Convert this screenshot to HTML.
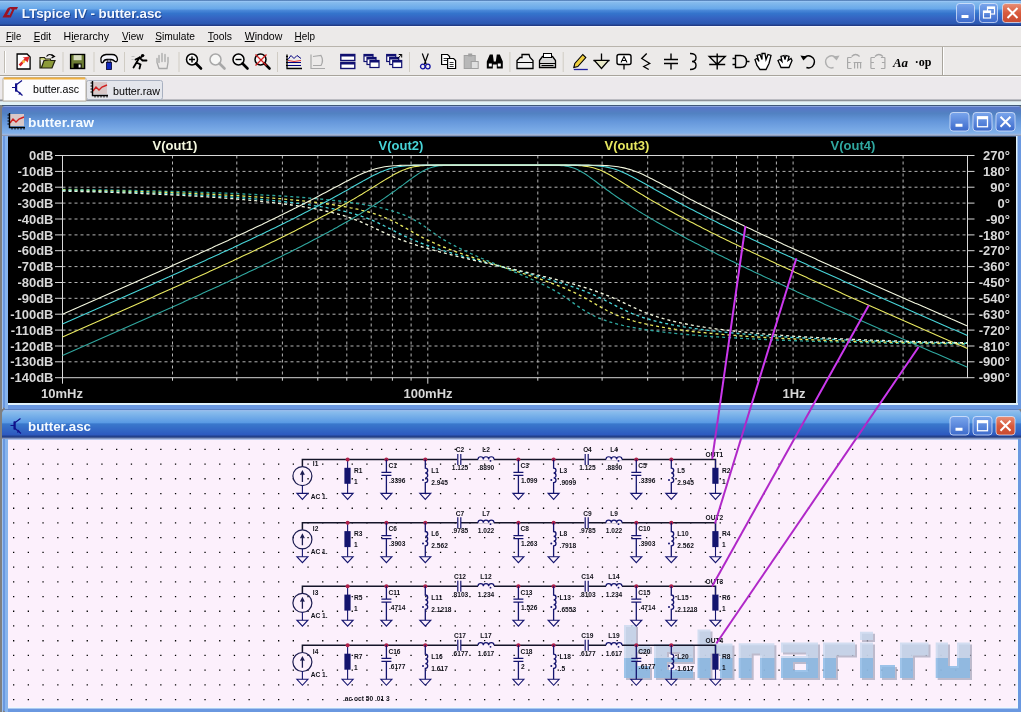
<!DOCTYPE html>
<html><head><meta charset="utf-8"><style>
html,body{margin:0;padding:0;width:1021px;height:712px;overflow:hidden;background:#808080}
svg{display:block;will-change:transform}
</style></head><body>
<svg width="1021" height="712" viewBox="0 0 1021 712">
<defs>
<linearGradient id="tbar" x1="0" y1="0" x2="0" y2="1">
<stop offset="0" stop-color="#1E4A8A"/><stop offset="0.04" stop-color="#9CC8F8"/>
<stop offset="0.10" stop-color="#84BAEC"/><stop offset="0.34" stop-color="#68A8EA"/>
<stop offset="0.40" stop-color="#4A88D8"/><stop offset="0.52" stop-color="#3474CC"/>
<stop offset="0.72" stop-color="#3562C0"/><stop offset="0.92" stop-color="#2A58B0"/>
<stop offset="0.97" stop-color="#223C88"/><stop offset="1" stop-color="#203A80"/>
</linearGradient>
<linearGradient id="wbar" x1="0" y1="0" x2="0" y2="1">
<stop offset="0" stop-color="#8AB0E8"/><stop offset="0.1" stop-color="#A8C8F4"/>
<stop offset="0.45" stop-color="#7AA8E8"/><stop offset="0.55" stop-color="#5C8ED8"/>
<stop offset="1" stop-color="#5A88D0"/>
</linearGradient>
<linearGradient id="btn" x1="0" y1="0" x2="0" y2="1">
<stop offset="0" stop-color="#7AA6EC"/><stop offset="1" stop-color="#3C6ACC"/>
</linearGradient>
<linearGradient id="btnx" x1="0" y1="0" x2="0" y2="1">
<stop offset="0" stop-color="#E89078"/><stop offset="0.5" stop-color="#D85A3C"/><stop offset="1" stop-color="#C84A30"/>
</linearGradient>
<linearGradient id="wm" x1="0" y1="0" x2="0" y2="1">
<stop offset="0" stop-color="#C8D8EC"/><stop offset="0.38" stop-color="#D4E2F2"/>
<stop offset="0.40" stop-color="#98BEE4"/><stop offset="1" stop-color="#8CB4DE"/>
</linearGradient>
<linearGradient id="wbar_in" x1="0" y1="0" x2="0" y2="1">
<stop offset="0" stop-color="#A0B8E8"/><stop offset="0.05" stop-color="#5876C6"/>
<stop offset="0.25" stop-color="#5282C2"/><stop offset="0.5" stop-color="#6496DA"/>
<stop offset="0.9" stop-color="#80B0EA"/><stop offset="1" stop-color="#A8B8D8"/>
</linearGradient>
<linearGradient id="tbar30" gradientUnits="userSpaceOnUse" x1="0" y1="0" x2="0" y2="30">
<stop offset="0" stop-color="#2A58A8"/><stop offset="0.04" stop-color="#9ABCEC"/>
<stop offset="0.10" stop-color="#88BCEC"/><stop offset="0.45" stop-color="#5A9AE4"/>
<stop offset="0.50" stop-color="#3A78CC"/><stop offset="0.85" stop-color="#2D5AC0"/>
<stop offset="0.93" stop-color="#203A80"/><stop offset="1" stop-color="#A0B0D0"/>
</linearGradient>
<linearGradient id="wbar_in40" gradientUnits="userSpaceOnUse" x1="0" y1="0" x2="0" y2="30">
<stop offset="0" stop-color="#A0B8E8"/><stop offset="0.05" stop-color="#5876C6"/>
<stop offset="0.25" stop-color="#5282C2"/><stop offset="0.5" stop-color="#6496DA"/>
<stop offset="0.9" stop-color="#80B0EA"/><stop offset="0.97" stop-color="#A8B8D8"/><stop offset="1" stop-color="#707890"/>
</linearGradient>
</defs>
<rect x="0" y="0" width="1021" height="712" fill="#808080"/>
<rect x="0" y="0" width="1021" height="26" fill="url(#tbar)"/>
<path d="M2.5,17.5 L7.5,8.5 Q8.5,7 10.5,7 L11.5,7 L7,15 L10,15 L8.8,17.5 Z" fill="#9A1424"/>
<path d="M10,7 L18,7 L16.8,9.6 L14.5,9.6 L10.8,17.5 L8.6,17.5 L12.3,9.6 L11,9.6 Z" fill="#9A1424"/>
<text x="22.8" y="19.3" font-family='"Liberation Sans", sans-serif' font-weight="bold" font-size="13" fill="#102868" fill-opacity="0.55" textLength="140" lengthAdjust="spacingAndGlyphs">LTspice IV - butter.asc</text>
<text x="21.8" y="18.3" font-family='"Liberation Sans", sans-serif' font-weight="bold" font-size="13" fill="#F4F8FF" textLength="140" lengthAdjust="spacingAndGlyphs">LTspice IV - butter.asc</text>
<rect x="956.5" y="3.5" width="18" height="19" rx="3" fill="url(#btn)" stroke="#E8F0FF" stroke-opacity="0.7"/>
<rect x="961.5" y="15.0" width="7" height="3" fill="#FFFFFF"/>
<rect x="979.5" y="3.5" width="18" height="19" rx="3" fill="url(#btn)" stroke="#E8F0FF" stroke-opacity="0.7"/>
<rect x="987.5" y="7.0" width="7" height="7" fill="none" stroke="#FFFFFF" stroke-width="1.2"/><rect x="987.5" y="7.0" width="7" height="2" fill="#FFFFFF"/>
<rect x="983.5" y="11.0" width="7" height="7" fill="url(#btn)" stroke="#FFFFFF" stroke-width="1.2"/><rect x="983.5" y="11.0" width="7" height="2" fill="#FFFFFF"/>
<rect x="1002.5" y="3.5" width="20" height="19" rx="3" fill="url(#btnx)" stroke="#E8F0FF" stroke-opacity="0.7"/>
<path d="M1007.5,8.0 L1017.5,18.0 M1017.5,8.0 L1007.5,18.0" stroke="#FFFFFF" stroke-width="2"/>
<rect x="0" y="26" width="1021" height="21" fill="#ECEAE9"/>
<rect x="0" y="26" width="1021" height="1" fill="#F4F6FC"/>
<rect x="0" y="46" width="1021" height="1" fill="#B8B4AC"/>
<text x="6" y="39.8" font-family='"Liberation Sans", sans-serif' font-size="10.8" fill="#000000" textLength="15.2" lengthAdjust="spacingAndGlyphs">File</text>
<rect x="6" y="41" width="6" height="1" fill="#000"/>
<text x="33.7" y="39.8" font-family='"Liberation Sans", sans-serif' font-size="10.8" fill="#000000" textLength="17.3" lengthAdjust="spacingAndGlyphs">Edit</text>
<rect x="33.7" y="41" width="6" height="1" fill="#000"/>
<text x="63.5" y="39.8" font-family='"Liberation Sans", sans-serif' font-size="10.8" fill="#000000" textLength="45.5" lengthAdjust="spacingAndGlyphs">Hierarchy</text>
<rect x="71.5" y="41" width="3" height="1" fill="#000"/>
<text x="122" y="39.8" font-family='"Liberation Sans", sans-serif' font-size="10.8" fill="#000000" textLength="21.4" lengthAdjust="spacingAndGlyphs">View</text>
<rect x="122" y="41" width="6" height="1" fill="#000"/>
<text x="155.3" y="39.8" font-family='"Liberation Sans", sans-serif' font-size="10.8" fill="#000000" textLength="39.7" lengthAdjust="spacingAndGlyphs">Simulate</text>
<rect x="155.3" y="41" width="6" height="1" fill="#000"/>
<text x="207.8" y="39.8" font-family='"Liberation Sans", sans-serif' font-size="10.8" fill="#000000" textLength="24.2" lengthAdjust="spacingAndGlyphs">Tools</text>
<rect x="207.8" y="41" width="6" height="1" fill="#000"/>
<text x="244.7" y="39.8" font-family='"Liberation Sans", sans-serif' font-size="10.8" fill="#000000" textLength="37.6" lengthAdjust="spacingAndGlyphs">Window</text>
<rect x="244.7" y="41" width="10" height="1" fill="#000"/>
<text x="294.6" y="39.8" font-family='"Liberation Sans", sans-serif' font-size="10.8" fill="#000000" textLength="20.4" lengthAdjust="spacingAndGlyphs">Help</text>
<rect x="294.6" y="41" width="7" height="1" fill="#000"/>
<rect x="0" y="47" width="1021" height="29" fill="#ECEAE9"/>
<rect x="0" y="75" width="1021" height="1" fill="#A8A49C"/>
<rect x="0" y="76" width="1021" height="1" fill="#F8F8F8"/>
<rect x="4" y="51" width="1" height="22" fill="#C0BCB4"/><rect x="5" y="51" width="1" height="22" fill="#FFFFFF"/>
<rect x="942" y="47" width="1" height="28" fill="#A8A49C"/><rect x="943" y="47" width="1" height="28" fill="#FFFFFF"/>
<g transform="translate(23.6,61.5)"><path d="M-6.5,-7.5 L3.5,-7.5 L6.5,-4.5 L6.5,7.5 L-6.5,7.5 Z" fill="#FFFFFF" stroke="#000" stroke-width="1.3"/><path d="M-5,3 L1,-3 L-1,-4 L6,-5 L4,1 L2,-1 L-3,5 Z" fill="#E02828"/><circle cx="0" cy="0" r="1.5" fill="#F8C040"/></g><g transform="translate(47.5,61.5)"><path d="M-7.5,-2 L-7.5,6.5 L4.5,6.5 L7.5,-1 L-3.5,-1 L-6,6" fill="#8C9A38" stroke="#202010" stroke-width="1.2"/><path d="M-7.5,-2 L-7.5,-4 L-3,-4 L-2,-2.5 L3,-2.5 L3,-1" fill="#C8D070" stroke="#202010" stroke-width="1.1"/><path d="M-1,-5 Q2,-9 6,-5" fill="none" stroke="#000" stroke-width="1.2"/><path d="M4,-7 L7,-5 L4,-3.5" fill="none" stroke="#000" stroke-width="1.1"/></g><g transform="translate(77.6,61.5)"><rect x="-7" y="-7" width="14" height="14" fill="#6C7C34" stroke="#000" stroke-width="1.4"/><rect x="-4" y="-6.3" width="8" height="5" fill="#D8DCC0"/><rect x="-4" y="2" width="8" height="5" fill="#000"/><rect x="1" y="3" width="2" height="3" fill="#FFF"/></g><g transform="translate(109.0,61.5)"><path d="M-8,-1 Q-9,-6 -3,-7 L3,-7 Q8,-7 8.5,-2 Q8,1 6,0 Q4,-2 2,-2 L-2,-2 Q-5,-2 -6,1 Q-8,2 -8,-1 Z" fill="#F4F4FA" stroke="#000" stroke-width="1.3"/><rect x="-1.8" y="-2" width="3.6" height="3" fill="#8888A8" stroke="#000" stroke-width="0.6"/><rect x="-2.5" y="1" width="5" height="7" fill="#1028C0" stroke="#000030" stroke-width="0.8"/></g><g transform="translate(139.5,61.5)"><path d="M-6,6 L-3,1 L1,3 L0,7 M-3,1 L0,-4 L3,-1 L7,-1 M0,-4 L-4,-2 M1,-4 L4,-6" fill="none" stroke="#000" stroke-width="1.8" stroke-linecap="round"/><circle cx="3" cy="-6" r="1.6" fill="#000"/><path d="M-8,-5 L-5,-5 M-8,-2 L-6,-2" stroke="#C0C0C0" stroke-width="1"/></g><g transform="translate(163.0,61.5)"><path d="M-4,7 L-6,1 L-6,-3 M-4,1 L-4,-6 M-1,0 L-1,-8 M2,0 L2,-7 M5,1 L5,-4 M5,1 L4,7 L-4,7" fill="none" stroke="#A8A8A8" stroke-width="1.3" stroke-linecap="round"/></g><g transform="translate(194.0,61.5)"><circle cx="-2" cy="-2" r="5.5" fill="#FFFFFF" fill-opacity="0.6" stroke="#000" stroke-width="1.5"/><path d="M2,2 L7,7" stroke="#000" stroke-width="2.6" stroke-linecap="round"/><path d="M-5,-2 L1,-2 M-2,-5 L-2,1" stroke="#000" stroke-width="1.4"/></g><g transform="translate(217.5,61.5)"><circle cx="-2" cy="-2" r="5.5" fill="#FFFFFF" fill-opacity="0.6" stroke="#A8A8A8" stroke-width="1.5"/><path d="M2,2 L7,7" stroke="#A8A8A8" stroke-width="2.6" stroke-linecap="round"/></g><g transform="translate(240.5,61.5)"><circle cx="-2" cy="-2" r="5.5" fill="#FFFFFF" fill-opacity="0.6" stroke="#000" stroke-width="1.5"/><path d="M2,2 L7,7" stroke="#000" stroke-width="2.6" stroke-linecap="round"/><path d="M-5,-2 L1,-2" stroke="#000" stroke-width="1.4"/></g><g transform="translate(262.5,61.5)"><circle cx="-2" cy="-2" r="5.5" fill="#FFFFFF" fill-opacity="0.6" stroke="#000" stroke-width="1.5"/><path d="M2,2 L7,7" stroke="#000" stroke-width="2.6" stroke-linecap="round"/><path d="M-7,-7 L4,4 M4,-7 L-7,4" stroke="#D02020" stroke-width="1.3"/></g><g transform="translate(294.0,61.5)"><path d="M-7,-7 L-7,7 L8,7" fill="none" stroke="#000" stroke-width="1.3"/><path d="M-6,-2 L-3,-6 L0,-3 L3,-6 L7,-3 M-6,1 L7,1 M-6,4 L7,4" fill="none" stroke="#000080" stroke-width="1"/><path d="M-6,-1 L0,-0 L7,-1" stroke="#E03030" stroke-width="1" fill="none"/><path d="M-8,-5 h2 M-8,-2 h2 M-8,1 h2 M-8,4 h2" stroke="#000" stroke-width="1"/></g><g transform="translate(317.0,61.5)"><path d="M-6,-7 L-6,7 L8,7 M-4,-5 L4,-6 Q7,-1 4,4 L-4,4" fill="none" stroke="#A8A8A8" stroke-width="1.2"/></g><g transform="translate(347.8,61.5)"><rect x="-7" y="-7" width="14" height="6" fill="#FFF" stroke="#101070" stroke-width="1.4"/><rect x="-7" y="1" width="14" height="6" fill="#FFF" stroke="#101070" stroke-width="1.4"/><rect x="-7" y="-7" width="14" height="2" fill="#101070"/><rect x="-7" y="1" width="14" height="2" fill="#101070"/></g><g transform="translate(371.0,61.5)"><rect x="-7" y="-7" width="9" height="7" fill="#FFF" stroke="#101070" stroke-width="1.2"/><rect x="-7" y="-7" width="9" height="2" fill="#101070"/><rect x="-4" y="-4" width="9" height="7" fill="#FFF" stroke="#101070" stroke-width="1.2"/><rect x="-4" y="-4" width="9" height="2" fill="#101070"/><rect x="-1" y="-1" width="9" height="7" fill="#FFF" stroke="#101070" stroke-width="1.2"/><rect x="-1" y="-1" width="9" height="2" fill="#101070"/></g><g transform="translate(393.7,61.5)"><rect x="-7" y="-7" width="9" height="7" fill="#FFF" stroke="#101070" stroke-width="1.2"/><rect x="-7" y="-7" width="9" height="2" fill="#101070"/><rect x="-4" y="-4" width="9" height="7" fill="#FFF" stroke="#101070" stroke-width="1.2"/><rect x="-4" y="-4" width="9" height="2" fill="#101070"/><rect x="-1" y="-1" width="9" height="7" fill="#FFF" stroke="#101070" stroke-width="1.2"/><rect x="-1" y="-1" width="9" height="2" fill="#101070"/><path d="M4,-3 L8,-7 M5,-7 L8,-7 L8,-4" fill="none" stroke="#000" stroke-width="1"/></g><g transform="translate(425.3,61.5)"><path d="M-3,-8 L1,3 M3,-8 L-1,3" stroke="#000" stroke-width="1.2"/><circle cx="-2.5" cy="5" r="2.3" fill="none" stroke="#1010A0" stroke-width="1.3"/><circle cx="2.5" cy="5" r="2.3" fill="none" stroke="#1010A0" stroke-width="1.3"/></g><g transform="translate(448.6,61.5)"><path d="M-7,-7 L-1,-7 L1,-5 L1,3 L-7,3 Z" fill="#FFF" stroke="#000" stroke-width="1.2"/><path d="M-1,-3 L5,-3 L7,-1 L7,7 L-1,7 Z" fill="#FFF" stroke="#000" stroke-width="1.2"/><path d="M-5,-3 h4 M-5,-1 h4 M1,1 h4 M1,3 h4 M1,5 h4" stroke="#000" stroke-width="0.8"/></g><g transform="translate(471.2,61.5)"><rect x="-7" y="-6" width="11" height="13" fill="#B8B8B8" stroke="#A0A0A0"/><rect x="-3" y="-8" width="4" height="3" fill="#A0A0A0"/><rect x="0" y="0" width="7" height="7" fill="#E0E0E0" stroke="#A0A0A0"/></g><g transform="translate(494.8,61.5)"><path d="M-8,7 L-8,0 L-5,-7 L-2,-7 L-1,0 L1,0 L2,-7 L5,-7 L8,0 L8,7 L2,7 L2,3 L-2,3 L-2,7 Z" fill="#000"/><rect x="-6" y="2" width="3" height="3" fill="#FFF"/><rect x="3" y="2" width="3" height="3" fill="#FFF"/></g><g transform="translate(525.0,61.5)"><path d="M-8,-1 L-5,-4 L-3,-4 L-3,-7 L4,-7 L5,-4 L8,-1 L8,7 L-8,7 Z" fill="#F0F0F0" stroke="#000" stroke-width="1.3"/><path d="M-8,1 L8,1" stroke="#000" stroke-width="1"/></g><g transform="translate(547.5,61.5)"><path d="M-8,-1 L-5,-5 L5,-5 L8,-1 L8,6 L-8,6 Z" fill="#D8D8D8" stroke="#000" stroke-width="1.3"/><rect x="-4" y="-8" width="8" height="4" fill="#FFF" stroke="#000"/><path d="M-8,2 L8,2 M-6,4 L6,4" stroke="#000" stroke-width="1"/></g><g transform="translate(579.8,61.5)"><path d="M-6,8 L8,8" stroke="#2020A0" stroke-width="1.3"/><path d="M-6,6 L-5,2 L3,-7 L6,-4 L-2,5 Z" fill="#F0D040" stroke="#000" stroke-width="1.1"/></g><g transform="translate(601.5,61.5)"><path d="M0,-8 L0,-1 M-8,-1 L8,-1" stroke="#000" stroke-width="1.3"/><path d="M-7,-1 L7,-1 L0,7 Z" fill="#E8E8C8" stroke="#000" stroke-width="1.2"/></g><g transform="translate(624.0,61.5)"><rect x="-7" y="-7" width="14" height="10" rx="2" fill="#FFF" stroke="#000" stroke-width="1.4"/><path d="M-3,1 L0,-5 L3,1 M-2,-1 L2,-1" fill="none" stroke="#000" stroke-width="1.1"/><path d="M0,3 L0,8" stroke="#000" stroke-width="1.3"/></g><g transform="translate(646.7,61.5)"><path d="M0,-8 L-5,-3 L3,2 L-3,5 L2,8" fill="none" stroke="#000" stroke-width="1.3"/></g><g transform="translate(671.0,61.5)"><path d="M0,-8 L0,-2 M-7,-2 L7,-2 M-7,2 L7,2 M0,2 L0,8" stroke="#000" stroke-width="1.4"/></g><g transform="translate(693.0,61.5)"><path d="M-3,-8 Q3,-8 3,-4 Q3,0 -1,0 Q3,0 3,4 Q3,8 -3,8" fill="none" stroke="#000" stroke-width="1.4"/></g><g transform="translate(717.2,61.5)"><path d="M-8,-5 L8,-5 L0,3 Z M-8,3 L8,3 M0,-8 L0,8" fill="none" stroke="#000" stroke-width="1.4"/></g><g transform="translate(740.5,61.5)"><path d="M-5,-6 L0,-6 Q6,-6 6,0 Q6,6 0,6 L-5,6 Z M-8,-3 L-5,-3 M-8,3 L-5,3 M6,0 L9,0" fill="none" stroke="#000" stroke-width="1.4"/></g><g transform="translate(763.0,61.5)"><path d="M-6,4 L-8,-2 L-6,-3 L-4,0 L-6,-6 L-3,-7 L-1,-2 L-1,-8 L2,-8 L3,-2 L5,-7 L8,-6 L6,2 L3,8 L-3,8 Z" fill="#FFF" stroke="#000" stroke-width="1.3"/></g><g transform="translate(785.0,61.5)"><path d="M-4,6 L-7,-1 L-5,-2 L-3,0 L-4,-5 L-1,-6 L0,-2 L1,-6 L4,-5 L3,-1 L6,-3 L7,-1 L4,6 Z" fill="#FFF" stroke="#000" stroke-width="1.3"/></g><g transform="translate(808.4,61.5)"><path d="M-5,-3 A6,6 0 1 1 -2,6" fill="none" stroke="#000" stroke-width="1.6"/><path d="M-8,-6 L-5,-1 L-1,-5 Z" fill="#000"/></g><g transform="translate(831.6,61.5)"><path d="M5,-3 A6,6 0 1 0 2,6" fill="none" stroke="#B0B0B0" stroke-width="1.6"/><path d="M8,-6 L5,-1 L1,-5 Z" fill="#B0B0B0"/></g><g transform="translate(854.6,61.5)"><path d="M-7,-4 L-7,7 M-7,-4 L-3,-4 M-7,1 L-4,1 M-7,7 L-3,7 M-1,1 L7,1 M0,1 L0,7 M3,1 L3,7 M6,1 L6,7 M-3,-5 Q1,-9 5,-5" fill="none" stroke="#A8A8A8" stroke-width="1.2"/></g><g transform="translate(877.9,61.5)"><path d="M-7,-4 L-7,7 M-7,-4 L-3,-4 M-7,1 L-4,1 M-7,7 L-3,7 M7,-4 L7,7 M7,-4 L3,-4 M7,1 L4,1 M7,7 L3,7 M-3,-5 Q1,-9 5,-5" fill="none" stroke="#A8A8A8" stroke-width="1.2"/></g><text x="900.5" y="66.5" text-anchor="middle" font-family='"Liberation Serif", serif' font-weight="bold" font-style="italic" font-size="13" fill="#000">Aa</text><text x="923" y="65.5" text-anchor="middle" font-family='"Liberation Serif", serif' font-weight="bold" font-size="12" fill="#000">·op</text>
<rect x="62.5" y="52" width="1" height="20" fill="#D0CCC4"/>
<rect x="93.5" y="52" width="1" height="20" fill="#D0CCC4"/>
<rect x="124" y="52" width="1" height="20" fill="#D0CCC4"/>
<rect x="178.5" y="52" width="1" height="20" fill="#D0CCC4"/>
<rect x="277" y="52" width="1" height="20" fill="#D0CCC4"/>
<rect x="409" y="52" width="1" height="20" fill="#D0CCC4"/>
<rect x="509.4" y="52" width="1" height="20" fill="#D0CCC4"/>
<rect x="562.7" y="52" width="1" height="20" fill="#D0CCC4"/>
<rect x="0" y="77" width="1021" height="28" fill="#ECE9EC"/>
<rect x="0" y="99.5" width="1021" height="2" fill="#8C9098"/>
<rect x="0" y="101.5" width="1021" height="3.5" fill="#E2F2F6"/>
<rect x="86.5" y="80.5" width="76" height="19" rx="2" fill="#E4E6EC" stroke="#A8B0C0"/>
<path d="M3,101 L3,79 Q3,77.5 5,77.5 L84,77.5 Q86,77.5 86,79 L86,101 Z" fill="#FCFCFE" stroke="#B8B0A0"/>
<rect x="4" y="77.5" width="81" height="2" fill="#F0B040"/>
<text x="33" y="93" font-family='"Liberation Sans", sans-serif' font-size="11" fill="#000000" textLength="46" lengthAdjust="spacingAndGlyphs">butter.asc</text>
<text x="113" y="95" font-family='"Liberation Sans", sans-serif' font-size="11" fill="#000000" textLength="47" lengthAdjust="spacingAndGlyphs">butter.raw</text>
<path d="M12,87.5 L16,87.5 M16,83.5 L16,91.5 M16,85.0 L22,80.5 M16,90.0 L22.5,95.5" stroke="#10108A" stroke-width="1.2" fill="none"/>
<rect x="15" y="83.5" width="2.2" height="8" fill="#10108A"/>
<path d="M18.5,95.0 L21.5,93.5 L19.5,91.5 Z" fill="#10108A"/>
<rect x="93" y="82" width="14" height="12" fill="#D8C8C8"/>
<path d="M93,91 L96,87 L99,90 L102,87 L107,85" stroke="#D02020" stroke-width="1.4" fill="none"/>
<path d="M92.5,81 L92.5,95.5 L108,95.5" stroke="#000" stroke-width="1.4" fill="none"/>
<path d="M90.5,83h2M90.5,86h2M90.5,89h2M90.5,92h2M95,97.5v-2M98,97.5v-2M101,97.5v-2M104,97.5v-2M107,97.5v-2" stroke="#000" stroke-width="1"/>
<rect x="2" y="105" width="1019" height="304" rx="5" fill="#6A98E0"/>
<rect x="2" y="117" width="1" height="292" fill="#9CC0F0"/>
<rect x="5" y="135" width="3" height="274" fill="#88B4EC"/>
<rect x="1016" y="135" width="5" height="274" fill="#6A98E0"/>
<rect x="2" y="105" width="1019" height="1" fill="#405878"/>
<svg x="2" y="106" width="1019" height="30" viewBox="0 0 1019 30" preserveAspectRatio="none"><rect x="0" y="0" width="1019" height="40" rx="4" fill="url(#wbar_in40)"/></svg>
<rect x="10" y="114" width="14" height="12" fill="#D8C8C8"/>
<path d="M10,123 L13,119 L16,122 L19,119 L24,117" stroke="#D02020" stroke-width="1.4" fill="none"/>
<path d="M9.5,113 L9.5,127.5 L25,127.5" stroke="#000" stroke-width="1.4" fill="none"/>
<path d="M7.5,115h2M7.5,118h2M7.5,121h2M7.5,124h2M12,129.5v-2M15,129.5v-2M18,129.5v-2M21,129.5v-2M24,129.5v-2" stroke="#000" stroke-width="1"/>
<text x="28" y="126.5" font-family='"Liberation Sans", sans-serif' font-weight="bold" font-size="13.5" fill="#F4FAFF" textLength="66" lengthAdjust="spacingAndGlyphs">butter.raw</text>
<rect x="950.0" y="112.5" width="19" height="18.5" rx="3" fill="url(#btn)" stroke="#E8F0FF" stroke-opacity="0.7"/>
<rect x="955.5" y="123.75" width="7" height="3" fill="#FFFFFF"/>
<rect x="973.0" y="112.5" width="19" height="18.5" rx="3" fill="url(#btn)" stroke="#E8F0FF" stroke-opacity="0.7"/>
<rect x="977.5" y="116.75" width="10" height="10" fill="none" stroke="#FFFFFF" stroke-width="1.3"/><rect x="977.5" y="116.75" width="10" height="2.5" fill="#FFFFFF"/>
<rect x="996.0" y="112.5" width="19" height="18.5" rx="3" fill="url(#btn)" stroke="#E8F0FF" stroke-opacity="0.7"/>
<path d="M1000.5,116.75 L1010.5,126.75 M1010.5,116.75 L1000.5,126.75" stroke="#FFFFFF" stroke-width="2"/>
<rect x="2" y="409" width="1019" height="303" rx="5" fill="#6A98E0"/>
<rect x="2" y="421" width="1" height="291" fill="#9CC0F0"/>
<rect x="5" y="439" width="3" height="273" fill="#88B4EC"/>
<rect x="1016" y="439" width="5" height="273" fill="#6A98E0"/>
<svg x="2" y="409" width="1019" height="30" viewBox="0 0 1019 30" preserveAspectRatio="none"><rect x="0" y="0" width="1019" height="40" rx="5" fill="url(#tbar30)"/></svg>
<path d="M10.5,425.5 L14.5,425.5 M14.5,421.5 L14.5,429.5 M14.5,423.0 L20.5,418.5 M14.5,428.0 L21.0,433.5" stroke="#10108A" stroke-width="1.2" fill="none"/>
<rect x="13.5" y="421.5" width="2.2" height="8" fill="#10108A"/>
<path d="M17.0,433.0 L20.0,431.5 L18.0,429.5 Z" fill="#10108A"/>
<text x="28" y="430.5" font-family='"Liberation Sans", sans-serif' font-weight="bold" font-size="13.5" fill="#F4FAFF" textLength="63" lengthAdjust="spacingAndGlyphs">butter.asc</text>
<rect x="950.0" y="416.5" width="19" height="18.5" rx="3" fill="url(#btn)" stroke="#E8F0FF" stroke-opacity="0.7"/>
<rect x="955.5" y="427.75" width="7" height="3" fill="#FFFFFF"/>
<rect x="973.0" y="416.5" width="19" height="18.5" rx="3" fill="url(#btn)" stroke="#E8F0FF" stroke-opacity="0.7"/>
<rect x="977.5" y="420.75" width="10" height="10" fill="none" stroke="#FFFFFF" stroke-width="1.3"/><rect x="977.5" y="420.75" width="10" height="2.5" fill="#FFFFFF"/>
<rect x="996.0" y="416.5" width="19" height="18.5" rx="3" fill="url(#btnx)" stroke="#E8F0FF" stroke-opacity="0.7"/>
<path d="M1000.5,420.75 L1010.5,430.75 M1010.5,420.75 L1000.5,430.75" stroke="#FFFFFF" stroke-width="2"/>
<rect x="8" y="136.5" width="1008" height="266.5" fill="#000000"/>
<rect x="8" y="403" width="1010" height="2" fill="#E0F2FC"/>
<rect x="1016" y="136" width="1.5" height="269" fill="#E0F2FC"/>
<line x1="172.5" y1="155.5" x2="172.5" y2="377.7" stroke="#B4B4B4" stroke-width="1" stroke-dasharray="3,3"/>
<line x1="172.5" y1="377.7" x2="172.5" y2="380.7" stroke="#D8D8D8" stroke-width="1"/>
<line x1="236.8" y1="155.5" x2="236.8" y2="377.7" stroke="#B4B4B4" stroke-width="1" stroke-dasharray="3,3"/>
<line x1="236.8" y1="377.7" x2="236.8" y2="380.7" stroke="#D8D8D8" stroke-width="1"/>
<line x1="282.4" y1="155.5" x2="282.4" y2="377.7" stroke="#B4B4B4" stroke-width="1" stroke-dasharray="3,3"/>
<line x1="282.4" y1="377.7" x2="282.4" y2="380.7" stroke="#D8D8D8" stroke-width="1"/>
<line x1="317.8" y1="155.5" x2="317.8" y2="377.7" stroke="#B4B4B4" stroke-width="1" stroke-dasharray="3,3"/>
<line x1="317.8" y1="377.7" x2="317.8" y2="380.7" stroke="#D8D8D8" stroke-width="1"/>
<line x1="346.8" y1="155.5" x2="346.8" y2="377.7" stroke="#B4B4B4" stroke-width="1" stroke-dasharray="3,3"/>
<line x1="346.8" y1="377.7" x2="346.8" y2="380.7" stroke="#D8D8D8" stroke-width="1"/>
<line x1="371.2" y1="155.5" x2="371.2" y2="377.7" stroke="#B4B4B4" stroke-width="1" stroke-dasharray="3,3"/>
<line x1="371.2" y1="377.7" x2="371.2" y2="380.7" stroke="#D8D8D8" stroke-width="1"/>
<line x1="392.4" y1="155.5" x2="392.4" y2="377.7" stroke="#B4B4B4" stroke-width="1" stroke-dasharray="3,3"/>
<line x1="392.4" y1="377.7" x2="392.4" y2="380.7" stroke="#D8D8D8" stroke-width="1"/>
<line x1="411.1" y1="155.5" x2="411.1" y2="377.7" stroke="#B4B4B4" stroke-width="1" stroke-dasharray="3,3"/>
<line x1="411.1" y1="377.7" x2="411.1" y2="380.7" stroke="#D8D8D8" stroke-width="1"/>
<line x1="427.8" y1="155.5" x2="427.8" y2="377.7" stroke="#B4B4B4" stroke-width="1" stroke-dasharray="3,3"/>
<line x1="427.8" y1="377.7" x2="427.8" y2="383.7" stroke="#D8D8D8" stroke-width="1"/>
<line x1="537.8" y1="155.5" x2="537.8" y2="377.7" stroke="#B4B4B4" stroke-width="1" stroke-dasharray="3,3"/>
<line x1="537.8" y1="377.7" x2="537.8" y2="380.7" stroke="#D8D8D8" stroke-width="1"/>
<line x1="602.1" y1="155.5" x2="602.1" y2="377.7" stroke="#B4B4B4" stroke-width="1" stroke-dasharray="3,3"/>
<line x1="602.1" y1="377.7" x2="602.1" y2="380.7" stroke="#D8D8D8" stroke-width="1"/>
<line x1="647.7" y1="155.5" x2="647.7" y2="377.7" stroke="#B4B4B4" stroke-width="1" stroke-dasharray="3,3"/>
<line x1="647.7" y1="377.7" x2="647.7" y2="380.7" stroke="#D8D8D8" stroke-width="1"/>
<line x1="683.1" y1="155.5" x2="683.1" y2="377.7" stroke="#B4B4B4" stroke-width="1" stroke-dasharray="3,3"/>
<line x1="683.1" y1="377.7" x2="683.1" y2="380.7" stroke="#D8D8D8" stroke-width="1"/>
<line x1="712.1" y1="155.5" x2="712.1" y2="377.7" stroke="#B4B4B4" stroke-width="1" stroke-dasharray="3,3"/>
<line x1="712.1" y1="377.7" x2="712.1" y2="380.7" stroke="#D8D8D8" stroke-width="1"/>
<line x1="736.5" y1="155.5" x2="736.5" y2="377.7" stroke="#B4B4B4" stroke-width="1" stroke-dasharray="3,3"/>
<line x1="736.5" y1="377.7" x2="736.5" y2="380.7" stroke="#D8D8D8" stroke-width="1"/>
<line x1="757.7" y1="155.5" x2="757.7" y2="377.7" stroke="#B4B4B4" stroke-width="1" stroke-dasharray="3,3"/>
<line x1="757.7" y1="377.7" x2="757.7" y2="380.7" stroke="#D8D8D8" stroke-width="1"/>
<line x1="776.4" y1="155.5" x2="776.4" y2="377.7" stroke="#B4B4B4" stroke-width="1" stroke-dasharray="3,3"/>
<line x1="776.4" y1="377.7" x2="776.4" y2="380.7" stroke="#D8D8D8" stroke-width="1"/>
<line x1="793.1" y1="155.5" x2="793.1" y2="377.7" stroke="#B4B4B4" stroke-width="1" stroke-dasharray="3,3"/>
<line x1="793.1" y1="377.7" x2="793.1" y2="383.7" stroke="#D8D8D8" stroke-width="1"/>
<line x1="903.1" y1="155.5" x2="903.1" y2="377.7" stroke="#B4B4B4" stroke-width="1" stroke-dasharray="3,3"/>
<line x1="903.1" y1="377.7" x2="903.1" y2="380.7" stroke="#D8D8D8" stroke-width="1"/>
<line x1="62.5" y1="171.4" x2="967.5" y2="171.4" stroke="#B4B4B4" stroke-width="1" stroke-dasharray="3,3"/>
<line x1="62.5" y1="187.2" x2="967.5" y2="187.2" stroke="#B4B4B4" stroke-width="1" stroke-dasharray="3,3"/>
<line x1="62.5" y1="203.1" x2="967.5" y2="203.1" stroke="#B4B4B4" stroke-width="1" stroke-dasharray="3,3"/>
<line x1="62.5" y1="219.0" x2="967.5" y2="219.0" stroke="#B4B4B4" stroke-width="1" stroke-dasharray="3,3"/>
<line x1="62.5" y1="234.9" x2="967.5" y2="234.9" stroke="#B4B4B4" stroke-width="1" stroke-dasharray="3,3"/>
<line x1="62.5" y1="250.7" x2="967.5" y2="250.7" stroke="#B4B4B4" stroke-width="1" stroke-dasharray="3,3"/>
<line x1="62.5" y1="266.6" x2="967.5" y2="266.6" stroke="#B4B4B4" stroke-width="1" stroke-dasharray="3,3"/>
<line x1="62.5" y1="282.5" x2="967.5" y2="282.5" stroke="#B4B4B4" stroke-width="1" stroke-dasharray="3,3"/>
<line x1="62.5" y1="298.3" x2="967.5" y2="298.3" stroke="#B4B4B4" stroke-width="1" stroke-dasharray="3,3"/>
<line x1="62.5" y1="314.2" x2="967.5" y2="314.2" stroke="#B4B4B4" stroke-width="1" stroke-dasharray="3,3"/>
<line x1="62.5" y1="330.1" x2="967.5" y2="330.1" stroke="#B4B4B4" stroke-width="1" stroke-dasharray="3,3"/>
<line x1="62.5" y1="346.0" x2="967.5" y2="346.0" stroke="#B4B4B4" stroke-width="1" stroke-dasharray="3,3"/>
<line x1="62.5" y1="361.8" x2="967.5" y2="361.8" stroke="#B4B4B4" stroke-width="1" stroke-dasharray="3,3"/>
<line x1="55" y1="155.5" x2="62.5" y2="155.5" stroke="#D8D8D8" stroke-width="1"/>
<line x1="967.5" y1="155.5" x2="974.5" y2="155.5" stroke="#D8D8D8" stroke-width="1"/>
<text x="53.5" y="160.1" text-anchor="end" font-family='"Liberation Sans", sans-serif' font-weight="bold" font-size="13" fill="#D8D8D8">0dB</text>
<text x="1010" y="160.1" text-anchor="end" font-family='"Liberation Sans", sans-serif' font-weight="bold" font-size="13" fill="#D8D8D8">270°</text>
<line x1="55" y1="171.4" x2="62.5" y2="171.4" stroke="#D8D8D8" stroke-width="1"/>
<line x1="967.5" y1="171.4" x2="974.5" y2="171.4" stroke="#D8D8D8" stroke-width="1"/>
<text x="53.5" y="176.0" text-anchor="end" font-family='"Liberation Sans", sans-serif' font-weight="bold" font-size="13" fill="#D8D8D8">-10dB</text>
<text x="1010" y="176.0" text-anchor="end" font-family='"Liberation Sans", sans-serif' font-weight="bold" font-size="13" fill="#D8D8D8">180°</text>
<line x1="55" y1="187.2" x2="62.5" y2="187.2" stroke="#D8D8D8" stroke-width="1"/>
<line x1="967.5" y1="187.2" x2="974.5" y2="187.2" stroke="#D8D8D8" stroke-width="1"/>
<text x="53.5" y="191.8" text-anchor="end" font-family='"Liberation Sans", sans-serif' font-weight="bold" font-size="13" fill="#D8D8D8">-20dB</text>
<text x="1010" y="191.8" text-anchor="end" font-family='"Liberation Sans", sans-serif' font-weight="bold" font-size="13" fill="#D8D8D8">90°</text>
<line x1="55" y1="203.1" x2="62.5" y2="203.1" stroke="#D8D8D8" stroke-width="1"/>
<line x1="967.5" y1="203.1" x2="974.5" y2="203.1" stroke="#D8D8D8" stroke-width="1"/>
<text x="53.5" y="207.7" text-anchor="end" font-family='"Liberation Sans", sans-serif' font-weight="bold" font-size="13" fill="#D8D8D8">-30dB</text>
<text x="1010" y="207.7" text-anchor="end" font-family='"Liberation Sans", sans-serif' font-weight="bold" font-size="13" fill="#D8D8D8">0°</text>
<line x1="55" y1="219.0" x2="62.5" y2="219.0" stroke="#D8D8D8" stroke-width="1"/>
<line x1="967.5" y1="219.0" x2="974.5" y2="219.0" stroke="#D8D8D8" stroke-width="1"/>
<text x="53.5" y="223.6" text-anchor="end" font-family='"Liberation Sans", sans-serif' font-weight="bold" font-size="13" fill="#D8D8D8">-40dB</text>
<text x="1010" y="223.6" text-anchor="end" font-family='"Liberation Sans", sans-serif' font-weight="bold" font-size="13" fill="#D8D8D8">-90°</text>
<line x1="55" y1="234.9" x2="62.5" y2="234.9" stroke="#D8D8D8" stroke-width="1"/>
<line x1="967.5" y1="234.9" x2="974.5" y2="234.9" stroke="#D8D8D8" stroke-width="1"/>
<text x="53.5" y="239.5" text-anchor="end" font-family='"Liberation Sans", sans-serif' font-weight="bold" font-size="13" fill="#D8D8D8">-50dB</text>
<text x="1010" y="239.5" text-anchor="end" font-family='"Liberation Sans", sans-serif' font-weight="bold" font-size="13" fill="#D8D8D8">-180°</text>
<line x1="55" y1="250.7" x2="62.5" y2="250.7" stroke="#D8D8D8" stroke-width="1"/>
<line x1="967.5" y1="250.7" x2="974.5" y2="250.7" stroke="#D8D8D8" stroke-width="1"/>
<text x="53.5" y="255.3" text-anchor="end" font-family='"Liberation Sans", sans-serif' font-weight="bold" font-size="13" fill="#D8D8D8">-60dB</text>
<text x="1010" y="255.3" text-anchor="end" font-family='"Liberation Sans", sans-serif' font-weight="bold" font-size="13" fill="#D8D8D8">-270°</text>
<line x1="55" y1="266.6" x2="62.5" y2="266.6" stroke="#D8D8D8" stroke-width="1"/>
<line x1="967.5" y1="266.6" x2="974.5" y2="266.6" stroke="#D8D8D8" stroke-width="1"/>
<text x="53.5" y="271.2" text-anchor="end" font-family='"Liberation Sans", sans-serif' font-weight="bold" font-size="13" fill="#D8D8D8">-70dB</text>
<text x="1010" y="271.2" text-anchor="end" font-family='"Liberation Sans", sans-serif' font-weight="bold" font-size="13" fill="#D8D8D8">-360°</text>
<line x1="55" y1="282.5" x2="62.5" y2="282.5" stroke="#D8D8D8" stroke-width="1"/>
<line x1="967.5" y1="282.5" x2="974.5" y2="282.5" stroke="#D8D8D8" stroke-width="1"/>
<text x="53.5" y="287.1" text-anchor="end" font-family='"Liberation Sans", sans-serif' font-weight="bold" font-size="13" fill="#D8D8D8">-80dB</text>
<text x="1010" y="287.1" text-anchor="end" font-family='"Liberation Sans", sans-serif' font-weight="bold" font-size="13" fill="#D8D8D8">-450°</text>
<line x1="55" y1="298.3" x2="62.5" y2="298.3" stroke="#D8D8D8" stroke-width="1"/>
<line x1="967.5" y1="298.3" x2="974.5" y2="298.3" stroke="#D8D8D8" stroke-width="1"/>
<text x="53.5" y="302.9" text-anchor="end" font-family='"Liberation Sans", sans-serif' font-weight="bold" font-size="13" fill="#D8D8D8">-90dB</text>
<text x="1010" y="302.9" text-anchor="end" font-family='"Liberation Sans", sans-serif' font-weight="bold" font-size="13" fill="#D8D8D8">-540°</text>
<line x1="55" y1="314.2" x2="62.5" y2="314.2" stroke="#D8D8D8" stroke-width="1"/>
<line x1="967.5" y1="314.2" x2="974.5" y2="314.2" stroke="#D8D8D8" stroke-width="1"/>
<text x="53.5" y="318.8" text-anchor="end" font-family='"Liberation Sans", sans-serif' font-weight="bold" font-size="13" fill="#D8D8D8">-100dB</text>
<text x="1010" y="318.8" text-anchor="end" font-family='"Liberation Sans", sans-serif' font-weight="bold" font-size="13" fill="#D8D8D8">-630°</text>
<line x1="55" y1="330.1" x2="62.5" y2="330.1" stroke="#D8D8D8" stroke-width="1"/>
<line x1="967.5" y1="330.1" x2="974.5" y2="330.1" stroke="#D8D8D8" stroke-width="1"/>
<text x="53.5" y="334.7" text-anchor="end" font-family='"Liberation Sans", sans-serif' font-weight="bold" font-size="13" fill="#D8D8D8">-110dB</text>
<text x="1010" y="334.7" text-anchor="end" font-family='"Liberation Sans", sans-serif' font-weight="bold" font-size="13" fill="#D8D8D8">-720°</text>
<line x1="55" y1="346.0" x2="62.5" y2="346.0" stroke="#D8D8D8" stroke-width="1"/>
<line x1="967.5" y1="346.0" x2="974.5" y2="346.0" stroke="#D8D8D8" stroke-width="1"/>
<text x="53.5" y="350.6" text-anchor="end" font-family='"Liberation Sans", sans-serif' font-weight="bold" font-size="13" fill="#D8D8D8">-120dB</text>
<text x="1010" y="350.6" text-anchor="end" font-family='"Liberation Sans", sans-serif' font-weight="bold" font-size="13" fill="#D8D8D8">-810°</text>
<line x1="55" y1="361.8" x2="62.5" y2="361.8" stroke="#D8D8D8" stroke-width="1"/>
<line x1="967.5" y1="361.8" x2="974.5" y2="361.8" stroke="#D8D8D8" stroke-width="1"/>
<text x="53.5" y="366.4" text-anchor="end" font-family='"Liberation Sans", sans-serif' font-weight="bold" font-size="13" fill="#D8D8D8">-130dB</text>
<text x="1010" y="366.4" text-anchor="end" font-family='"Liberation Sans", sans-serif' font-weight="bold" font-size="13" fill="#D8D8D8">-900°</text>
<line x1="55" y1="377.7" x2="62.5" y2="377.7" stroke="#D8D8D8" stroke-width="1"/>
<line x1="967.5" y1="377.7" x2="974.5" y2="377.7" stroke="#D8D8D8" stroke-width="1"/>
<text x="53.5" y="382.3" text-anchor="end" font-family='"Liberation Sans", sans-serif' font-weight="bold" font-size="13" fill="#D8D8D8">-140dB</text>
<text x="1010" y="382.3" text-anchor="end" font-family='"Liberation Sans", sans-serif' font-weight="bold" font-size="13" fill="#D8D8D8">-990°</text>
<rect x="62.5" y="155.5" width="905.0" height="222.2" fill="none" stroke="#D8D8D8" stroke-width="1"/>
<line x1="62.5" y1="377.7" x2="62.5" y2="383.7" stroke="#D8D8D8" stroke-width="1"/>
<text x="62" y="398" text-anchor="middle" font-family='"Liberation Sans", sans-serif' font-weight="bold" font-size="13" fill="#D8D8D8">10mHz</text>
<text x="428" y="398" text-anchor="middle" font-family='"Liberation Sans", sans-serif' font-weight="bold" font-size="13" fill="#D8D8D8">100mHz</text>
<text x="794" y="398" text-anchor="middle" font-family='"Liberation Sans", sans-serif' font-weight="bold" font-size="13" fill="#D8D8D8">1Hz</text>
<text x="175" y="150.3" text-anchor="middle" font-family='"Liberation Sans", sans-serif' font-weight="bold" font-size="13" fill="#F4F8E0">V(out1)</text>
<text x="401" y="150.3" text-anchor="middle" font-family='"Liberation Sans", sans-serif' font-weight="bold" font-size="13" fill="#48D4D8">V(out2)</text>
<text x="627" y="150.3" text-anchor="middle" font-family='"Liberation Sans", sans-serif' font-weight="bold" font-size="13" fill="#E8E860">V(out3)</text>
<text x="853" y="150.3" text-anchor="middle" font-family='"Liberation Sans", sans-serif' font-weight="bold" font-size="13" fill="#30A8A0">V(out4)</text>
<svg x="62.5" y="154.5" width="906.0" height="224.2" viewBox="62.5 154.5 906.0 224.2" overflow="hidden">
<polyline points="62.5,355.6 64.8,354.6 67.0,353.6 69.3,352.6 71.6,351.6 73.8,350.6 76.1,349.6 78.4,348.6 80.6,347.6 82.9,346.6 85.2,345.6 87.4,344.6 89.7,343.6 92.0,342.6 94.3,341.6 96.5,340.6 98.8,339.6 101.1,338.6 103.3,337.6 105.6,336.6 107.9,335.6 110.1,334.6 112.4,333.6 114.7,332.6 116.9,331.6 119.2,330.6 121.5,329.6 123.7,328.6 126.0,327.6 128.3,326.6 130.5,325.6 132.8,324.6 135.1,323.6 137.3,322.6 139.6,321.6 141.9,320.6 144.1,319.6 146.4,318.6 148.7,317.6 150.9,316.6 153.2,315.6 155.5,314.6 157.8,313.5 160.0,312.5 162.3,311.5 164.6,310.5 166.8,309.5 169.1,308.5 171.4,307.5 173.6,306.4 175.9,305.4 178.2,304.4 180.4,303.4 182.7,302.4 185.0,301.3 187.2,300.3 189.5,299.3 191.8,298.3 194.0,297.2 196.3,296.2 198.6,295.2 200.8,294.2 203.1,293.1 205.4,292.1 207.6,291.1 209.9,290.0 212.2,289.0 214.4,287.9 216.7,286.9 219.0,285.9 221.3,284.8 223.5,283.8 225.8,282.7 228.1,281.7 230.3,280.6 232.6,279.6 234.9,278.5 237.1,277.5 239.4,276.4 241.7,275.3 243.9,274.3 246.2,273.2 248.5,272.1 250.7,271.1 253.0,270.0 255.3,268.9 257.5,267.8 259.8,266.8 262.1,265.7 264.3,264.6 266.6,263.5 268.9,262.4 271.1,261.3 273.4,260.2 275.7,259.1 278.0,258.0 280.2,256.9 282.5,255.8 284.8,254.6 287.0,253.5 289.3,252.4 291.6,251.3 293.8,250.1 296.1,249.0 298.4,247.8 300.6,246.7 302.9,245.5 305.2,244.3 307.4,243.2 309.7,242.0 312.0,240.8 314.2,239.6 316.5,238.4 318.8,237.2 321.0,236.0 323.3,234.8 325.6,233.6 327.8,232.4 330.1,231.1 332.4,229.9 334.6,228.6 336.9,227.4 339.2,226.1 341.5,224.8 343.7,223.5 346.0,222.2 348.3,220.9 350.5,219.6 352.8,218.2 355.1,216.9 357.3,215.5 359.6,214.2 361.9,212.8 364.1,211.4 366.4,210.0 368.7,208.5 370.9,207.1 373.2,205.6 375.5,204.2 377.7,202.7 380.0,201.2 382.3,199.6 384.5,198.1 386.8,196.5 389.1,194.9 391.3,193.3 393.6,191.7 395.9,190.1 398.1,188.4 400.4,186.7 402.7,185.1 405.0,183.4 407.2,181.7 409.5,180.0 411.8,178.4 414.0,176.7 416.3,175.2 418.6,173.6 420.8,172.2 423.1,170.9 425.4,169.8 427.6,168.7 429.9,167.9 432.2,167.2 434.4,166.6 436.7,166.2 439.0,165.8 441.2,165.6 443.5,165.4 445.8,165.3 448.0,165.2 450.3,165.2 452.6,165.1 454.8,165.1 457.1,165.1 459.4,165.1 461.7,165.1 463.9,165.1 466.2,165.1 468.5,165.1 470.7,165.1 473.0,165.1 475.3,165.1 477.5,165.1 479.8,165.1 482.1,165.1 484.3,165.1 486.6,165.1 488.9,165.1 491.1,165.1 493.4,165.1 495.7,165.1 497.9,165.1 500.2,165.1 502.5,165.1 504.7,165.1 507.0,165.1 509.3,165.1 511.5,165.1 513.8,165.1 516.1,165.1 518.3,165.1 520.6,165.1 522.9,165.1 525.2,165.1 527.4,165.1 529.7,165.1 532.0,165.1 534.2,165.1 536.5,165.1 538.8,165.1 541.0,165.1 543.3,165.1 545.6,165.1 547.8,165.1 550.1,165.1 552.4,165.2 554.6,165.2 556.9,165.3 559.2,165.4 561.4,165.6 563.7,165.8 566.0,166.1 568.2,166.5 570.5,167.1 572.8,167.7 575.0,168.6 577.3,169.5 579.6,170.7 581.8,172.0 584.1,173.3 586.4,174.8 588.7,176.4 590.9,178.0 593.2,179.6 595.5,181.3 597.7,183.0 600.0,184.7 602.3,186.4 604.5,188.0 606.8,189.7 609.1,191.3 611.3,193.0 613.6,194.6 615.9,196.2 618.1,197.7 620.4,199.3 622.7,200.8 624.9,202.3 627.2,203.8 629.5,205.3 631.7,206.8 634.0,208.2 636.3,209.6 638.5,211.1 640.8,212.5 643.1,213.9 645.4,215.2 647.6,216.6 649.9,217.9 652.2,219.3 654.4,220.6 656.7,221.9 659.0,223.2 661.2,224.5 663.5,225.8 665.8,227.1 668.0,228.3 670.3,229.6 672.6,230.8 674.8,232.1 677.1,233.3 679.4,234.5 681.6,235.8 683.9,237.0 686.2,238.2 688.4,239.4 690.7,240.6 693.0,241.7 695.2,242.9 697.5,244.1 699.8,245.2 702.0,246.4 704.3,247.6 706.6,248.7 708.9,249.9 711.1,251.0 713.4,252.1 715.7,253.3 717.9,254.4 720.2,255.5 722.5,256.6 724.7,257.7 727.0,258.8 729.3,259.9 731.5,261.0 733.8,262.1 736.1,263.2 738.3,264.3 740.6,265.4 742.9,266.5 745.1,267.6 747.4,268.7 749.7,269.7 751.9,270.8 754.2,271.9 756.5,273.0 758.7,274.0 761.0,275.1 763.3,276.2 765.5,277.2 767.8,278.3 770.1,279.3 772.4,280.4 774.6,281.4 776.9,282.5 779.2,283.5 781.4,284.6 783.7,285.6 786.0,286.7 788.2,287.7 790.5,288.7 792.8,289.8 795.0,290.8 797.3,291.9 799.6,292.9 801.8,293.9 804.1,294.9 806.4,296.0 808.6,297.0 810.9,298.0 813.2,299.1 815.4,300.1 817.7,301.1 820.0,302.1 822.2,303.1 824.5,304.2 826.8,305.2 829.1,306.2 831.3,307.2 833.6,308.2 835.9,309.3 838.1,310.3 840.4,311.3 842.7,312.3 844.9,313.3 847.2,314.3 849.5,315.3 851.7,316.3 854.0,317.3 856.3,318.4 858.5,319.4 860.8,320.4 863.1,321.4 865.3,322.4 867.6,323.4 869.9,324.4 872.1,325.4 874.4,326.4 876.7,327.4 878.9,328.4 881.2,329.4 883.5,330.4 885.7,331.4 888.0,332.4 890.3,333.4 892.6,334.4 894.8,335.4 897.1,336.4 899.4,337.4 901.6,338.4 903.9,339.4 906.2,340.4 908.4,341.4 910.7,342.4 913.0,343.4 915.2,344.4 917.5,345.4 919.8,346.4 922.0,347.4 924.3,348.4 926.6,349.4 928.8,350.4 931.1,351.4 933.4,352.4 935.6,353.3 937.9,354.3 940.2,355.3 942.4,356.3 944.7,357.3 947.0,358.3 949.2,359.3 951.5,360.3 953.8,361.3 956.1,362.3 958.3,363.3 960.6,364.3 962.9,365.3 965.1,366.2 967.4,367.2" fill="none" stroke="#30A8A0" stroke-width="1.1"/>
<polyline points="62.5,189.3 64.8,189.3 67.0,189.4 69.3,189.4 71.6,189.4 73.8,189.5 76.1,189.5 78.4,189.5 80.6,189.6 82.9,189.6 85.2,189.6 87.4,189.7 89.7,189.7 92.0,189.7 94.3,189.8 96.5,189.8 98.8,189.8 101.1,189.9 103.3,189.9 105.6,190.0 107.9,190.0 110.1,190.0 112.4,190.1 114.7,190.1 116.9,190.2 119.2,190.2 121.5,190.2 123.7,190.3 126.0,190.3 128.3,190.4 130.5,190.4 132.8,190.5 135.1,190.5 137.3,190.6 139.6,190.6 141.9,190.7 144.1,190.7 146.4,190.8 148.7,190.8 150.9,190.9 153.2,190.9 155.5,191.0 157.8,191.0 160.0,191.1 162.3,191.2 164.6,191.2 166.8,191.3 169.1,191.3 171.4,191.4 173.6,191.5 175.9,191.5 178.2,191.6 180.4,191.6 182.7,191.7 185.0,191.8 187.2,191.8 189.5,191.9 191.8,192.0 194.0,192.1 196.3,192.1 198.6,192.2 200.8,192.3 203.1,192.4 205.4,192.4 207.6,192.5 209.9,192.6 212.2,192.7 214.4,192.8 216.7,192.8 219.0,192.9 221.3,193.0 223.5,193.1 225.8,193.2 228.1,193.3 230.3,193.4 232.6,193.5 234.9,193.6 237.1,193.7 239.4,193.8 241.7,193.9 243.9,194.0 246.2,194.1 248.5,194.2 250.7,194.3 253.0,194.4 255.3,194.5 257.5,194.7 259.8,194.8 262.1,194.9 264.3,195.0 266.6,195.1 268.9,195.3 271.1,195.4 273.4,195.5 275.7,195.7 278.0,195.8 280.2,196.0 282.5,196.1 284.8,196.2 287.0,196.4 289.3,196.5 291.6,196.7 293.8,196.9 296.1,197.0 298.4,197.2 300.6,197.4 302.9,197.5 305.2,197.7 307.4,197.9 309.7,198.1 312.0,198.3 314.2,198.5 316.5,198.7 318.8,198.9 321.0,199.1 323.3,199.3 325.6,199.6 327.8,199.8 330.1,200.0 332.4,200.3 334.6,200.5 336.9,200.8 339.2,201.0 341.5,201.3 343.7,201.6 346.0,201.9 348.3,202.2 350.5,202.5 352.8,202.8 355.1,203.1 357.3,203.5 359.6,203.8 361.9,204.2 364.1,204.6 366.4,205.0 368.7,205.4 370.9,205.8 373.2,206.3 375.5,206.7 377.7,207.2 380.0,207.7 382.3,208.2 384.5,208.8 386.8,209.4 389.1,210.0 391.3,210.6 393.6,211.3 395.9,212.0 398.1,212.8 400.4,213.6 402.7,214.4 405.0,215.4 407.2,216.4 409.5,217.4 411.8,218.5 414.0,219.8 416.3,221.1 418.6,222.4 420.8,223.9 423.1,225.4 425.4,227.0 427.6,228.6 429.9,230.3 432.2,231.9 434.4,233.5 436.7,235.1 439.0,236.7 441.2,238.1 443.5,239.6 445.8,240.9 448.0,242.2 450.3,243.5 452.6,244.7 454.8,245.9 457.1,247.1 459.4,248.2 461.7,249.3 463.9,250.4 466.2,251.5 468.5,252.5 470.7,253.5 473.0,254.5 475.3,255.5 477.5,256.5 479.8,257.5 482.1,258.5 484.3,259.4 486.6,260.4 488.9,261.3 491.1,262.3 493.4,263.2 495.7,264.2 497.9,265.1 500.2,266.0 502.5,267.0 504.7,267.9 507.0,268.8 509.3,269.8 511.5,270.7 513.8,271.7 516.1,272.6 518.3,273.6 520.6,274.5 522.9,275.5 525.2,276.5 527.4,277.4 529.7,278.4 532.0,279.5 534.2,280.5 536.5,281.5 538.8,282.6 541.0,283.6 543.3,284.7 545.6,285.9 547.8,287.0 550.1,288.2 552.4,289.4 554.6,290.7 556.9,292.0 559.2,293.3 561.4,294.8 563.7,296.2 566.0,297.7 568.2,299.3 570.5,300.9 572.8,302.6 575.0,304.2 577.3,305.8 579.6,307.4 581.8,309.0 584.1,310.4 586.4,311.8 588.7,313.1 590.9,314.4 593.2,315.5 595.5,316.6 597.7,317.6 600.0,318.5 602.3,319.4 604.5,320.2 606.8,321.0 609.1,321.7 611.3,322.4 613.6,323.1 615.9,323.7 618.1,324.3 620.4,324.8 622.7,325.4 624.9,325.9 627.2,326.4 629.5,326.8 631.7,327.3 634.0,327.7 636.3,328.1 638.5,328.5 640.8,328.9 643.1,329.3 645.4,329.6 647.6,330.0 649.9,330.3 652.2,330.6 654.4,330.9 656.7,331.2 659.0,331.5 661.2,331.8 663.5,332.1 665.8,332.4 668.0,332.6 670.3,332.9 672.6,333.1 674.8,333.3 677.1,333.6 679.4,333.8 681.6,334.0 683.9,334.2 686.2,334.5 688.4,334.7 690.7,334.9 693.0,335.1 695.2,335.2 697.5,335.4 699.8,335.6 702.0,335.8 704.3,336.0 706.6,336.1 708.9,336.3 711.1,336.5 713.4,336.6 715.7,336.8 717.9,336.9 720.2,337.1 722.5,337.2 724.7,337.4 727.0,337.5 729.3,337.6 731.5,337.8 733.8,337.9 736.1,338.0 738.3,338.2 740.6,338.3 742.9,338.4 745.1,338.5 747.4,338.6 749.7,338.8 751.9,338.9 754.2,339.0 756.5,339.1 758.7,339.2 761.0,339.3 763.3,339.4 765.5,339.5 767.8,339.6 770.1,339.7 772.4,339.8 774.6,339.9 776.9,340.0 779.2,340.1 781.4,340.2 783.7,340.2 786.0,340.3 788.2,340.4 790.5,340.5 792.8,340.6 795.0,340.7 797.3,340.7 799.6,340.8 801.8,340.9 804.1,341.0 806.4,341.0 808.6,341.1 810.9,341.2 813.2,341.3 815.4,341.3 817.7,341.4 820.0,341.5 822.2,341.5 824.5,341.6 826.8,341.7 829.1,341.7 831.3,341.8 833.6,341.9 835.9,341.9 838.1,342.0 840.4,342.0 842.7,342.1 844.9,342.1 847.2,342.2 849.5,342.3 851.7,342.3 854.0,342.4 856.3,342.4 858.5,342.5 860.8,342.5 863.1,342.6 865.3,342.6 867.6,342.7 869.9,342.7 872.1,342.8 874.4,342.8 876.7,342.9 878.9,342.9 881.2,342.9 883.5,343.0 885.7,343.0 888.0,343.1 890.3,343.1 892.6,343.2 894.8,343.2 897.1,343.2 899.4,343.3 901.6,343.3 903.9,343.3 906.2,343.4 908.4,343.4 910.7,343.5 913.0,343.5 915.2,343.5 917.5,343.6 919.8,343.6 922.0,343.6 924.3,343.7 926.6,343.7 928.8,343.7 931.1,343.8 933.4,343.8 935.6,343.8 937.9,343.9 940.2,343.9 942.4,343.9 944.7,343.9 947.0,344.0 949.2,344.0 951.5,344.0 953.8,344.1 956.1,344.1 958.3,344.1 960.6,344.1 962.9,344.2 965.1,344.2 967.4,344.2" fill="none" stroke="#30A8A0" stroke-width="1.35" stroke-dasharray="3,3"/>
<polyline points="62.5,336.9 64.8,335.9 67.0,334.9 69.3,333.9 71.6,332.9 73.8,331.9 76.1,330.9 78.4,329.9 80.6,328.9 82.9,327.9 85.2,326.9 87.4,325.9 89.7,324.9 92.0,323.9 94.3,322.9 96.5,321.9 98.8,320.9 101.1,319.9 103.3,318.9 105.6,317.9 107.9,316.9 110.1,315.9 112.4,314.9 114.7,313.9 116.9,312.9 119.2,311.9 121.5,310.9 123.7,309.9 126.0,308.9 128.3,307.9 130.5,306.9 132.8,305.9 135.1,304.9 137.3,303.9 139.6,302.9 141.9,301.9 144.1,300.9 146.4,299.9 148.7,298.9 150.9,297.9 153.2,296.9 155.5,295.8 157.8,294.8 160.0,293.8 162.3,292.8 164.6,291.8 166.8,290.8 169.1,289.8 171.4,288.8 173.6,287.7 175.9,286.7 178.2,285.7 180.4,284.7 182.7,283.7 185.0,282.6 187.2,281.6 189.5,280.6 191.8,279.6 194.0,278.5 196.3,277.5 198.6,276.5 200.8,275.5 203.1,274.4 205.4,273.4 207.6,272.4 209.9,271.3 212.2,270.3 214.4,269.2 216.7,268.2 219.0,267.2 221.3,266.1 223.5,265.1 225.8,264.0 228.1,263.0 230.3,261.9 232.6,260.9 234.9,259.8 237.1,258.8 239.4,257.7 241.7,256.6 243.9,255.6 246.2,254.5 248.5,253.4 250.7,252.4 253.0,251.3 255.3,250.2 257.5,249.1 259.8,248.1 262.1,247.0 264.3,245.9 266.6,244.8 268.9,243.7 271.1,242.6 273.4,241.5 275.7,240.4 278.0,239.3 280.2,238.2 282.5,237.1 284.8,235.9 287.0,234.8 289.3,233.7 291.6,232.5 293.8,231.4 296.1,230.3 298.4,229.1 300.6,228.0 302.9,226.8 305.2,225.6 307.4,224.5 309.7,223.3 312.0,222.1 314.2,220.9 316.5,219.7 318.8,218.5 321.0,217.3 323.3,216.1 325.6,214.9 327.8,213.7 330.1,212.4 332.4,211.2 334.6,209.9 336.9,208.7 339.2,207.4 341.5,206.1 343.7,204.8 346.0,203.5 348.3,202.2 350.5,200.9 352.8,199.6 355.1,198.2 357.3,196.9 359.6,195.5 361.9,194.2 364.1,192.8 366.4,191.4 368.7,190.0 370.9,188.6 373.2,187.2 375.5,185.8 377.7,184.4 380.0,182.9 382.3,181.5 384.5,180.1 386.8,178.7 389.1,177.4 391.3,176.1 393.6,174.8 395.9,173.5 398.1,172.4 400.4,171.3 402.7,170.3 405.0,169.4 407.2,168.6 409.5,167.9 411.8,167.3 414.0,166.8 416.3,166.4 418.6,166.1 420.8,165.8 423.1,165.6 425.4,165.5 427.6,165.4 429.9,165.3 432.2,165.2 434.4,165.2 436.7,165.1 439.0,165.1 441.2,165.1 443.5,165.1 445.8,165.1 448.0,165.1 450.3,165.1 452.6,165.1 454.8,165.1 457.1,165.1 459.4,165.1 461.7,165.1 463.9,165.1 466.2,165.1 468.5,165.1 470.7,165.1 473.0,165.1 475.3,165.1 477.5,165.1 479.8,165.1 482.1,165.1 484.3,165.1 486.6,165.1 488.9,165.1 491.1,165.1 493.4,165.1 495.7,165.1 497.9,165.1 500.2,165.1 502.5,165.1 504.7,165.1 507.0,165.1 509.3,165.1 511.5,165.1 513.8,165.1 516.1,165.1 518.3,165.1 520.6,165.1 522.9,165.1 525.2,165.1 527.4,165.1 529.7,165.1 532.0,165.1 534.2,165.1 536.5,165.1 538.8,165.1 541.0,165.1 543.3,165.1 545.6,165.1 547.8,165.1 550.1,165.1 552.4,165.1 554.6,165.1 556.9,165.1 559.2,165.1 561.4,165.1 563.7,165.1 566.0,165.1 568.2,165.2 570.5,165.2 572.8,165.3 575.0,165.4 577.3,165.5 579.6,165.6 581.8,165.8 584.1,166.1 586.4,166.4 588.7,166.8 590.9,167.2 593.2,167.8 595.5,168.5 597.7,169.3 600.0,170.1 602.3,171.1 604.5,172.2 606.8,173.3 609.1,174.6 611.3,175.8 613.6,177.2 615.9,178.5 618.1,179.9 620.4,181.3 622.7,182.7 624.9,184.1 627.2,185.5 629.5,187.0 631.7,188.4 634.0,189.8 636.3,191.2 638.5,192.6 640.8,193.9 643.1,195.3 645.4,196.7 647.6,198.0 649.9,199.4 652.2,200.7 654.4,202.0 656.7,203.3 659.0,204.6 661.2,205.9 663.5,207.2 665.8,208.5 668.0,209.7 670.3,211.0 672.6,212.2 674.8,213.5 677.1,214.7 679.4,215.9 681.6,217.1 683.9,218.3 686.2,219.5 688.4,220.7 690.7,221.9 693.0,223.1 695.2,224.3 697.5,225.5 699.8,226.6 702.0,227.8 704.3,228.9 706.6,230.1 708.9,231.2 711.1,232.4 713.4,233.5 715.7,234.6 717.9,235.8 720.2,236.9 722.5,238.0 724.7,239.1 727.0,240.2 729.3,241.3 731.5,242.4 733.8,243.5 736.1,244.6 738.3,245.7 740.6,246.8 742.9,247.9 745.1,249.0 747.4,250.0 749.7,251.1 751.9,252.2 754.2,253.3 756.5,254.3 758.7,255.4 761.0,256.5 763.3,257.5 765.5,258.6 767.8,259.6 770.1,260.7 772.4,261.8 774.6,262.8 776.9,263.9 779.2,264.9 781.4,265.9 783.7,267.0 786.0,268.0 788.2,269.1 790.5,270.1 792.8,271.1 795.0,272.2 797.3,273.2 799.6,274.3 801.8,275.3 804.1,276.3 806.4,277.3 808.6,278.4 810.9,279.4 813.2,280.4 815.4,281.4 817.7,282.5 820.0,283.5 822.2,284.5 824.5,285.5 826.8,286.6 829.1,287.6 831.3,288.6 833.6,289.6 835.9,290.6 838.1,291.6 840.4,292.6 842.7,293.7 844.9,294.7 847.2,295.7 849.5,296.7 851.7,297.7 854.0,298.7 856.3,299.7 858.5,300.7 860.8,301.7 863.1,302.7 865.3,303.8 867.6,304.8 869.9,305.8 872.1,306.8 874.4,307.8 876.7,308.8 878.9,309.8 881.2,310.8 883.5,311.8 885.7,312.8 888.0,313.8 890.3,314.8 892.6,315.8 894.8,316.8 897.1,317.8 899.4,318.8 901.6,319.8 903.9,320.8 906.2,321.8 908.4,322.8 910.7,323.8 913.0,324.8 915.2,325.8 917.5,326.8 919.8,327.8 922.0,328.7 924.3,329.7 926.6,330.7 928.8,331.7 931.1,332.7 933.4,333.7 935.6,334.7 937.9,335.7 940.2,336.7 942.4,337.7 944.7,338.7 947.0,339.7 949.2,340.7 951.5,341.7 953.8,342.7 956.1,343.6 958.3,344.6 960.6,345.6 962.9,346.6 965.1,347.6 967.4,348.6" fill="none" stroke="#E8E860" stroke-width="1.1"/>
<polyline points="62.5,189.9 64.8,190.0 67.0,190.0 69.3,190.1 71.6,190.1 73.8,190.2 76.1,190.2 78.4,190.2 80.6,190.3 82.9,190.3 85.2,190.4 87.4,190.4 89.7,190.5 92.0,190.5 94.3,190.6 96.5,190.6 98.8,190.7 101.1,190.7 103.3,190.8 105.6,190.8 107.9,190.9 110.1,190.9 112.4,191.0 114.7,191.0 116.9,191.1 119.2,191.1 121.5,191.2 123.7,191.2 126.0,191.3 128.3,191.4 130.5,191.4 132.8,191.5 135.1,191.6 137.3,191.6 139.6,191.7 141.9,191.7 144.1,191.8 146.4,191.9 148.7,191.9 150.9,192.0 153.2,192.1 155.5,192.2 157.8,192.2 160.0,192.3 162.3,192.4 164.6,192.5 166.8,192.5 169.1,192.6 171.4,192.7 173.6,192.8 175.9,192.9 178.2,192.9 180.4,193.0 182.7,193.1 185.0,193.2 187.2,193.3 189.5,193.4 191.8,193.5 194.0,193.6 196.3,193.7 198.6,193.8 200.8,193.9 203.1,194.0 205.4,194.1 207.6,194.2 209.9,194.3 212.2,194.4 214.4,194.5 216.7,194.6 219.0,194.7 221.3,194.8 223.5,195.0 225.8,195.1 228.1,195.2 230.3,195.3 232.6,195.5 234.9,195.6 237.1,195.7 239.4,195.8 241.7,196.0 243.9,196.1 246.2,196.3 248.5,196.4 250.7,196.6 253.0,196.7 255.3,196.9 257.5,197.0 259.8,197.2 262.1,197.3 264.3,197.5 266.6,197.7 268.9,197.8 271.1,198.0 273.4,198.2 275.7,198.4 278.0,198.6 280.2,198.7 282.5,198.9 284.8,199.1 287.0,199.3 289.3,199.6 291.6,199.8 293.8,200.0 296.1,200.2 298.4,200.4 300.6,200.7 302.9,200.9 305.2,201.1 307.4,201.4 309.7,201.7 312.0,201.9 314.2,202.2 316.5,202.5 318.8,202.8 321.0,203.0 323.3,203.3 325.6,203.7 327.8,204.0 330.1,204.3 332.4,204.6 334.6,205.0 336.9,205.4 339.2,205.7 341.5,206.1 343.7,206.5 346.0,206.9 348.3,207.3 350.5,207.8 352.8,208.2 355.1,208.7 357.3,209.2 359.6,209.7 361.9,210.3 364.1,210.8 366.4,211.4 368.7,212.0 370.9,212.7 373.2,213.4 375.5,214.1 377.7,214.8 380.0,215.6 382.3,216.5 384.5,217.4 386.8,218.3 389.1,219.3 391.3,220.3 393.6,221.4 395.9,222.5 398.1,223.7 400.4,225.0 402.7,226.3 405.0,227.6 407.2,228.9 409.5,230.2 411.8,231.6 414.0,232.9 416.3,234.2 418.6,235.4 420.8,236.7 423.1,237.8 425.4,239.0 427.6,240.1 429.9,241.2 432.2,242.2 434.4,243.2 436.7,244.2 439.0,245.2 441.2,246.1 443.5,247.0 445.8,247.9 448.0,248.8 450.3,249.6 452.6,250.4 454.8,251.3 457.1,252.1 459.4,252.9 461.7,253.7 463.9,254.4 466.2,255.2 468.5,256.0 470.7,256.7 473.0,257.5 475.3,258.2 477.5,259.0 479.8,259.7 482.1,260.4 484.3,261.2 486.6,261.9 488.9,262.6 491.1,263.3 493.4,264.0 495.7,264.8 497.9,265.5 500.2,266.2 502.5,266.9 504.7,267.6 507.0,268.3 509.3,269.0 511.5,269.8 513.8,270.5 516.1,271.2 518.3,271.9 520.6,272.6 522.9,273.4 525.2,274.1 527.4,274.8 529.7,275.6 532.0,276.3 534.2,277.1 536.5,277.9 538.8,278.6 541.0,279.4 543.3,280.2 545.6,281.0 547.8,281.8 550.1,282.6 552.4,283.5 554.6,284.3 556.9,285.2 559.2,286.1 561.4,287.0 563.7,287.9 566.0,288.8 568.2,289.8 570.5,290.8 572.8,291.8 575.0,292.9 577.3,294.0 579.6,295.2 581.8,296.3 584.1,297.6 586.4,298.8 588.7,300.1 590.9,301.4 593.2,302.7 595.5,304.1 597.7,305.4 600.0,306.7 602.3,308.0 604.5,309.3 606.8,310.5 609.1,311.6 611.3,312.7 613.6,313.8 615.9,314.8 618.1,315.7 620.4,316.6 622.7,317.4 624.9,318.2 627.2,319.0 629.5,319.7 631.7,320.4 634.0,321.1 636.3,321.7 638.5,322.3 640.8,322.8 643.1,323.4 645.4,323.9 647.6,324.4 649.9,324.9 652.2,325.3 654.4,325.8 656.7,326.2 659.0,326.6 661.2,327.0 663.5,327.4 665.8,327.8 668.0,328.1 670.3,328.5 672.6,328.8 674.8,329.2 677.1,329.5 679.4,329.8 681.6,330.1 683.9,330.4 686.2,330.7 688.4,331.0 690.7,331.2 693.0,331.5 695.2,331.8 697.5,332.0 699.8,332.3 702.0,332.5 704.3,332.7 706.6,333.0 708.9,333.2 711.1,333.4 713.4,333.6 715.7,333.8 717.9,334.0 720.2,334.2 722.5,334.4 724.7,334.6 727.0,334.8 729.3,335.0 731.5,335.2 733.8,335.3 736.1,335.5 738.3,335.7 740.6,335.8 742.9,336.0 745.1,336.2 747.4,336.3 749.7,336.5 751.9,336.6 754.2,336.8 756.5,336.9 758.7,337.1 761.0,337.2 763.3,337.3 765.5,337.5 767.8,337.6 770.1,337.7 772.4,337.9 774.6,338.0 776.9,338.1 779.2,338.2 781.4,338.3 783.7,338.5 786.0,338.6 788.2,338.7 790.5,338.8 792.8,338.9 795.0,339.0 797.3,339.1 799.6,339.2 801.8,339.3 804.1,339.4 806.4,339.5 808.6,339.6 810.9,339.7 813.2,339.8 815.4,339.9 817.7,340.0 820.0,340.1 822.2,340.2 824.5,340.2 826.8,340.3 829.1,340.4 831.3,340.5 833.6,340.6 835.9,340.7 838.1,340.7 840.4,340.8 842.7,340.9 844.9,341.0 847.2,341.0 849.5,341.1 851.7,341.2 854.0,341.2 856.3,341.3 858.5,341.4 860.8,341.4 863.1,341.5 865.3,341.6 867.6,341.6 869.9,341.7 872.1,341.8 874.4,341.8 876.7,341.9 878.9,341.9 881.2,342.0 883.5,342.1 885.7,342.1 888.0,342.2 890.3,342.2 892.6,342.3 894.8,342.3 897.1,342.4 899.4,342.4 901.6,342.5 903.9,342.5 906.2,342.6 908.4,342.6 910.7,342.7 913.0,342.7 915.2,342.8 917.5,342.8 919.8,342.9 922.0,342.9 924.3,343.0 926.6,343.0 928.8,343.0 931.1,343.1 933.4,343.1 935.6,343.2 937.9,343.2 940.2,343.2 942.4,343.3 944.7,343.3 947.0,343.4 949.2,343.4 951.5,343.4 953.8,343.5 956.1,343.5 958.3,343.5 960.6,343.6 962.9,343.6 965.1,343.6 967.4,343.7" fill="none" stroke="#E8E860" stroke-width="1.35" stroke-dasharray="3,3"/>
<polyline points="62.5,323.9 64.8,322.9 67.0,321.9 69.3,320.9 71.6,319.9 73.8,318.9 76.1,317.9 78.4,316.9 80.6,315.9 82.9,314.9 85.2,313.9 87.4,312.9 89.7,311.9 92.0,310.9 94.3,309.9 96.5,308.9 98.8,307.9 101.1,306.9 103.3,305.9 105.6,304.9 107.9,303.9 110.1,302.9 112.4,301.9 114.7,300.9 116.9,299.9 119.2,298.9 121.5,297.9 123.7,296.9 126.0,295.9 128.3,294.9 130.5,293.9 132.8,292.9 135.1,291.9 137.3,290.9 139.6,289.9 141.9,288.9 144.1,287.9 146.4,286.9 148.7,285.9 150.9,284.9 153.2,283.9 155.5,282.8 157.8,281.8 160.0,280.8 162.3,279.8 164.6,278.8 166.8,277.8 169.1,276.8 171.4,275.7 173.6,274.7 175.9,273.7 178.2,272.7 180.4,271.7 182.7,270.7 185.0,269.6 187.2,268.6 189.5,267.6 191.8,266.6 194.0,265.5 196.3,264.5 198.6,263.5 200.8,262.4 203.1,261.4 205.4,260.4 207.6,259.3 209.9,258.3 212.2,257.3 214.4,256.2 216.7,255.2 219.0,254.2 221.3,253.1 223.5,252.1 225.8,251.0 228.1,250.0 230.3,248.9 232.6,247.9 234.9,246.8 237.1,245.7 239.4,244.7 241.7,243.6 243.9,242.6 246.2,241.5 248.5,240.4 250.7,239.4 253.0,238.3 255.3,237.2 257.5,236.1 259.8,235.0 262.1,234.0 264.3,232.9 266.6,231.8 268.9,230.7 271.1,229.6 273.4,228.5 275.7,227.4 278.0,226.3 280.2,225.2 282.5,224.0 284.8,222.9 287.0,221.8 289.3,220.7 291.6,219.5 293.8,218.4 296.1,217.3 298.4,216.1 300.6,215.0 302.9,213.8 305.2,212.6 307.4,211.5 309.7,210.3 312.0,209.1 314.2,207.9 316.5,206.7 318.8,205.5 321.0,204.3 323.3,203.1 325.6,201.9 327.8,200.7 330.1,199.5 332.4,198.2 334.6,197.0 336.9,195.7 339.2,194.5 341.5,193.2 343.7,191.9 346.0,190.7 348.3,189.4 350.5,188.1 352.8,186.8 355.1,185.5 357.3,184.3 359.6,183.0 361.9,181.7 364.1,180.4 366.4,179.2 368.7,178.0 370.9,176.8 373.2,175.6 375.5,174.4 377.7,173.4 380.0,172.3 382.3,171.4 384.5,170.5 386.8,169.7 389.1,168.9 391.3,168.3 393.6,167.7 395.9,167.2 398.1,166.8 400.4,166.4 402.7,166.2 405.0,165.9 407.2,165.7 409.5,165.6 411.8,165.4 414.0,165.4 416.3,165.3 418.6,165.2 420.8,165.2 423.1,165.1 425.4,165.1 427.6,165.1 429.9,165.1 432.2,165.1 434.4,165.1 436.7,165.1 439.0,165.1 441.2,165.1 443.5,165.1 445.8,165.1 448.0,165.1 450.3,165.1 452.6,165.1 454.8,165.1 457.1,165.1 459.4,165.1 461.7,165.1 463.9,165.1 466.2,165.1 468.5,165.1 470.7,165.1 473.0,165.1 475.3,165.1 477.5,165.1 479.8,165.1 482.1,165.1 484.3,165.1 486.6,165.1 488.9,165.1 491.1,165.1 493.4,165.1 495.7,165.1 497.9,165.1 500.2,165.1 502.5,165.1 504.7,165.1 507.0,165.1 509.3,165.1 511.5,165.1 513.8,165.1 516.1,165.1 518.3,165.1 520.6,165.1 522.9,165.1 525.2,165.1 527.4,165.1 529.7,165.1 532.0,165.1 534.2,165.1 536.5,165.1 538.8,165.1 541.0,165.1 543.3,165.1 545.6,165.1 547.8,165.1 550.1,165.1 552.4,165.1 554.6,165.1 556.9,165.1 559.2,165.1 561.4,165.1 563.7,165.1 566.0,165.1 568.2,165.1 570.5,165.1 572.8,165.1 575.0,165.1 577.3,165.1 579.6,165.1 581.8,165.2 584.1,165.2 586.4,165.3 588.7,165.3 590.9,165.4 593.2,165.5 595.5,165.7 597.7,165.9 600.0,166.1 602.3,166.4 604.5,166.7 606.8,167.1 609.1,167.6 611.3,168.2 613.6,168.8 615.9,169.5 618.1,170.3 620.4,171.2 622.7,172.2 624.9,173.2 627.2,174.3 629.5,175.4 631.7,176.6 634.0,177.8 636.3,179.0 638.5,180.2 640.8,181.5 643.1,182.8 645.4,184.0 647.6,185.3 649.9,186.6 652.2,187.9 654.4,189.2 656.7,190.5 659.0,191.7 661.2,193.0 663.5,194.3 665.8,195.5 668.0,196.8 670.3,198.0 672.6,199.3 674.8,200.5 677.1,201.7 679.4,202.9 681.6,204.1 683.9,205.4 686.2,206.5 688.4,207.7 690.7,208.9 693.0,210.1 695.2,211.3 697.5,212.5 699.8,213.6 702.0,214.8 704.3,215.9 706.6,217.1 708.9,218.2 711.1,219.4 713.4,220.5 715.7,221.6 717.9,222.7 720.2,223.9 722.5,225.0 724.7,226.1 727.0,227.2 729.3,228.3 731.5,229.4 733.8,230.5 736.1,231.6 738.3,232.7 740.6,233.8 742.9,234.9 745.1,236.0 747.4,237.0 749.7,238.1 751.9,239.2 754.2,240.3 756.5,241.3 758.7,242.4 761.0,243.5 763.3,244.5 765.5,245.6 767.8,246.6 770.1,247.7 772.4,248.7 774.6,249.8 776.9,250.8 779.2,251.9 781.4,252.9 783.7,254.0 786.0,255.0 788.2,256.1 790.5,257.1 792.8,258.1 795.0,259.2 797.3,260.2 799.6,261.2 801.8,262.3 804.1,263.3 806.4,264.3 808.6,265.4 810.9,266.4 813.2,267.4 815.4,268.4 817.7,269.5 820.0,270.5 822.2,271.5 824.5,272.5 826.8,273.5 829.1,274.6 831.3,275.6 833.6,276.6 835.9,277.6 838.1,278.6 840.4,279.6 842.7,280.7 844.9,281.7 847.2,282.7 849.5,283.7 851.7,284.7 854.0,285.7 856.3,286.7 858.5,287.7 860.8,288.7 863.1,289.7 865.3,290.7 867.6,291.7 869.9,292.8 872.1,293.8 874.4,294.8 876.7,295.8 878.9,296.8 881.2,297.8 883.5,298.8 885.7,299.8 888.0,300.8 890.3,301.8 892.6,302.8 894.8,303.8 897.1,304.8 899.4,305.8 901.6,306.8 903.9,307.8 906.2,308.8 908.4,309.8 910.7,310.8 913.0,311.8 915.2,312.7 917.5,313.7 919.8,314.7 922.0,315.7 924.3,316.7 926.6,317.7 928.8,318.7 931.1,319.7 933.4,320.7 935.6,321.7 937.9,322.7 940.2,323.7 942.4,324.7 944.7,325.7 947.0,326.7 949.2,327.7 951.5,328.7 953.8,329.6 956.1,330.6 958.3,331.6 960.6,332.6 962.9,333.6 965.1,334.6 967.4,335.6" fill="none" stroke="#48D4D8" stroke-width="1.1"/>
<polyline points="62.5,190.5 64.8,190.6 67.0,190.6 69.3,190.7 71.6,190.7 73.8,190.8 76.1,190.8 78.4,190.9 80.6,190.9 82.9,191.0 85.2,191.0 87.4,191.1 89.7,191.1 92.0,191.2 94.3,191.2 96.5,191.3 98.8,191.4 101.1,191.4 103.3,191.5 105.6,191.5 107.9,191.6 110.1,191.7 112.4,191.7 114.7,191.8 116.9,191.9 119.2,191.9 121.5,192.0 123.7,192.1 126.0,192.2 128.3,192.2 130.5,192.3 132.8,192.4 135.1,192.5 137.3,192.5 139.6,192.6 141.9,192.7 144.1,192.8 146.4,192.8 148.7,192.9 150.9,193.0 153.2,193.1 155.5,193.2 157.8,193.3 160.0,193.4 162.3,193.5 164.6,193.6 166.8,193.6 169.1,193.7 171.4,193.8 173.6,193.9 175.9,194.0 178.2,194.1 180.4,194.2 182.7,194.4 185.0,194.5 187.2,194.6 189.5,194.7 191.8,194.8 194.0,194.9 196.3,195.0 198.6,195.1 200.8,195.3 203.1,195.4 205.4,195.5 207.6,195.6 209.9,195.8 212.2,195.9 214.4,196.0 216.7,196.2 219.0,196.3 221.3,196.5 223.5,196.6 225.8,196.7 228.1,196.9 230.3,197.0 232.6,197.2 234.9,197.4 237.1,197.5 239.4,197.7 241.7,197.8 243.9,198.0 246.2,198.2 248.5,198.4 250.7,198.5 253.0,198.7 255.3,198.9 257.5,199.1 259.8,199.3 262.1,199.5 264.3,199.7 266.6,199.9 268.9,200.1 271.1,200.3 273.4,200.6 275.7,200.8 278.0,201.0 280.2,201.2 282.5,201.5 284.8,201.7 287.0,202.0 289.3,202.2 291.6,202.5 293.8,202.8 296.1,203.1 298.4,203.3 300.6,203.6 302.9,203.9 305.2,204.2 307.4,204.6 309.7,204.9 312.0,205.2 314.2,205.6 316.5,205.9 318.8,206.3 321.0,206.7 323.3,207.0 325.6,207.4 327.8,207.9 330.1,208.3 332.4,208.7 334.6,209.2 336.9,209.7 339.2,210.1 341.5,210.7 343.7,211.2 346.0,211.7 348.3,212.3 350.5,212.9 352.8,213.5 355.1,214.2 357.3,214.9 359.6,215.6 361.9,216.4 364.1,217.1 366.4,218.0 368.7,218.8 370.9,219.8 373.2,220.7 375.5,221.7 377.7,222.7 380.0,223.8 382.3,224.9 384.5,226.0 386.8,227.2 389.1,228.3 391.3,229.5 393.6,230.7 395.9,231.8 398.1,233.0 400.4,234.1 402.7,235.2 405.0,236.3 407.2,237.3 409.5,238.4 411.8,239.3 414.0,240.3 416.3,241.2 418.6,242.1 420.8,243.0 423.1,243.8 425.4,244.7 427.6,245.5 429.9,246.3 432.2,247.0 434.4,247.8 436.7,248.5 439.0,249.2 441.2,250.0 443.5,250.7 445.8,251.4 448.0,252.0 450.3,252.7 452.6,253.4 454.8,254.0 457.1,254.7 459.4,255.3 461.7,256.0 463.9,256.6 466.2,257.2 468.5,257.8 470.7,258.5 473.0,259.1 475.3,259.7 477.5,260.3 479.8,260.9 482.1,261.5 484.3,262.1 486.6,262.7 488.9,263.3 491.1,263.9 493.4,264.5 495.7,265.1 497.9,265.7 500.2,266.3 502.5,266.8 504.7,267.4 507.0,268.0 509.3,268.6 511.5,269.2 513.8,269.8 516.1,270.4 518.3,271.0 520.6,271.6 522.9,272.2 525.2,272.8 527.4,273.4 529.7,274.0 532.0,274.6 534.2,275.3 536.5,275.9 538.8,276.5 541.0,277.1 543.3,277.8 545.6,278.4 547.8,279.1 550.1,279.7 552.4,280.4 554.6,281.1 556.9,281.7 559.2,282.4 561.4,283.1 563.7,283.8 566.0,284.6 568.2,285.3 570.5,286.1 572.8,286.8 575.0,287.6 577.3,288.4 579.6,289.2 581.8,290.1 584.1,290.9 586.4,291.8 588.7,292.8 590.9,293.7 593.2,294.7 595.5,295.7 597.7,296.7 600.0,297.8 602.3,298.9 604.5,300.0 606.8,301.2 609.1,302.3 611.3,303.5 613.6,304.7 615.9,305.8 618.1,307.0 620.4,308.1 622.7,309.2 624.9,310.3 627.2,311.3 629.5,312.3 631.7,313.3 634.0,314.2 636.3,315.1 638.5,315.9 640.8,316.7 643.1,317.5 645.4,318.2 647.6,318.9 649.9,319.5 652.2,320.2 654.4,320.8 656.7,321.4 659.0,321.9 661.2,322.5 663.5,323.0 665.8,323.5 668.0,323.9 670.3,324.4 672.6,324.8 674.8,325.3 677.1,325.7 679.4,326.1 681.6,326.5 683.9,326.9 686.2,327.2 688.4,327.6 690.7,327.9 693.0,328.3 695.2,328.6 697.5,328.9 699.8,329.2 702.0,329.5 704.3,329.8 706.6,330.1 708.9,330.4 711.1,330.6 713.4,330.9 715.7,331.2 717.9,331.4 720.2,331.7 722.5,331.9 724.7,332.1 727.0,332.4 729.3,332.6 731.5,332.8 733.8,333.0 736.1,333.3 738.3,333.5 740.6,333.7 742.9,333.9 745.1,334.1 747.4,334.3 749.7,334.4 751.9,334.6 754.2,334.8 756.5,335.0 758.7,335.2 761.0,335.3 763.3,335.5 765.5,335.7 767.8,335.8 770.1,336.0 772.4,336.1 774.6,336.3 776.9,336.4 779.2,336.6 781.4,336.7 783.7,336.9 786.0,337.0 788.2,337.1 790.5,337.3 792.8,337.4 795.0,337.5 797.3,337.7 799.6,337.8 801.8,337.9 804.1,338.0 806.4,338.2 808.6,338.3 810.9,338.4 813.2,338.5 815.4,338.6 817.7,338.7 820.0,338.8 822.2,338.9 824.5,339.0 826.8,339.1 829.1,339.2 831.3,339.3 833.6,339.4 835.9,339.5 838.1,339.6 840.4,339.7 842.7,339.8 844.9,339.9 847.2,340.0 849.5,340.1 851.7,340.2 854.0,340.3 856.3,340.3 858.5,340.4 860.8,340.5 863.1,340.6 865.3,340.7 867.6,340.7 869.9,340.8 872.1,340.9 874.4,341.0 876.7,341.0 878.9,341.1 881.2,341.2 883.5,341.2 885.7,341.3 888.0,341.4 890.3,341.4 892.6,341.5 894.8,341.6 897.1,341.6 899.4,341.7 901.6,341.8 903.9,341.8 906.2,341.9 908.4,341.9 910.7,342.0 913.0,342.1 915.2,342.1 917.5,342.2 919.8,342.2 922.0,342.3 924.3,342.3 926.6,342.4 928.8,342.4 931.1,342.5 933.4,342.5 935.6,342.6 937.9,342.6 940.2,342.7 942.4,342.7 944.7,342.8 947.0,342.8 949.2,342.9 951.5,342.9 953.8,343.0 956.1,343.0 958.3,343.0 960.6,343.1 962.9,343.1 965.1,343.2 967.4,343.2" fill="none" stroke="#48D4D8" stroke-width="1.35" stroke-dasharray="3,3"/>
<polyline points="62.5,314.2 64.8,313.3 67.0,312.3 69.3,311.3 71.6,310.3 73.8,309.3 76.1,308.3 78.4,307.3 80.6,306.3 82.9,305.3 85.2,304.3 87.4,303.3 89.7,302.3 92.0,301.3 94.3,300.3 96.5,299.3 98.8,298.3 101.1,297.3 103.3,296.3 105.6,295.3 107.9,294.3 110.1,293.3 112.4,292.3 114.7,291.3 116.9,290.3 119.2,289.3 121.5,288.3 123.7,287.3 126.0,286.3 128.3,285.3 130.5,284.3 132.8,283.3 135.1,282.3 137.3,281.3 139.6,280.3 141.9,279.3 144.1,278.3 146.4,277.3 148.7,276.3 150.9,275.3 153.2,274.2 155.5,273.2 157.8,272.2 160.0,271.2 162.3,270.2 164.6,269.2 166.8,268.2 169.1,267.2 171.4,266.1 173.6,265.1 175.9,264.1 178.2,263.1 180.4,262.1 182.7,261.0 185.0,260.0 187.2,259.0 189.5,258.0 191.8,257.0 194.0,255.9 196.3,254.9 198.6,253.9 200.8,252.8 203.1,251.8 205.4,250.8 207.6,249.7 209.9,248.7 212.2,247.7 214.4,246.6 216.7,245.6 219.0,244.5 221.3,243.5 223.5,242.5 225.8,241.4 228.1,240.4 230.3,239.3 232.6,238.3 234.9,237.2 237.1,236.1 239.4,235.1 241.7,234.0 243.9,233.0 246.2,231.9 248.5,230.8 250.7,229.8 253.0,228.7 255.3,227.6 257.5,226.5 259.8,225.4 262.1,224.4 264.3,223.3 266.6,222.2 268.9,221.1 271.1,220.0 273.4,218.9 275.7,217.8 278.0,216.7 280.2,215.6 282.5,214.4 284.8,213.3 287.0,212.2 289.3,211.1 291.6,209.9 293.8,208.8 296.1,207.7 298.4,206.5 300.6,205.4 302.9,204.2 305.2,203.1 307.4,201.9 309.7,200.7 312.0,199.6 314.2,198.4 316.5,197.2 318.8,196.0 321.0,194.8 323.3,193.6 325.6,192.4 327.8,191.2 330.1,190.0 332.4,188.8 334.6,187.6 336.9,186.4 339.2,185.2 341.5,183.9 343.7,182.7 346.0,181.6 348.3,180.4 350.5,179.2 352.8,178.1 355.1,176.9 357.3,175.8 359.6,174.8 361.9,173.7 364.1,172.8 366.4,171.9 368.7,171.0 370.9,170.2 373.2,169.5 375.5,168.8 377.7,168.2 380.0,167.7 382.3,167.2 384.5,166.8 386.8,166.5 389.1,166.2 391.3,166.0 393.6,165.8 395.9,165.7 398.1,165.5 400.4,165.4 402.7,165.3 405.0,165.3 407.2,165.2 409.5,165.2 411.8,165.2 414.0,165.1 416.3,165.1 418.6,165.1 420.8,165.1 423.1,165.1 425.4,165.1 427.6,165.1 429.9,165.1 432.2,165.1 434.4,165.1 436.7,165.1 439.0,165.1 441.2,165.1 443.5,165.1 445.8,165.1 448.0,165.1 450.3,165.1 452.6,165.1 454.8,165.1 457.1,165.1 459.4,165.1 461.7,165.1 463.9,165.1 466.2,165.1 468.5,165.1 470.7,165.1 473.0,165.1 475.3,165.1 477.5,165.1 479.8,165.1 482.1,165.1 484.3,165.1 486.6,165.1 488.9,165.1 491.1,165.1 493.4,165.1 495.7,165.1 497.9,165.1 500.2,165.1 502.5,165.1 504.7,165.1 507.0,165.1 509.3,165.1 511.5,165.1 513.8,165.1 516.1,165.1 518.3,165.1 520.6,165.1 522.9,165.1 525.2,165.1 527.4,165.1 529.7,165.1 532.0,165.1 534.2,165.1 536.5,165.1 538.8,165.1 541.0,165.1 543.3,165.1 545.6,165.1 547.8,165.1 550.1,165.1 552.4,165.1 554.6,165.1 556.9,165.1 559.2,165.1 561.4,165.1 563.7,165.1 566.0,165.1 568.2,165.1 570.5,165.1 572.8,165.1 575.0,165.1 577.3,165.1 579.6,165.1 581.8,165.1 584.1,165.1 586.4,165.1 588.7,165.1 590.9,165.2 593.2,165.2 595.5,165.2 597.7,165.3 600.0,165.3 602.3,165.4 604.5,165.5 606.8,165.6 609.1,165.8 611.3,166.0 613.6,166.2 615.9,166.5 618.1,166.8 620.4,167.2 622.7,167.6 624.9,168.1 627.2,168.7 629.5,169.4 631.7,170.1 634.0,170.9 636.3,171.7 638.5,172.6 640.8,173.6 643.1,174.6 645.4,175.7 647.6,176.8 649.9,177.9 652.2,179.0 654.4,180.2 656.7,181.4 659.0,182.6 661.2,183.8 663.5,185.0 665.8,186.2 668.0,187.4 670.3,188.6 672.6,189.8 674.8,191.0 677.1,192.2 679.4,193.4 681.6,194.6 683.9,195.8 686.2,197.0 688.4,198.2 690.7,199.4 693.0,200.5 695.2,201.7 697.5,202.9 699.8,204.0 702.0,205.2 704.3,206.3 706.6,207.5 708.9,208.6 711.1,209.8 713.4,210.9 715.7,212.0 717.9,213.1 720.2,214.3 722.5,215.4 724.7,216.5 727.0,217.6 729.3,218.7 731.5,219.8 733.8,220.9 736.1,222.0 738.3,223.1 740.6,224.2 742.9,225.3 745.1,226.4 747.4,227.4 749.7,228.5 751.9,229.6 754.2,230.7 756.5,231.7 758.7,232.8 761.0,233.9 763.3,234.9 765.5,236.0 767.8,237.0 770.1,238.1 772.4,239.1 774.6,240.2 776.9,241.2 779.2,242.3 781.4,243.3 783.7,244.4 786.0,245.4 788.2,246.5 790.5,247.5 792.8,248.5 795.0,249.6 797.3,250.6 799.6,251.6 801.8,252.7 804.1,253.7 806.4,254.7 808.6,255.8 810.9,256.8 813.2,257.8 815.4,258.8 817.7,259.9 820.0,260.9 822.2,261.9 824.5,262.9 826.8,263.9 829.1,265.0 831.3,266.0 833.6,267.0 835.9,268.0 838.1,269.0 840.4,270.0 842.7,271.1 844.9,272.1 847.2,273.1 849.5,274.1 851.7,275.1 854.0,276.1 856.3,277.1 858.5,278.1 860.8,279.1 863.1,280.1 865.3,281.1 867.6,282.1 869.9,283.2 872.1,284.2 874.4,285.2 876.7,286.2 878.9,287.2 881.2,288.2 883.5,289.2 885.7,290.2 888.0,291.2 890.3,292.2 892.6,293.2 894.8,294.2 897.1,295.2 899.4,296.2 901.6,297.2 903.9,298.2 906.2,299.2 908.4,300.2 910.7,301.2 913.0,302.2 915.2,303.2 917.5,304.1 919.8,305.1 922.0,306.1 924.3,307.1 926.6,308.1 928.8,309.1 931.1,310.1 933.4,311.1 935.6,312.1 937.9,313.1 940.2,314.1 942.4,315.1 944.7,316.1 947.0,317.1 949.2,318.1 951.5,319.1 953.8,320.0 956.1,321.0 958.3,322.0 960.6,323.0 962.9,324.0 965.1,325.0 967.4,326.0" fill="none" stroke="#F4F8E0" stroke-width="1.1"/>
<polyline points="62.5,191.0 64.8,191.1 67.0,191.1 69.3,191.2 71.6,191.2 73.8,191.3 76.1,191.3 78.4,191.4 80.6,191.5 82.9,191.5 85.2,191.6 87.4,191.7 89.7,191.7 92.0,191.8 94.3,191.8 96.5,191.9 98.8,192.0 101.1,192.1 103.3,192.1 105.6,192.2 107.9,192.3 110.1,192.3 112.4,192.4 114.7,192.5 116.9,192.6 119.2,192.7 121.5,192.7 123.7,192.8 126.0,192.9 128.3,193.0 130.5,193.1 132.8,193.1 135.1,193.2 137.3,193.3 139.6,193.4 141.9,193.5 144.1,193.6 146.4,193.7 148.7,193.8 150.9,193.9 153.2,194.0 155.5,194.1 157.8,194.2 160.0,194.3 162.3,194.4 164.6,194.5 166.8,194.6 169.1,194.7 171.4,194.8 173.6,195.0 175.9,195.1 178.2,195.2 180.4,195.3 182.7,195.4 185.0,195.6 187.2,195.7 189.5,195.8 191.8,195.9 194.0,196.1 196.3,196.2 198.6,196.3 200.8,196.5 203.1,196.6 205.4,196.8 207.6,196.9 209.9,197.1 212.2,197.2 214.4,197.4 216.7,197.5 219.0,197.7 221.3,197.9 223.5,198.0 225.8,198.2 228.1,198.4 230.3,198.6 232.6,198.7 234.9,198.9 237.1,199.1 239.4,199.3 241.7,199.5 243.9,199.7 246.2,199.9 248.5,200.1 250.7,200.3 253.0,200.5 255.3,200.7 257.5,201.0 259.8,201.2 262.1,201.4 264.3,201.7 266.6,201.9 268.9,202.2 271.1,202.4 273.4,202.7 275.7,202.9 278.0,203.2 280.2,203.5 282.5,203.8 284.8,204.1 287.0,204.4 289.3,204.7 291.6,205.0 293.8,205.3 296.1,205.6 298.4,206.0 300.6,206.3 302.9,206.7 305.2,207.1 307.4,207.5 309.7,207.8 312.0,208.3 314.2,208.7 316.5,209.1 318.8,209.6 321.0,210.0 323.3,210.5 325.6,211.0 327.8,211.5 330.1,212.0 332.4,212.6 334.6,213.2 336.9,213.8 339.2,214.4 341.5,215.1 343.7,215.7 346.0,216.4 348.3,217.2 350.5,218.0 352.8,218.8 355.1,219.6 357.3,220.5 359.6,221.4 361.9,222.3 364.1,223.3 366.4,224.3 368.7,225.4 370.9,226.4 373.2,227.5 375.5,228.6 377.7,229.6 380.0,230.7 382.3,231.8 384.5,232.8 386.8,233.9 389.1,234.9 391.3,235.9 393.6,236.8 395.9,237.8 398.1,238.7 400.4,239.6 402.7,240.4 405.0,241.2 407.2,242.1 409.5,242.8 411.8,243.6 414.0,244.4 416.3,245.1 418.6,245.8 420.8,246.5 423.1,247.2 425.4,247.9 427.6,248.5 429.9,249.2 432.2,249.8 434.4,250.4 436.7,251.0 439.0,251.7 441.2,252.3 443.5,252.8 445.8,253.4 448.0,254.0 450.3,254.6 452.6,255.2 454.8,255.7 457.1,256.3 459.4,256.8 461.7,257.4 463.9,257.9 466.2,258.5 468.5,259.0 470.7,259.5 473.0,260.1 475.3,260.6 477.5,261.1 479.8,261.6 482.1,262.2 484.3,262.7 486.6,263.2 488.9,263.7 491.1,264.2 493.4,264.8 495.7,265.3 497.9,265.8 500.2,266.3 502.5,266.8 504.7,267.3 507.0,267.8 509.3,268.4 511.5,268.9 513.8,269.4 516.1,269.9 518.3,270.4 520.6,270.9 522.9,271.5 525.2,272.0 527.4,272.5 529.7,273.0 532.0,273.6 534.2,274.1 536.5,274.6 538.8,275.2 541.0,275.7 543.3,276.3 545.6,276.8 547.8,277.4 550.1,278.0 552.4,278.5 554.6,279.1 556.9,279.7 559.2,280.3 561.4,280.8 563.7,281.4 566.0,282.1 568.2,282.7 570.5,283.3 572.8,283.9 575.0,284.6 577.3,285.2 579.6,285.9 581.8,286.6 584.1,287.3 586.4,288.0 588.7,288.7 590.9,289.5 593.2,290.2 595.5,291.0 597.7,291.8 600.0,292.7 602.3,293.5 604.5,294.4 606.8,295.3 609.1,296.2 611.3,297.2 613.6,298.2 615.9,299.2 618.1,300.2 620.4,301.3 622.7,302.3 624.9,303.4 627.2,304.5 629.5,305.5 631.7,306.6 634.0,307.7 636.3,308.7 638.5,309.7 640.8,310.7 643.1,311.6 645.4,312.6 647.6,313.4 649.9,314.3 652.2,315.1 654.4,315.9 656.7,316.6 659.0,317.4 661.2,318.0 663.5,318.7 665.8,319.3 668.0,319.9 670.3,320.5 672.6,321.1 674.8,321.6 677.1,322.1 679.4,322.6 681.6,323.1 683.9,323.6 686.2,324.0 688.4,324.5 690.7,324.9 693.0,325.3 695.2,325.7 697.5,326.1 699.8,326.4 702.0,326.8 704.3,327.2 706.6,327.5 708.9,327.8 711.1,328.2 713.4,328.5 715.7,328.8 717.9,329.1 720.2,329.4 722.5,329.7 724.7,329.9 727.0,330.2 729.3,330.5 731.5,330.8 733.8,331.0 736.1,331.3 738.3,331.5 740.6,331.7 742.9,332.0 745.1,332.2 747.4,332.4 749.7,332.6 751.9,332.9 754.2,333.1 756.5,333.3 758.7,333.5 761.0,333.7 763.3,333.9 765.5,334.1 767.8,334.3 770.1,334.4 772.4,334.6 774.6,334.8 776.9,335.0 779.2,335.1 781.4,335.3 783.7,335.5 786.0,335.6 788.2,335.8 790.5,336.0 792.8,336.1 795.0,336.3 797.3,336.4 799.6,336.5 801.8,336.7 804.1,336.8 806.4,337.0 808.6,337.1 810.9,337.2 813.2,337.4 815.4,337.5 817.7,337.6 820.0,337.7 822.2,337.9 824.5,338.0 826.8,338.1 829.1,338.2 831.3,338.3 833.6,338.5 835.9,338.6 838.1,338.7 840.4,338.8 842.7,338.9 844.9,339.0 847.2,339.1 849.5,339.2 851.7,339.3 854.0,339.4 856.3,339.5 858.5,339.6 860.8,339.7 863.1,339.8 865.3,339.9 867.6,340.0 869.9,340.0 872.1,340.1 874.4,340.2 876.7,340.3 878.9,340.4 881.2,340.5 883.5,340.5 885.7,340.6 888.0,340.7 890.3,340.8 892.6,340.8 894.8,340.9 897.1,341.0 899.4,341.1 901.6,341.1 903.9,341.2 906.2,341.3 908.4,341.3 910.7,341.4 913.0,341.5 915.2,341.5 917.5,341.6 919.8,341.7 922.0,341.7 924.3,341.8 926.6,341.8 928.8,341.9 931.1,342.0 933.4,342.0 935.6,342.1 937.9,342.1 940.2,342.2 942.4,342.2 944.7,342.3 947.0,342.3 949.2,342.4 951.5,342.5 953.8,342.5 956.1,342.6 958.3,342.6 960.6,342.6 962.9,342.7 965.1,342.7 967.4,342.8" fill="none" stroke="#F4F8E0" stroke-width="1.35" stroke-dasharray="3,3"/>
</svg>
<rect x="8" y="439.5" width="1009" height="267.5" fill="#FCF0FC"/>
<rect x="8" y="707" width="1010" height="1.5" fill="#F0F8FF"/>
<rect x="1017" y="439.5" width="1" height="267.5" fill="#F0F8FF"/>
<path d="M13.0,448.7h1.3v1.3h-1.3zM13.0,463.4h1.3v1.3h-1.3zM13.0,478.1h1.3v1.3h-1.3zM13.0,492.9h1.3v1.3h-1.3zM13.0,507.6h1.3v1.3h-1.3zM13.0,522.3h1.3v1.3h-1.3zM13.0,537.0h1.3v1.3h-1.3zM13.0,551.7h1.3v1.3h-1.3zM13.0,566.5h1.3v1.3h-1.3zM13.0,581.2h1.3v1.3h-1.3zM13.0,595.9h1.3v1.3h-1.3zM13.0,610.6h1.3v1.3h-1.3zM13.0,625.3h1.3v1.3h-1.3zM13.0,640.1h1.3v1.3h-1.3zM13.0,654.8h1.3v1.3h-1.3zM13.0,669.5h1.3v1.3h-1.3zM13.0,684.2h1.3v1.3h-1.3zM13.0,698.9h1.3v1.3h-1.3zM27.7,448.7h1.3v1.3h-1.3zM27.7,463.4h1.3v1.3h-1.3zM27.7,478.1h1.3v1.3h-1.3zM27.7,492.9h1.3v1.3h-1.3zM27.7,507.6h1.3v1.3h-1.3zM27.7,522.3h1.3v1.3h-1.3zM27.7,537.0h1.3v1.3h-1.3zM27.7,551.7h1.3v1.3h-1.3zM27.7,566.5h1.3v1.3h-1.3zM27.7,581.2h1.3v1.3h-1.3zM27.7,595.9h1.3v1.3h-1.3zM27.7,610.6h1.3v1.3h-1.3zM27.7,625.3h1.3v1.3h-1.3zM27.7,640.1h1.3v1.3h-1.3zM27.7,654.8h1.3v1.3h-1.3zM27.7,669.5h1.3v1.3h-1.3zM27.7,684.2h1.3v1.3h-1.3zM27.7,698.9h1.3v1.3h-1.3zM42.4,448.7h1.3v1.3h-1.3zM42.4,463.4h1.3v1.3h-1.3zM42.4,478.1h1.3v1.3h-1.3zM42.4,492.9h1.3v1.3h-1.3zM42.4,507.6h1.3v1.3h-1.3zM42.4,522.3h1.3v1.3h-1.3zM42.4,537.0h1.3v1.3h-1.3zM42.4,551.7h1.3v1.3h-1.3zM42.4,566.5h1.3v1.3h-1.3zM42.4,581.2h1.3v1.3h-1.3zM42.4,595.9h1.3v1.3h-1.3zM42.4,610.6h1.3v1.3h-1.3zM42.4,625.3h1.3v1.3h-1.3zM42.4,640.1h1.3v1.3h-1.3zM42.4,654.8h1.3v1.3h-1.3zM42.4,669.5h1.3v1.3h-1.3zM42.4,684.2h1.3v1.3h-1.3zM42.4,698.9h1.3v1.3h-1.3zM57.2,448.7h1.3v1.3h-1.3zM57.2,463.4h1.3v1.3h-1.3zM57.2,478.1h1.3v1.3h-1.3zM57.2,492.9h1.3v1.3h-1.3zM57.2,507.6h1.3v1.3h-1.3zM57.2,522.3h1.3v1.3h-1.3zM57.2,537.0h1.3v1.3h-1.3zM57.2,551.7h1.3v1.3h-1.3zM57.2,566.5h1.3v1.3h-1.3zM57.2,581.2h1.3v1.3h-1.3zM57.2,595.9h1.3v1.3h-1.3zM57.2,610.6h1.3v1.3h-1.3zM57.2,625.3h1.3v1.3h-1.3zM57.2,640.1h1.3v1.3h-1.3zM57.2,654.8h1.3v1.3h-1.3zM57.2,669.5h1.3v1.3h-1.3zM57.2,684.2h1.3v1.3h-1.3zM57.2,698.9h1.3v1.3h-1.3zM71.9,448.7h1.3v1.3h-1.3zM71.9,463.4h1.3v1.3h-1.3zM71.9,478.1h1.3v1.3h-1.3zM71.9,492.9h1.3v1.3h-1.3zM71.9,507.6h1.3v1.3h-1.3zM71.9,522.3h1.3v1.3h-1.3zM71.9,537.0h1.3v1.3h-1.3zM71.9,551.7h1.3v1.3h-1.3zM71.9,566.5h1.3v1.3h-1.3zM71.9,581.2h1.3v1.3h-1.3zM71.9,595.9h1.3v1.3h-1.3zM71.9,610.6h1.3v1.3h-1.3zM71.9,625.3h1.3v1.3h-1.3zM71.9,640.1h1.3v1.3h-1.3zM71.9,654.8h1.3v1.3h-1.3zM71.9,669.5h1.3v1.3h-1.3zM71.9,684.2h1.3v1.3h-1.3zM71.9,698.9h1.3v1.3h-1.3zM86.6,448.7h1.3v1.3h-1.3zM86.6,463.4h1.3v1.3h-1.3zM86.6,478.1h1.3v1.3h-1.3zM86.6,492.9h1.3v1.3h-1.3zM86.6,507.6h1.3v1.3h-1.3zM86.6,522.3h1.3v1.3h-1.3zM86.6,537.0h1.3v1.3h-1.3zM86.6,551.7h1.3v1.3h-1.3zM86.6,566.5h1.3v1.3h-1.3zM86.6,581.2h1.3v1.3h-1.3zM86.6,595.9h1.3v1.3h-1.3zM86.6,610.6h1.3v1.3h-1.3zM86.6,625.3h1.3v1.3h-1.3zM86.6,640.1h1.3v1.3h-1.3zM86.6,654.8h1.3v1.3h-1.3zM86.6,669.5h1.3v1.3h-1.3zM86.6,684.2h1.3v1.3h-1.3zM86.6,698.9h1.3v1.3h-1.3zM101.3,448.7h1.3v1.3h-1.3zM101.3,463.4h1.3v1.3h-1.3zM101.3,478.1h1.3v1.3h-1.3zM101.3,492.9h1.3v1.3h-1.3zM101.3,507.6h1.3v1.3h-1.3zM101.3,522.3h1.3v1.3h-1.3zM101.3,537.0h1.3v1.3h-1.3zM101.3,551.7h1.3v1.3h-1.3zM101.3,566.5h1.3v1.3h-1.3zM101.3,581.2h1.3v1.3h-1.3zM101.3,595.9h1.3v1.3h-1.3zM101.3,610.6h1.3v1.3h-1.3zM101.3,625.3h1.3v1.3h-1.3zM101.3,640.1h1.3v1.3h-1.3zM101.3,654.8h1.3v1.3h-1.3zM101.3,669.5h1.3v1.3h-1.3zM101.3,684.2h1.3v1.3h-1.3zM101.3,698.9h1.3v1.3h-1.3zM116.0,448.7h1.3v1.3h-1.3zM116.0,463.4h1.3v1.3h-1.3zM116.0,478.1h1.3v1.3h-1.3zM116.0,492.9h1.3v1.3h-1.3zM116.0,507.6h1.3v1.3h-1.3zM116.0,522.3h1.3v1.3h-1.3zM116.0,537.0h1.3v1.3h-1.3zM116.0,551.7h1.3v1.3h-1.3zM116.0,566.5h1.3v1.3h-1.3zM116.0,581.2h1.3v1.3h-1.3zM116.0,595.9h1.3v1.3h-1.3zM116.0,610.6h1.3v1.3h-1.3zM116.0,625.3h1.3v1.3h-1.3zM116.0,640.1h1.3v1.3h-1.3zM116.0,654.8h1.3v1.3h-1.3zM116.0,669.5h1.3v1.3h-1.3zM116.0,684.2h1.3v1.3h-1.3zM116.0,698.9h1.3v1.3h-1.3zM130.8,448.7h1.3v1.3h-1.3zM130.8,463.4h1.3v1.3h-1.3zM130.8,478.1h1.3v1.3h-1.3zM130.8,492.9h1.3v1.3h-1.3zM130.8,507.6h1.3v1.3h-1.3zM130.8,522.3h1.3v1.3h-1.3zM130.8,537.0h1.3v1.3h-1.3zM130.8,551.7h1.3v1.3h-1.3zM130.8,566.5h1.3v1.3h-1.3zM130.8,581.2h1.3v1.3h-1.3zM130.8,595.9h1.3v1.3h-1.3zM130.8,610.6h1.3v1.3h-1.3zM130.8,625.3h1.3v1.3h-1.3zM130.8,640.1h1.3v1.3h-1.3zM130.8,654.8h1.3v1.3h-1.3zM130.8,669.5h1.3v1.3h-1.3zM130.8,684.2h1.3v1.3h-1.3zM130.8,698.9h1.3v1.3h-1.3zM145.5,448.7h1.3v1.3h-1.3zM145.5,463.4h1.3v1.3h-1.3zM145.5,478.1h1.3v1.3h-1.3zM145.5,492.9h1.3v1.3h-1.3zM145.5,507.6h1.3v1.3h-1.3zM145.5,522.3h1.3v1.3h-1.3zM145.5,537.0h1.3v1.3h-1.3zM145.5,551.7h1.3v1.3h-1.3zM145.5,566.5h1.3v1.3h-1.3zM145.5,581.2h1.3v1.3h-1.3zM145.5,595.9h1.3v1.3h-1.3zM145.5,610.6h1.3v1.3h-1.3zM145.5,625.3h1.3v1.3h-1.3zM145.5,640.1h1.3v1.3h-1.3zM145.5,654.8h1.3v1.3h-1.3zM145.5,669.5h1.3v1.3h-1.3zM145.5,684.2h1.3v1.3h-1.3zM145.5,698.9h1.3v1.3h-1.3zM160.2,448.7h1.3v1.3h-1.3zM160.2,463.4h1.3v1.3h-1.3zM160.2,478.1h1.3v1.3h-1.3zM160.2,492.9h1.3v1.3h-1.3zM160.2,507.6h1.3v1.3h-1.3zM160.2,522.3h1.3v1.3h-1.3zM160.2,537.0h1.3v1.3h-1.3zM160.2,551.7h1.3v1.3h-1.3zM160.2,566.5h1.3v1.3h-1.3zM160.2,581.2h1.3v1.3h-1.3zM160.2,595.9h1.3v1.3h-1.3zM160.2,610.6h1.3v1.3h-1.3zM160.2,625.3h1.3v1.3h-1.3zM160.2,640.1h1.3v1.3h-1.3zM160.2,654.8h1.3v1.3h-1.3zM160.2,669.5h1.3v1.3h-1.3zM160.2,684.2h1.3v1.3h-1.3zM160.2,698.9h1.3v1.3h-1.3zM174.9,448.7h1.3v1.3h-1.3zM174.9,463.4h1.3v1.3h-1.3zM174.9,478.1h1.3v1.3h-1.3zM174.9,492.9h1.3v1.3h-1.3zM174.9,507.6h1.3v1.3h-1.3zM174.9,522.3h1.3v1.3h-1.3zM174.9,537.0h1.3v1.3h-1.3zM174.9,551.7h1.3v1.3h-1.3zM174.9,566.5h1.3v1.3h-1.3zM174.9,581.2h1.3v1.3h-1.3zM174.9,595.9h1.3v1.3h-1.3zM174.9,610.6h1.3v1.3h-1.3zM174.9,625.3h1.3v1.3h-1.3zM174.9,640.1h1.3v1.3h-1.3zM174.9,654.8h1.3v1.3h-1.3zM174.9,669.5h1.3v1.3h-1.3zM174.9,684.2h1.3v1.3h-1.3zM174.9,698.9h1.3v1.3h-1.3zM189.6,448.7h1.3v1.3h-1.3zM189.6,463.4h1.3v1.3h-1.3zM189.6,478.1h1.3v1.3h-1.3zM189.6,492.9h1.3v1.3h-1.3zM189.6,507.6h1.3v1.3h-1.3zM189.6,522.3h1.3v1.3h-1.3zM189.6,537.0h1.3v1.3h-1.3zM189.6,551.7h1.3v1.3h-1.3zM189.6,566.5h1.3v1.3h-1.3zM189.6,581.2h1.3v1.3h-1.3zM189.6,595.9h1.3v1.3h-1.3zM189.6,610.6h1.3v1.3h-1.3zM189.6,625.3h1.3v1.3h-1.3zM189.6,640.1h1.3v1.3h-1.3zM189.6,654.8h1.3v1.3h-1.3zM189.6,669.5h1.3v1.3h-1.3zM189.6,684.2h1.3v1.3h-1.3zM189.6,698.9h1.3v1.3h-1.3zM204.4,448.7h1.3v1.3h-1.3zM204.4,463.4h1.3v1.3h-1.3zM204.4,478.1h1.3v1.3h-1.3zM204.4,492.9h1.3v1.3h-1.3zM204.4,507.6h1.3v1.3h-1.3zM204.4,522.3h1.3v1.3h-1.3zM204.4,537.0h1.3v1.3h-1.3zM204.4,551.7h1.3v1.3h-1.3zM204.4,566.5h1.3v1.3h-1.3zM204.4,581.2h1.3v1.3h-1.3zM204.4,595.9h1.3v1.3h-1.3zM204.4,610.6h1.3v1.3h-1.3zM204.4,625.3h1.3v1.3h-1.3zM204.4,640.1h1.3v1.3h-1.3zM204.4,654.8h1.3v1.3h-1.3zM204.4,669.5h1.3v1.3h-1.3zM204.4,684.2h1.3v1.3h-1.3zM204.4,698.9h1.3v1.3h-1.3zM219.1,448.7h1.3v1.3h-1.3zM219.1,463.4h1.3v1.3h-1.3zM219.1,478.1h1.3v1.3h-1.3zM219.1,492.9h1.3v1.3h-1.3zM219.1,507.6h1.3v1.3h-1.3zM219.1,522.3h1.3v1.3h-1.3zM219.1,537.0h1.3v1.3h-1.3zM219.1,551.7h1.3v1.3h-1.3zM219.1,566.5h1.3v1.3h-1.3zM219.1,581.2h1.3v1.3h-1.3zM219.1,595.9h1.3v1.3h-1.3zM219.1,610.6h1.3v1.3h-1.3zM219.1,625.3h1.3v1.3h-1.3zM219.1,640.1h1.3v1.3h-1.3zM219.1,654.8h1.3v1.3h-1.3zM219.1,669.5h1.3v1.3h-1.3zM219.1,684.2h1.3v1.3h-1.3zM219.1,698.9h1.3v1.3h-1.3zM233.8,448.7h1.3v1.3h-1.3zM233.8,463.4h1.3v1.3h-1.3zM233.8,478.1h1.3v1.3h-1.3zM233.8,492.9h1.3v1.3h-1.3zM233.8,507.6h1.3v1.3h-1.3zM233.8,522.3h1.3v1.3h-1.3zM233.8,537.0h1.3v1.3h-1.3zM233.8,551.7h1.3v1.3h-1.3zM233.8,566.5h1.3v1.3h-1.3zM233.8,581.2h1.3v1.3h-1.3zM233.8,595.9h1.3v1.3h-1.3zM233.8,610.6h1.3v1.3h-1.3zM233.8,625.3h1.3v1.3h-1.3zM233.8,640.1h1.3v1.3h-1.3zM233.8,654.8h1.3v1.3h-1.3zM233.8,669.5h1.3v1.3h-1.3zM233.8,684.2h1.3v1.3h-1.3zM233.8,698.9h1.3v1.3h-1.3zM248.5,448.7h1.3v1.3h-1.3zM248.5,463.4h1.3v1.3h-1.3zM248.5,478.1h1.3v1.3h-1.3zM248.5,492.9h1.3v1.3h-1.3zM248.5,507.6h1.3v1.3h-1.3zM248.5,522.3h1.3v1.3h-1.3zM248.5,537.0h1.3v1.3h-1.3zM248.5,551.7h1.3v1.3h-1.3zM248.5,566.5h1.3v1.3h-1.3zM248.5,581.2h1.3v1.3h-1.3zM248.5,595.9h1.3v1.3h-1.3zM248.5,610.6h1.3v1.3h-1.3zM248.5,625.3h1.3v1.3h-1.3zM248.5,640.1h1.3v1.3h-1.3zM248.5,654.8h1.3v1.3h-1.3zM248.5,669.5h1.3v1.3h-1.3zM248.5,684.2h1.3v1.3h-1.3zM248.5,698.9h1.3v1.3h-1.3zM263.2,448.7h1.3v1.3h-1.3zM263.2,463.4h1.3v1.3h-1.3zM263.2,478.1h1.3v1.3h-1.3zM263.2,492.9h1.3v1.3h-1.3zM263.2,507.6h1.3v1.3h-1.3zM263.2,522.3h1.3v1.3h-1.3zM263.2,537.0h1.3v1.3h-1.3zM263.2,551.7h1.3v1.3h-1.3zM263.2,566.5h1.3v1.3h-1.3zM263.2,581.2h1.3v1.3h-1.3zM263.2,595.9h1.3v1.3h-1.3zM263.2,610.6h1.3v1.3h-1.3zM263.2,625.3h1.3v1.3h-1.3zM263.2,640.1h1.3v1.3h-1.3zM263.2,654.8h1.3v1.3h-1.3zM263.2,669.5h1.3v1.3h-1.3zM263.2,684.2h1.3v1.3h-1.3zM263.2,698.9h1.3v1.3h-1.3zM278.0,448.7h1.3v1.3h-1.3zM278.0,463.4h1.3v1.3h-1.3zM278.0,478.1h1.3v1.3h-1.3zM278.0,492.9h1.3v1.3h-1.3zM278.0,507.6h1.3v1.3h-1.3zM278.0,522.3h1.3v1.3h-1.3zM278.0,537.0h1.3v1.3h-1.3zM278.0,551.7h1.3v1.3h-1.3zM278.0,566.5h1.3v1.3h-1.3zM278.0,581.2h1.3v1.3h-1.3zM278.0,595.9h1.3v1.3h-1.3zM278.0,610.6h1.3v1.3h-1.3zM278.0,625.3h1.3v1.3h-1.3zM278.0,640.1h1.3v1.3h-1.3zM278.0,654.8h1.3v1.3h-1.3zM278.0,669.5h1.3v1.3h-1.3zM278.0,684.2h1.3v1.3h-1.3zM278.0,698.9h1.3v1.3h-1.3zM292.7,448.7h1.3v1.3h-1.3zM292.7,463.4h1.3v1.3h-1.3zM292.7,478.1h1.3v1.3h-1.3zM292.7,492.9h1.3v1.3h-1.3zM292.7,507.6h1.3v1.3h-1.3zM292.7,522.3h1.3v1.3h-1.3zM292.7,537.0h1.3v1.3h-1.3zM292.7,551.7h1.3v1.3h-1.3zM292.7,566.5h1.3v1.3h-1.3zM292.7,581.2h1.3v1.3h-1.3zM292.7,595.9h1.3v1.3h-1.3zM292.7,610.6h1.3v1.3h-1.3zM292.7,625.3h1.3v1.3h-1.3zM292.7,640.1h1.3v1.3h-1.3zM292.7,654.8h1.3v1.3h-1.3zM292.7,669.5h1.3v1.3h-1.3zM292.7,684.2h1.3v1.3h-1.3zM292.7,698.9h1.3v1.3h-1.3zM307.4,448.7h1.3v1.3h-1.3zM307.4,463.4h1.3v1.3h-1.3zM307.4,478.1h1.3v1.3h-1.3zM307.4,492.9h1.3v1.3h-1.3zM307.4,507.6h1.3v1.3h-1.3zM307.4,522.3h1.3v1.3h-1.3zM307.4,537.0h1.3v1.3h-1.3zM307.4,551.7h1.3v1.3h-1.3zM307.4,566.5h1.3v1.3h-1.3zM307.4,581.2h1.3v1.3h-1.3zM307.4,595.9h1.3v1.3h-1.3zM307.4,610.6h1.3v1.3h-1.3zM307.4,625.3h1.3v1.3h-1.3zM307.4,640.1h1.3v1.3h-1.3zM307.4,654.8h1.3v1.3h-1.3zM307.4,669.5h1.3v1.3h-1.3zM307.4,684.2h1.3v1.3h-1.3zM307.4,698.9h1.3v1.3h-1.3zM322.1,448.7h1.3v1.3h-1.3zM322.1,463.4h1.3v1.3h-1.3zM322.1,478.1h1.3v1.3h-1.3zM322.1,492.9h1.3v1.3h-1.3zM322.1,507.6h1.3v1.3h-1.3zM322.1,522.3h1.3v1.3h-1.3zM322.1,537.0h1.3v1.3h-1.3zM322.1,551.7h1.3v1.3h-1.3zM322.1,566.5h1.3v1.3h-1.3zM322.1,581.2h1.3v1.3h-1.3zM322.1,595.9h1.3v1.3h-1.3zM322.1,610.6h1.3v1.3h-1.3zM322.1,625.3h1.3v1.3h-1.3zM322.1,640.1h1.3v1.3h-1.3zM322.1,654.8h1.3v1.3h-1.3zM322.1,669.5h1.3v1.3h-1.3zM322.1,684.2h1.3v1.3h-1.3zM322.1,698.9h1.3v1.3h-1.3zM336.8,448.7h1.3v1.3h-1.3zM336.8,463.4h1.3v1.3h-1.3zM336.8,478.1h1.3v1.3h-1.3zM336.8,492.9h1.3v1.3h-1.3zM336.8,507.6h1.3v1.3h-1.3zM336.8,522.3h1.3v1.3h-1.3zM336.8,537.0h1.3v1.3h-1.3zM336.8,551.7h1.3v1.3h-1.3zM336.8,566.5h1.3v1.3h-1.3zM336.8,581.2h1.3v1.3h-1.3zM336.8,595.9h1.3v1.3h-1.3zM336.8,610.6h1.3v1.3h-1.3zM336.8,625.3h1.3v1.3h-1.3zM336.8,640.1h1.3v1.3h-1.3zM336.8,654.8h1.3v1.3h-1.3zM336.8,669.5h1.3v1.3h-1.3zM336.8,684.2h1.3v1.3h-1.3zM336.8,698.9h1.3v1.3h-1.3zM351.6,448.7h1.3v1.3h-1.3zM351.6,463.4h1.3v1.3h-1.3zM351.6,478.1h1.3v1.3h-1.3zM351.6,492.9h1.3v1.3h-1.3zM351.6,507.6h1.3v1.3h-1.3zM351.6,522.3h1.3v1.3h-1.3zM351.6,537.0h1.3v1.3h-1.3zM351.6,551.7h1.3v1.3h-1.3zM351.6,566.5h1.3v1.3h-1.3zM351.6,581.2h1.3v1.3h-1.3zM351.6,595.9h1.3v1.3h-1.3zM351.6,610.6h1.3v1.3h-1.3zM351.6,625.3h1.3v1.3h-1.3zM351.6,640.1h1.3v1.3h-1.3zM351.6,654.8h1.3v1.3h-1.3zM351.6,669.5h1.3v1.3h-1.3zM351.6,684.2h1.3v1.3h-1.3zM351.6,698.9h1.3v1.3h-1.3zM366.3,448.7h1.3v1.3h-1.3zM366.3,463.4h1.3v1.3h-1.3zM366.3,478.1h1.3v1.3h-1.3zM366.3,492.9h1.3v1.3h-1.3zM366.3,507.6h1.3v1.3h-1.3zM366.3,522.3h1.3v1.3h-1.3zM366.3,537.0h1.3v1.3h-1.3zM366.3,551.7h1.3v1.3h-1.3zM366.3,566.5h1.3v1.3h-1.3zM366.3,581.2h1.3v1.3h-1.3zM366.3,595.9h1.3v1.3h-1.3zM366.3,610.6h1.3v1.3h-1.3zM366.3,625.3h1.3v1.3h-1.3zM366.3,640.1h1.3v1.3h-1.3zM366.3,654.8h1.3v1.3h-1.3zM366.3,669.5h1.3v1.3h-1.3zM366.3,684.2h1.3v1.3h-1.3zM366.3,698.9h1.3v1.3h-1.3zM381.0,448.7h1.3v1.3h-1.3zM381.0,463.4h1.3v1.3h-1.3zM381.0,478.1h1.3v1.3h-1.3zM381.0,492.9h1.3v1.3h-1.3zM381.0,507.6h1.3v1.3h-1.3zM381.0,522.3h1.3v1.3h-1.3zM381.0,537.0h1.3v1.3h-1.3zM381.0,551.7h1.3v1.3h-1.3zM381.0,566.5h1.3v1.3h-1.3zM381.0,581.2h1.3v1.3h-1.3zM381.0,595.9h1.3v1.3h-1.3zM381.0,610.6h1.3v1.3h-1.3zM381.0,625.3h1.3v1.3h-1.3zM381.0,640.1h1.3v1.3h-1.3zM381.0,654.8h1.3v1.3h-1.3zM381.0,669.5h1.3v1.3h-1.3zM381.0,684.2h1.3v1.3h-1.3zM381.0,698.9h1.3v1.3h-1.3zM395.7,448.7h1.3v1.3h-1.3zM395.7,463.4h1.3v1.3h-1.3zM395.7,478.1h1.3v1.3h-1.3zM395.7,492.9h1.3v1.3h-1.3zM395.7,507.6h1.3v1.3h-1.3zM395.7,522.3h1.3v1.3h-1.3zM395.7,537.0h1.3v1.3h-1.3zM395.7,551.7h1.3v1.3h-1.3zM395.7,566.5h1.3v1.3h-1.3zM395.7,581.2h1.3v1.3h-1.3zM395.7,595.9h1.3v1.3h-1.3zM395.7,610.6h1.3v1.3h-1.3zM395.7,625.3h1.3v1.3h-1.3zM395.7,640.1h1.3v1.3h-1.3zM395.7,654.8h1.3v1.3h-1.3zM395.7,669.5h1.3v1.3h-1.3zM395.7,684.2h1.3v1.3h-1.3zM395.7,698.9h1.3v1.3h-1.3zM410.4,448.7h1.3v1.3h-1.3zM410.4,463.4h1.3v1.3h-1.3zM410.4,478.1h1.3v1.3h-1.3zM410.4,492.9h1.3v1.3h-1.3zM410.4,507.6h1.3v1.3h-1.3zM410.4,522.3h1.3v1.3h-1.3zM410.4,537.0h1.3v1.3h-1.3zM410.4,551.7h1.3v1.3h-1.3zM410.4,566.5h1.3v1.3h-1.3zM410.4,581.2h1.3v1.3h-1.3zM410.4,595.9h1.3v1.3h-1.3zM410.4,610.6h1.3v1.3h-1.3zM410.4,625.3h1.3v1.3h-1.3zM410.4,640.1h1.3v1.3h-1.3zM410.4,654.8h1.3v1.3h-1.3zM410.4,669.5h1.3v1.3h-1.3zM410.4,684.2h1.3v1.3h-1.3zM410.4,698.9h1.3v1.3h-1.3zM425.2,448.7h1.3v1.3h-1.3zM425.2,463.4h1.3v1.3h-1.3zM425.2,478.1h1.3v1.3h-1.3zM425.2,492.9h1.3v1.3h-1.3zM425.2,507.6h1.3v1.3h-1.3zM425.2,522.3h1.3v1.3h-1.3zM425.2,537.0h1.3v1.3h-1.3zM425.2,551.7h1.3v1.3h-1.3zM425.2,566.5h1.3v1.3h-1.3zM425.2,581.2h1.3v1.3h-1.3zM425.2,595.9h1.3v1.3h-1.3zM425.2,610.6h1.3v1.3h-1.3zM425.2,625.3h1.3v1.3h-1.3zM425.2,640.1h1.3v1.3h-1.3zM425.2,654.8h1.3v1.3h-1.3zM425.2,669.5h1.3v1.3h-1.3zM425.2,684.2h1.3v1.3h-1.3zM425.2,698.9h1.3v1.3h-1.3zM439.9,448.7h1.3v1.3h-1.3zM439.9,463.4h1.3v1.3h-1.3zM439.9,478.1h1.3v1.3h-1.3zM439.9,492.9h1.3v1.3h-1.3zM439.9,507.6h1.3v1.3h-1.3zM439.9,522.3h1.3v1.3h-1.3zM439.9,537.0h1.3v1.3h-1.3zM439.9,551.7h1.3v1.3h-1.3zM439.9,566.5h1.3v1.3h-1.3zM439.9,581.2h1.3v1.3h-1.3zM439.9,595.9h1.3v1.3h-1.3zM439.9,610.6h1.3v1.3h-1.3zM439.9,625.3h1.3v1.3h-1.3zM439.9,640.1h1.3v1.3h-1.3zM439.9,654.8h1.3v1.3h-1.3zM439.9,669.5h1.3v1.3h-1.3zM439.9,684.2h1.3v1.3h-1.3zM439.9,698.9h1.3v1.3h-1.3zM454.6,448.7h1.3v1.3h-1.3zM454.6,463.4h1.3v1.3h-1.3zM454.6,478.1h1.3v1.3h-1.3zM454.6,492.9h1.3v1.3h-1.3zM454.6,507.6h1.3v1.3h-1.3zM454.6,522.3h1.3v1.3h-1.3zM454.6,537.0h1.3v1.3h-1.3zM454.6,551.7h1.3v1.3h-1.3zM454.6,566.5h1.3v1.3h-1.3zM454.6,581.2h1.3v1.3h-1.3zM454.6,595.9h1.3v1.3h-1.3zM454.6,610.6h1.3v1.3h-1.3zM454.6,625.3h1.3v1.3h-1.3zM454.6,640.1h1.3v1.3h-1.3zM454.6,654.8h1.3v1.3h-1.3zM454.6,669.5h1.3v1.3h-1.3zM454.6,684.2h1.3v1.3h-1.3zM454.6,698.9h1.3v1.3h-1.3zM469.3,448.7h1.3v1.3h-1.3zM469.3,463.4h1.3v1.3h-1.3zM469.3,478.1h1.3v1.3h-1.3zM469.3,492.9h1.3v1.3h-1.3zM469.3,507.6h1.3v1.3h-1.3zM469.3,522.3h1.3v1.3h-1.3zM469.3,537.0h1.3v1.3h-1.3zM469.3,551.7h1.3v1.3h-1.3zM469.3,566.5h1.3v1.3h-1.3zM469.3,581.2h1.3v1.3h-1.3zM469.3,595.9h1.3v1.3h-1.3zM469.3,610.6h1.3v1.3h-1.3zM469.3,625.3h1.3v1.3h-1.3zM469.3,640.1h1.3v1.3h-1.3zM469.3,654.8h1.3v1.3h-1.3zM469.3,669.5h1.3v1.3h-1.3zM469.3,684.2h1.3v1.3h-1.3zM469.3,698.9h1.3v1.3h-1.3zM484.0,448.7h1.3v1.3h-1.3zM484.0,463.4h1.3v1.3h-1.3zM484.0,478.1h1.3v1.3h-1.3zM484.0,492.9h1.3v1.3h-1.3zM484.0,507.6h1.3v1.3h-1.3zM484.0,522.3h1.3v1.3h-1.3zM484.0,537.0h1.3v1.3h-1.3zM484.0,551.7h1.3v1.3h-1.3zM484.0,566.5h1.3v1.3h-1.3zM484.0,581.2h1.3v1.3h-1.3zM484.0,595.9h1.3v1.3h-1.3zM484.0,610.6h1.3v1.3h-1.3zM484.0,625.3h1.3v1.3h-1.3zM484.0,640.1h1.3v1.3h-1.3zM484.0,654.8h1.3v1.3h-1.3zM484.0,669.5h1.3v1.3h-1.3zM484.0,684.2h1.3v1.3h-1.3zM484.0,698.9h1.3v1.3h-1.3zM498.8,448.7h1.3v1.3h-1.3zM498.8,463.4h1.3v1.3h-1.3zM498.8,478.1h1.3v1.3h-1.3zM498.8,492.9h1.3v1.3h-1.3zM498.8,507.6h1.3v1.3h-1.3zM498.8,522.3h1.3v1.3h-1.3zM498.8,537.0h1.3v1.3h-1.3zM498.8,551.7h1.3v1.3h-1.3zM498.8,566.5h1.3v1.3h-1.3zM498.8,581.2h1.3v1.3h-1.3zM498.8,595.9h1.3v1.3h-1.3zM498.8,610.6h1.3v1.3h-1.3zM498.8,625.3h1.3v1.3h-1.3zM498.8,640.1h1.3v1.3h-1.3zM498.8,654.8h1.3v1.3h-1.3zM498.8,669.5h1.3v1.3h-1.3zM498.8,684.2h1.3v1.3h-1.3zM498.8,698.9h1.3v1.3h-1.3zM513.5,448.7h1.3v1.3h-1.3zM513.5,463.4h1.3v1.3h-1.3zM513.5,478.1h1.3v1.3h-1.3zM513.5,492.9h1.3v1.3h-1.3zM513.5,507.6h1.3v1.3h-1.3zM513.5,522.3h1.3v1.3h-1.3zM513.5,537.0h1.3v1.3h-1.3zM513.5,551.7h1.3v1.3h-1.3zM513.5,566.5h1.3v1.3h-1.3zM513.5,581.2h1.3v1.3h-1.3zM513.5,595.9h1.3v1.3h-1.3zM513.5,610.6h1.3v1.3h-1.3zM513.5,625.3h1.3v1.3h-1.3zM513.5,640.1h1.3v1.3h-1.3zM513.5,654.8h1.3v1.3h-1.3zM513.5,669.5h1.3v1.3h-1.3zM513.5,684.2h1.3v1.3h-1.3zM513.5,698.9h1.3v1.3h-1.3zM528.2,448.7h1.3v1.3h-1.3zM528.2,463.4h1.3v1.3h-1.3zM528.2,478.1h1.3v1.3h-1.3zM528.2,492.9h1.3v1.3h-1.3zM528.2,507.6h1.3v1.3h-1.3zM528.2,522.3h1.3v1.3h-1.3zM528.2,537.0h1.3v1.3h-1.3zM528.2,551.7h1.3v1.3h-1.3zM528.2,566.5h1.3v1.3h-1.3zM528.2,581.2h1.3v1.3h-1.3zM528.2,595.9h1.3v1.3h-1.3zM528.2,610.6h1.3v1.3h-1.3zM528.2,625.3h1.3v1.3h-1.3zM528.2,640.1h1.3v1.3h-1.3zM528.2,654.8h1.3v1.3h-1.3zM528.2,669.5h1.3v1.3h-1.3zM528.2,684.2h1.3v1.3h-1.3zM528.2,698.9h1.3v1.3h-1.3zM542.9,448.7h1.3v1.3h-1.3zM542.9,463.4h1.3v1.3h-1.3zM542.9,478.1h1.3v1.3h-1.3zM542.9,492.9h1.3v1.3h-1.3zM542.9,507.6h1.3v1.3h-1.3zM542.9,522.3h1.3v1.3h-1.3zM542.9,537.0h1.3v1.3h-1.3zM542.9,551.7h1.3v1.3h-1.3zM542.9,566.5h1.3v1.3h-1.3zM542.9,581.2h1.3v1.3h-1.3zM542.9,595.9h1.3v1.3h-1.3zM542.9,610.6h1.3v1.3h-1.3zM542.9,625.3h1.3v1.3h-1.3zM542.9,640.1h1.3v1.3h-1.3zM542.9,654.8h1.3v1.3h-1.3zM542.9,669.5h1.3v1.3h-1.3zM542.9,684.2h1.3v1.3h-1.3zM542.9,698.9h1.3v1.3h-1.3zM557.6,448.7h1.3v1.3h-1.3zM557.6,463.4h1.3v1.3h-1.3zM557.6,478.1h1.3v1.3h-1.3zM557.6,492.9h1.3v1.3h-1.3zM557.6,507.6h1.3v1.3h-1.3zM557.6,522.3h1.3v1.3h-1.3zM557.6,537.0h1.3v1.3h-1.3zM557.6,551.7h1.3v1.3h-1.3zM557.6,566.5h1.3v1.3h-1.3zM557.6,581.2h1.3v1.3h-1.3zM557.6,595.9h1.3v1.3h-1.3zM557.6,610.6h1.3v1.3h-1.3zM557.6,625.3h1.3v1.3h-1.3zM557.6,640.1h1.3v1.3h-1.3zM557.6,654.8h1.3v1.3h-1.3zM557.6,669.5h1.3v1.3h-1.3zM557.6,684.2h1.3v1.3h-1.3zM557.6,698.9h1.3v1.3h-1.3zM572.4,448.7h1.3v1.3h-1.3zM572.4,463.4h1.3v1.3h-1.3zM572.4,478.1h1.3v1.3h-1.3zM572.4,492.9h1.3v1.3h-1.3zM572.4,507.6h1.3v1.3h-1.3zM572.4,522.3h1.3v1.3h-1.3zM572.4,537.0h1.3v1.3h-1.3zM572.4,551.7h1.3v1.3h-1.3zM572.4,566.5h1.3v1.3h-1.3zM572.4,581.2h1.3v1.3h-1.3zM572.4,595.9h1.3v1.3h-1.3zM572.4,610.6h1.3v1.3h-1.3zM572.4,625.3h1.3v1.3h-1.3zM572.4,640.1h1.3v1.3h-1.3zM572.4,654.8h1.3v1.3h-1.3zM572.4,669.5h1.3v1.3h-1.3zM572.4,684.2h1.3v1.3h-1.3zM572.4,698.9h1.3v1.3h-1.3zM587.1,448.7h1.3v1.3h-1.3zM587.1,463.4h1.3v1.3h-1.3zM587.1,478.1h1.3v1.3h-1.3zM587.1,492.9h1.3v1.3h-1.3zM587.1,507.6h1.3v1.3h-1.3zM587.1,522.3h1.3v1.3h-1.3zM587.1,537.0h1.3v1.3h-1.3zM587.1,551.7h1.3v1.3h-1.3zM587.1,566.5h1.3v1.3h-1.3zM587.1,581.2h1.3v1.3h-1.3zM587.1,595.9h1.3v1.3h-1.3zM587.1,610.6h1.3v1.3h-1.3zM587.1,625.3h1.3v1.3h-1.3zM587.1,640.1h1.3v1.3h-1.3zM587.1,654.8h1.3v1.3h-1.3zM587.1,669.5h1.3v1.3h-1.3zM587.1,684.2h1.3v1.3h-1.3zM587.1,698.9h1.3v1.3h-1.3zM601.8,448.7h1.3v1.3h-1.3zM601.8,463.4h1.3v1.3h-1.3zM601.8,478.1h1.3v1.3h-1.3zM601.8,492.9h1.3v1.3h-1.3zM601.8,507.6h1.3v1.3h-1.3zM601.8,522.3h1.3v1.3h-1.3zM601.8,537.0h1.3v1.3h-1.3zM601.8,551.7h1.3v1.3h-1.3zM601.8,566.5h1.3v1.3h-1.3zM601.8,581.2h1.3v1.3h-1.3zM601.8,595.9h1.3v1.3h-1.3zM601.8,610.6h1.3v1.3h-1.3zM601.8,625.3h1.3v1.3h-1.3zM601.8,640.1h1.3v1.3h-1.3zM601.8,654.8h1.3v1.3h-1.3zM601.8,669.5h1.3v1.3h-1.3zM601.8,684.2h1.3v1.3h-1.3zM601.8,698.9h1.3v1.3h-1.3zM616.5,448.7h1.3v1.3h-1.3zM616.5,463.4h1.3v1.3h-1.3zM616.5,478.1h1.3v1.3h-1.3zM616.5,492.9h1.3v1.3h-1.3zM616.5,507.6h1.3v1.3h-1.3zM616.5,522.3h1.3v1.3h-1.3zM616.5,537.0h1.3v1.3h-1.3zM616.5,551.7h1.3v1.3h-1.3zM616.5,566.5h1.3v1.3h-1.3zM616.5,581.2h1.3v1.3h-1.3zM616.5,595.9h1.3v1.3h-1.3zM616.5,610.6h1.3v1.3h-1.3zM616.5,625.3h1.3v1.3h-1.3zM616.5,640.1h1.3v1.3h-1.3zM616.5,654.8h1.3v1.3h-1.3zM616.5,669.5h1.3v1.3h-1.3zM616.5,684.2h1.3v1.3h-1.3zM616.5,698.9h1.3v1.3h-1.3zM631.2,448.7h1.3v1.3h-1.3zM631.2,463.4h1.3v1.3h-1.3zM631.2,478.1h1.3v1.3h-1.3zM631.2,492.9h1.3v1.3h-1.3zM631.2,507.6h1.3v1.3h-1.3zM631.2,522.3h1.3v1.3h-1.3zM631.2,537.0h1.3v1.3h-1.3zM631.2,551.7h1.3v1.3h-1.3zM631.2,566.5h1.3v1.3h-1.3zM631.2,581.2h1.3v1.3h-1.3zM631.2,595.9h1.3v1.3h-1.3zM631.2,610.6h1.3v1.3h-1.3zM631.2,625.3h1.3v1.3h-1.3zM631.2,640.1h1.3v1.3h-1.3zM631.2,654.8h1.3v1.3h-1.3zM631.2,669.5h1.3v1.3h-1.3zM631.2,684.2h1.3v1.3h-1.3zM631.2,698.9h1.3v1.3h-1.3zM646.0,448.7h1.3v1.3h-1.3zM646.0,463.4h1.3v1.3h-1.3zM646.0,478.1h1.3v1.3h-1.3zM646.0,492.9h1.3v1.3h-1.3zM646.0,507.6h1.3v1.3h-1.3zM646.0,522.3h1.3v1.3h-1.3zM646.0,537.0h1.3v1.3h-1.3zM646.0,551.7h1.3v1.3h-1.3zM646.0,566.5h1.3v1.3h-1.3zM646.0,581.2h1.3v1.3h-1.3zM646.0,595.9h1.3v1.3h-1.3zM646.0,610.6h1.3v1.3h-1.3zM646.0,625.3h1.3v1.3h-1.3zM646.0,640.1h1.3v1.3h-1.3zM646.0,654.8h1.3v1.3h-1.3zM646.0,669.5h1.3v1.3h-1.3zM646.0,684.2h1.3v1.3h-1.3zM646.0,698.9h1.3v1.3h-1.3zM660.7,448.7h1.3v1.3h-1.3zM660.7,463.4h1.3v1.3h-1.3zM660.7,478.1h1.3v1.3h-1.3zM660.7,492.9h1.3v1.3h-1.3zM660.7,507.6h1.3v1.3h-1.3zM660.7,522.3h1.3v1.3h-1.3zM660.7,537.0h1.3v1.3h-1.3zM660.7,551.7h1.3v1.3h-1.3zM660.7,566.5h1.3v1.3h-1.3zM660.7,581.2h1.3v1.3h-1.3zM660.7,595.9h1.3v1.3h-1.3zM660.7,610.6h1.3v1.3h-1.3zM660.7,625.3h1.3v1.3h-1.3zM660.7,640.1h1.3v1.3h-1.3zM660.7,654.8h1.3v1.3h-1.3zM660.7,669.5h1.3v1.3h-1.3zM660.7,684.2h1.3v1.3h-1.3zM660.7,698.9h1.3v1.3h-1.3zM675.4,448.7h1.3v1.3h-1.3zM675.4,463.4h1.3v1.3h-1.3zM675.4,478.1h1.3v1.3h-1.3zM675.4,492.9h1.3v1.3h-1.3zM675.4,507.6h1.3v1.3h-1.3zM675.4,522.3h1.3v1.3h-1.3zM675.4,537.0h1.3v1.3h-1.3zM675.4,551.7h1.3v1.3h-1.3zM675.4,566.5h1.3v1.3h-1.3zM675.4,581.2h1.3v1.3h-1.3zM675.4,595.9h1.3v1.3h-1.3zM675.4,610.6h1.3v1.3h-1.3zM675.4,625.3h1.3v1.3h-1.3zM675.4,640.1h1.3v1.3h-1.3zM675.4,654.8h1.3v1.3h-1.3zM675.4,669.5h1.3v1.3h-1.3zM675.4,684.2h1.3v1.3h-1.3zM675.4,698.9h1.3v1.3h-1.3zM690.1,448.7h1.3v1.3h-1.3zM690.1,463.4h1.3v1.3h-1.3zM690.1,478.1h1.3v1.3h-1.3zM690.1,492.9h1.3v1.3h-1.3zM690.1,507.6h1.3v1.3h-1.3zM690.1,522.3h1.3v1.3h-1.3zM690.1,537.0h1.3v1.3h-1.3zM690.1,551.7h1.3v1.3h-1.3zM690.1,566.5h1.3v1.3h-1.3zM690.1,581.2h1.3v1.3h-1.3zM690.1,595.9h1.3v1.3h-1.3zM690.1,610.6h1.3v1.3h-1.3zM690.1,625.3h1.3v1.3h-1.3zM690.1,640.1h1.3v1.3h-1.3zM690.1,654.8h1.3v1.3h-1.3zM690.1,669.5h1.3v1.3h-1.3zM690.1,684.2h1.3v1.3h-1.3zM690.1,698.9h1.3v1.3h-1.3zM704.8,448.7h1.3v1.3h-1.3zM704.8,463.4h1.3v1.3h-1.3zM704.8,478.1h1.3v1.3h-1.3zM704.8,492.9h1.3v1.3h-1.3zM704.8,507.6h1.3v1.3h-1.3zM704.8,522.3h1.3v1.3h-1.3zM704.8,537.0h1.3v1.3h-1.3zM704.8,551.7h1.3v1.3h-1.3zM704.8,566.5h1.3v1.3h-1.3zM704.8,581.2h1.3v1.3h-1.3zM704.8,595.9h1.3v1.3h-1.3zM704.8,610.6h1.3v1.3h-1.3zM704.8,625.3h1.3v1.3h-1.3zM704.8,640.1h1.3v1.3h-1.3zM704.8,654.8h1.3v1.3h-1.3zM704.8,669.5h1.3v1.3h-1.3zM704.8,684.2h1.3v1.3h-1.3zM704.8,698.9h1.3v1.3h-1.3zM719.6,448.7h1.3v1.3h-1.3zM719.6,463.4h1.3v1.3h-1.3zM719.6,478.1h1.3v1.3h-1.3zM719.6,492.9h1.3v1.3h-1.3zM719.6,507.6h1.3v1.3h-1.3zM719.6,522.3h1.3v1.3h-1.3zM719.6,537.0h1.3v1.3h-1.3zM719.6,551.7h1.3v1.3h-1.3zM719.6,566.5h1.3v1.3h-1.3zM719.6,581.2h1.3v1.3h-1.3zM719.6,595.9h1.3v1.3h-1.3zM719.6,610.6h1.3v1.3h-1.3zM719.6,625.3h1.3v1.3h-1.3zM719.6,640.1h1.3v1.3h-1.3zM719.6,654.8h1.3v1.3h-1.3zM719.6,669.5h1.3v1.3h-1.3zM719.6,684.2h1.3v1.3h-1.3zM719.6,698.9h1.3v1.3h-1.3zM734.3,448.7h1.3v1.3h-1.3zM734.3,463.4h1.3v1.3h-1.3zM734.3,478.1h1.3v1.3h-1.3zM734.3,492.9h1.3v1.3h-1.3zM734.3,507.6h1.3v1.3h-1.3zM734.3,522.3h1.3v1.3h-1.3zM734.3,537.0h1.3v1.3h-1.3zM734.3,551.7h1.3v1.3h-1.3zM734.3,566.5h1.3v1.3h-1.3zM734.3,581.2h1.3v1.3h-1.3zM734.3,595.9h1.3v1.3h-1.3zM734.3,610.6h1.3v1.3h-1.3zM734.3,625.3h1.3v1.3h-1.3zM734.3,640.1h1.3v1.3h-1.3zM734.3,654.8h1.3v1.3h-1.3zM734.3,669.5h1.3v1.3h-1.3zM734.3,684.2h1.3v1.3h-1.3zM734.3,698.9h1.3v1.3h-1.3zM749.0,448.7h1.3v1.3h-1.3zM749.0,463.4h1.3v1.3h-1.3zM749.0,478.1h1.3v1.3h-1.3zM749.0,492.9h1.3v1.3h-1.3zM749.0,507.6h1.3v1.3h-1.3zM749.0,522.3h1.3v1.3h-1.3zM749.0,537.0h1.3v1.3h-1.3zM749.0,551.7h1.3v1.3h-1.3zM749.0,566.5h1.3v1.3h-1.3zM749.0,581.2h1.3v1.3h-1.3zM749.0,595.9h1.3v1.3h-1.3zM749.0,610.6h1.3v1.3h-1.3zM749.0,625.3h1.3v1.3h-1.3zM749.0,640.1h1.3v1.3h-1.3zM749.0,654.8h1.3v1.3h-1.3zM749.0,669.5h1.3v1.3h-1.3zM749.0,684.2h1.3v1.3h-1.3zM749.0,698.9h1.3v1.3h-1.3zM763.7,448.7h1.3v1.3h-1.3zM763.7,463.4h1.3v1.3h-1.3zM763.7,478.1h1.3v1.3h-1.3zM763.7,492.9h1.3v1.3h-1.3zM763.7,507.6h1.3v1.3h-1.3zM763.7,522.3h1.3v1.3h-1.3zM763.7,537.0h1.3v1.3h-1.3zM763.7,551.7h1.3v1.3h-1.3zM763.7,566.5h1.3v1.3h-1.3zM763.7,581.2h1.3v1.3h-1.3zM763.7,595.9h1.3v1.3h-1.3zM763.7,610.6h1.3v1.3h-1.3zM763.7,625.3h1.3v1.3h-1.3zM763.7,640.1h1.3v1.3h-1.3zM763.7,654.8h1.3v1.3h-1.3zM763.7,669.5h1.3v1.3h-1.3zM763.7,684.2h1.3v1.3h-1.3zM763.7,698.9h1.3v1.3h-1.3zM778.4,448.7h1.3v1.3h-1.3zM778.4,463.4h1.3v1.3h-1.3zM778.4,478.1h1.3v1.3h-1.3zM778.4,492.9h1.3v1.3h-1.3zM778.4,507.6h1.3v1.3h-1.3zM778.4,522.3h1.3v1.3h-1.3zM778.4,537.0h1.3v1.3h-1.3zM778.4,551.7h1.3v1.3h-1.3zM778.4,566.5h1.3v1.3h-1.3zM778.4,581.2h1.3v1.3h-1.3zM778.4,595.9h1.3v1.3h-1.3zM778.4,610.6h1.3v1.3h-1.3zM778.4,625.3h1.3v1.3h-1.3zM778.4,640.1h1.3v1.3h-1.3zM778.4,654.8h1.3v1.3h-1.3zM778.4,669.5h1.3v1.3h-1.3zM778.4,684.2h1.3v1.3h-1.3zM778.4,698.9h1.3v1.3h-1.3zM793.2,448.7h1.3v1.3h-1.3zM793.2,463.4h1.3v1.3h-1.3zM793.2,478.1h1.3v1.3h-1.3zM793.2,492.9h1.3v1.3h-1.3zM793.2,507.6h1.3v1.3h-1.3zM793.2,522.3h1.3v1.3h-1.3zM793.2,537.0h1.3v1.3h-1.3zM793.2,551.7h1.3v1.3h-1.3zM793.2,566.5h1.3v1.3h-1.3zM793.2,581.2h1.3v1.3h-1.3zM793.2,595.9h1.3v1.3h-1.3zM793.2,610.6h1.3v1.3h-1.3zM793.2,625.3h1.3v1.3h-1.3zM793.2,640.1h1.3v1.3h-1.3zM793.2,654.8h1.3v1.3h-1.3zM793.2,669.5h1.3v1.3h-1.3zM793.2,684.2h1.3v1.3h-1.3zM793.2,698.9h1.3v1.3h-1.3zM807.9,448.7h1.3v1.3h-1.3zM807.9,463.4h1.3v1.3h-1.3zM807.9,478.1h1.3v1.3h-1.3zM807.9,492.9h1.3v1.3h-1.3zM807.9,507.6h1.3v1.3h-1.3zM807.9,522.3h1.3v1.3h-1.3zM807.9,537.0h1.3v1.3h-1.3zM807.9,551.7h1.3v1.3h-1.3zM807.9,566.5h1.3v1.3h-1.3zM807.9,581.2h1.3v1.3h-1.3zM807.9,595.9h1.3v1.3h-1.3zM807.9,610.6h1.3v1.3h-1.3zM807.9,625.3h1.3v1.3h-1.3zM807.9,640.1h1.3v1.3h-1.3zM807.9,654.8h1.3v1.3h-1.3zM807.9,669.5h1.3v1.3h-1.3zM807.9,684.2h1.3v1.3h-1.3zM807.9,698.9h1.3v1.3h-1.3zM822.6,448.7h1.3v1.3h-1.3zM822.6,463.4h1.3v1.3h-1.3zM822.6,478.1h1.3v1.3h-1.3zM822.6,492.9h1.3v1.3h-1.3zM822.6,507.6h1.3v1.3h-1.3zM822.6,522.3h1.3v1.3h-1.3zM822.6,537.0h1.3v1.3h-1.3zM822.6,551.7h1.3v1.3h-1.3zM822.6,566.5h1.3v1.3h-1.3zM822.6,581.2h1.3v1.3h-1.3zM822.6,595.9h1.3v1.3h-1.3zM822.6,610.6h1.3v1.3h-1.3zM822.6,625.3h1.3v1.3h-1.3zM822.6,640.1h1.3v1.3h-1.3zM822.6,654.8h1.3v1.3h-1.3zM822.6,669.5h1.3v1.3h-1.3zM822.6,684.2h1.3v1.3h-1.3zM822.6,698.9h1.3v1.3h-1.3zM837.3,448.7h1.3v1.3h-1.3zM837.3,463.4h1.3v1.3h-1.3zM837.3,478.1h1.3v1.3h-1.3zM837.3,492.9h1.3v1.3h-1.3zM837.3,507.6h1.3v1.3h-1.3zM837.3,522.3h1.3v1.3h-1.3zM837.3,537.0h1.3v1.3h-1.3zM837.3,551.7h1.3v1.3h-1.3zM837.3,566.5h1.3v1.3h-1.3zM837.3,581.2h1.3v1.3h-1.3zM837.3,595.9h1.3v1.3h-1.3zM837.3,610.6h1.3v1.3h-1.3zM837.3,625.3h1.3v1.3h-1.3zM837.3,640.1h1.3v1.3h-1.3zM837.3,654.8h1.3v1.3h-1.3zM837.3,669.5h1.3v1.3h-1.3zM837.3,684.2h1.3v1.3h-1.3zM837.3,698.9h1.3v1.3h-1.3zM852.0,448.7h1.3v1.3h-1.3zM852.0,463.4h1.3v1.3h-1.3zM852.0,478.1h1.3v1.3h-1.3zM852.0,492.9h1.3v1.3h-1.3zM852.0,507.6h1.3v1.3h-1.3zM852.0,522.3h1.3v1.3h-1.3zM852.0,537.0h1.3v1.3h-1.3zM852.0,551.7h1.3v1.3h-1.3zM852.0,566.5h1.3v1.3h-1.3zM852.0,581.2h1.3v1.3h-1.3zM852.0,595.9h1.3v1.3h-1.3zM852.0,610.6h1.3v1.3h-1.3zM852.0,625.3h1.3v1.3h-1.3zM852.0,640.1h1.3v1.3h-1.3zM852.0,654.8h1.3v1.3h-1.3zM852.0,669.5h1.3v1.3h-1.3zM852.0,684.2h1.3v1.3h-1.3zM852.0,698.9h1.3v1.3h-1.3zM866.8,448.7h1.3v1.3h-1.3zM866.8,463.4h1.3v1.3h-1.3zM866.8,478.1h1.3v1.3h-1.3zM866.8,492.9h1.3v1.3h-1.3zM866.8,507.6h1.3v1.3h-1.3zM866.8,522.3h1.3v1.3h-1.3zM866.8,537.0h1.3v1.3h-1.3zM866.8,551.7h1.3v1.3h-1.3zM866.8,566.5h1.3v1.3h-1.3zM866.8,581.2h1.3v1.3h-1.3zM866.8,595.9h1.3v1.3h-1.3zM866.8,610.6h1.3v1.3h-1.3zM866.8,625.3h1.3v1.3h-1.3zM866.8,640.1h1.3v1.3h-1.3zM866.8,654.8h1.3v1.3h-1.3zM866.8,669.5h1.3v1.3h-1.3zM866.8,684.2h1.3v1.3h-1.3zM866.8,698.9h1.3v1.3h-1.3zM881.5,448.7h1.3v1.3h-1.3zM881.5,463.4h1.3v1.3h-1.3zM881.5,478.1h1.3v1.3h-1.3zM881.5,492.9h1.3v1.3h-1.3zM881.5,507.6h1.3v1.3h-1.3zM881.5,522.3h1.3v1.3h-1.3zM881.5,537.0h1.3v1.3h-1.3zM881.5,551.7h1.3v1.3h-1.3zM881.5,566.5h1.3v1.3h-1.3zM881.5,581.2h1.3v1.3h-1.3zM881.5,595.9h1.3v1.3h-1.3zM881.5,610.6h1.3v1.3h-1.3zM881.5,625.3h1.3v1.3h-1.3zM881.5,640.1h1.3v1.3h-1.3zM881.5,654.8h1.3v1.3h-1.3zM881.5,669.5h1.3v1.3h-1.3zM881.5,684.2h1.3v1.3h-1.3zM881.5,698.9h1.3v1.3h-1.3zM896.2,448.7h1.3v1.3h-1.3zM896.2,463.4h1.3v1.3h-1.3zM896.2,478.1h1.3v1.3h-1.3zM896.2,492.9h1.3v1.3h-1.3zM896.2,507.6h1.3v1.3h-1.3zM896.2,522.3h1.3v1.3h-1.3zM896.2,537.0h1.3v1.3h-1.3zM896.2,551.7h1.3v1.3h-1.3zM896.2,566.5h1.3v1.3h-1.3zM896.2,581.2h1.3v1.3h-1.3zM896.2,595.9h1.3v1.3h-1.3zM896.2,610.6h1.3v1.3h-1.3zM896.2,625.3h1.3v1.3h-1.3zM896.2,640.1h1.3v1.3h-1.3zM896.2,654.8h1.3v1.3h-1.3zM896.2,669.5h1.3v1.3h-1.3zM896.2,684.2h1.3v1.3h-1.3zM896.2,698.9h1.3v1.3h-1.3zM910.9,448.7h1.3v1.3h-1.3zM910.9,463.4h1.3v1.3h-1.3zM910.9,478.1h1.3v1.3h-1.3zM910.9,492.9h1.3v1.3h-1.3zM910.9,507.6h1.3v1.3h-1.3zM910.9,522.3h1.3v1.3h-1.3zM910.9,537.0h1.3v1.3h-1.3zM910.9,551.7h1.3v1.3h-1.3zM910.9,566.5h1.3v1.3h-1.3zM910.9,581.2h1.3v1.3h-1.3zM910.9,595.9h1.3v1.3h-1.3zM910.9,610.6h1.3v1.3h-1.3zM910.9,625.3h1.3v1.3h-1.3zM910.9,640.1h1.3v1.3h-1.3zM910.9,654.8h1.3v1.3h-1.3zM910.9,669.5h1.3v1.3h-1.3zM910.9,684.2h1.3v1.3h-1.3zM910.9,698.9h1.3v1.3h-1.3zM925.6,448.7h1.3v1.3h-1.3zM925.6,463.4h1.3v1.3h-1.3zM925.6,478.1h1.3v1.3h-1.3zM925.6,492.9h1.3v1.3h-1.3zM925.6,507.6h1.3v1.3h-1.3zM925.6,522.3h1.3v1.3h-1.3zM925.6,537.0h1.3v1.3h-1.3zM925.6,551.7h1.3v1.3h-1.3zM925.6,566.5h1.3v1.3h-1.3zM925.6,581.2h1.3v1.3h-1.3zM925.6,595.9h1.3v1.3h-1.3zM925.6,610.6h1.3v1.3h-1.3zM925.6,625.3h1.3v1.3h-1.3zM925.6,640.1h1.3v1.3h-1.3zM925.6,654.8h1.3v1.3h-1.3zM925.6,669.5h1.3v1.3h-1.3zM925.6,684.2h1.3v1.3h-1.3zM925.6,698.9h1.3v1.3h-1.3zM940.4,448.7h1.3v1.3h-1.3zM940.4,463.4h1.3v1.3h-1.3zM940.4,478.1h1.3v1.3h-1.3zM940.4,492.9h1.3v1.3h-1.3zM940.4,507.6h1.3v1.3h-1.3zM940.4,522.3h1.3v1.3h-1.3zM940.4,537.0h1.3v1.3h-1.3zM940.4,551.7h1.3v1.3h-1.3zM940.4,566.5h1.3v1.3h-1.3zM940.4,581.2h1.3v1.3h-1.3zM940.4,595.9h1.3v1.3h-1.3zM940.4,610.6h1.3v1.3h-1.3zM940.4,625.3h1.3v1.3h-1.3zM940.4,640.1h1.3v1.3h-1.3zM940.4,654.8h1.3v1.3h-1.3zM940.4,669.5h1.3v1.3h-1.3zM940.4,684.2h1.3v1.3h-1.3zM940.4,698.9h1.3v1.3h-1.3zM955.1,448.7h1.3v1.3h-1.3zM955.1,463.4h1.3v1.3h-1.3zM955.1,478.1h1.3v1.3h-1.3zM955.1,492.9h1.3v1.3h-1.3zM955.1,507.6h1.3v1.3h-1.3zM955.1,522.3h1.3v1.3h-1.3zM955.1,537.0h1.3v1.3h-1.3zM955.1,551.7h1.3v1.3h-1.3zM955.1,566.5h1.3v1.3h-1.3zM955.1,581.2h1.3v1.3h-1.3zM955.1,595.9h1.3v1.3h-1.3zM955.1,610.6h1.3v1.3h-1.3zM955.1,625.3h1.3v1.3h-1.3zM955.1,640.1h1.3v1.3h-1.3zM955.1,654.8h1.3v1.3h-1.3zM955.1,669.5h1.3v1.3h-1.3zM955.1,684.2h1.3v1.3h-1.3zM955.1,698.9h1.3v1.3h-1.3zM969.8,448.7h1.3v1.3h-1.3zM969.8,463.4h1.3v1.3h-1.3zM969.8,478.1h1.3v1.3h-1.3zM969.8,492.9h1.3v1.3h-1.3zM969.8,507.6h1.3v1.3h-1.3zM969.8,522.3h1.3v1.3h-1.3zM969.8,537.0h1.3v1.3h-1.3zM969.8,551.7h1.3v1.3h-1.3zM969.8,566.5h1.3v1.3h-1.3zM969.8,581.2h1.3v1.3h-1.3zM969.8,595.9h1.3v1.3h-1.3zM969.8,610.6h1.3v1.3h-1.3zM969.8,625.3h1.3v1.3h-1.3zM969.8,640.1h1.3v1.3h-1.3zM969.8,654.8h1.3v1.3h-1.3zM969.8,669.5h1.3v1.3h-1.3zM969.8,684.2h1.3v1.3h-1.3zM969.8,698.9h1.3v1.3h-1.3zM984.5,448.7h1.3v1.3h-1.3zM984.5,463.4h1.3v1.3h-1.3zM984.5,478.1h1.3v1.3h-1.3zM984.5,492.9h1.3v1.3h-1.3zM984.5,507.6h1.3v1.3h-1.3zM984.5,522.3h1.3v1.3h-1.3zM984.5,537.0h1.3v1.3h-1.3zM984.5,551.7h1.3v1.3h-1.3zM984.5,566.5h1.3v1.3h-1.3zM984.5,581.2h1.3v1.3h-1.3zM984.5,595.9h1.3v1.3h-1.3zM984.5,610.6h1.3v1.3h-1.3zM984.5,625.3h1.3v1.3h-1.3zM984.5,640.1h1.3v1.3h-1.3zM984.5,654.8h1.3v1.3h-1.3zM984.5,669.5h1.3v1.3h-1.3zM984.5,684.2h1.3v1.3h-1.3zM984.5,698.9h1.3v1.3h-1.3zM999.2,448.7h1.3v1.3h-1.3zM999.2,463.4h1.3v1.3h-1.3zM999.2,478.1h1.3v1.3h-1.3zM999.2,492.9h1.3v1.3h-1.3zM999.2,507.6h1.3v1.3h-1.3zM999.2,522.3h1.3v1.3h-1.3zM999.2,537.0h1.3v1.3h-1.3zM999.2,551.7h1.3v1.3h-1.3zM999.2,566.5h1.3v1.3h-1.3zM999.2,581.2h1.3v1.3h-1.3zM999.2,595.9h1.3v1.3h-1.3zM999.2,610.6h1.3v1.3h-1.3zM999.2,625.3h1.3v1.3h-1.3zM999.2,640.1h1.3v1.3h-1.3zM999.2,654.8h1.3v1.3h-1.3zM999.2,669.5h1.3v1.3h-1.3zM999.2,684.2h1.3v1.3h-1.3zM999.2,698.9h1.3v1.3h-1.3zM1014.0,448.7h1.3v1.3h-1.3zM1014.0,463.4h1.3v1.3h-1.3zM1014.0,478.1h1.3v1.3h-1.3zM1014.0,492.9h1.3v1.3h-1.3zM1014.0,507.6h1.3v1.3h-1.3zM1014.0,522.3h1.3v1.3h-1.3zM1014.0,537.0h1.3v1.3h-1.3zM1014.0,551.7h1.3v1.3h-1.3zM1014.0,566.5h1.3v1.3h-1.3zM1014.0,581.2h1.3v1.3h-1.3zM1014.0,595.9h1.3v1.3h-1.3zM1014.0,610.6h1.3v1.3h-1.3zM1014.0,625.3h1.3v1.3h-1.3zM1014.0,640.1h1.3v1.3h-1.3zM1014.0,654.8h1.3v1.3h-1.3zM1014.0,669.5h1.3v1.3h-1.3zM1014.0,684.2h1.3v1.3h-1.3zM1014.0,698.9h1.3v1.3h-1.3z" fill="#000000"/>
<path d="M626,627H638V680H626ZM638,647H652V654H638ZM638,668H652V680H638ZM656,646H695V654H656ZM656,654H669V680H656ZM669,672H695V680H669ZM682,654H695V664H682ZM669,659H682V664H669ZM699.5,631.5H712.5V680H699.5ZM712.5,645.5H734.5V655.5H712.5ZM722,655.5H734.5V680H722ZM740.7,645.3H776.4V655.6H740.7ZM740.7,655.6H753.7V680H740.7ZM762,655.6H776.4V680H762ZM783,644.5H820V654.5H783ZM808,654.5H820V680H808ZM783,658H808V664H783ZM783,664H795V672H783ZM783,672H808V680H783ZM825,644.5H838V680H825ZM838,644.5H857V657.5H838ZM862,633.7H875V642H862ZM862,644.5H875V680H862ZM882,667H897V680H882ZM902,644.5H915V680H902ZM915,644.5H930.5V657.5H915ZM937.7,644.5H950V680H937.7ZM959,644.5H972V680H959ZM950,668H959V680H950Z" fill="#A8A8BC" fill-opacity="0.75"/>
<path d="M624,625H636V658H624ZM636,645H650V652H636ZM654,644H693V652H654ZM654,652H667V658H654ZM680,652H693V658H680ZM667,657H680V658H667ZM697.5,629.5H710.5V658H697.5ZM710.5,643.5H732.5V653.5H710.5ZM720,653.5H732.5V658H720ZM738.7,643.3H774.4V653.6H738.7ZM738.7,653.6H751.7V658H738.7ZM760,653.6H774.4V658H760ZM781,642.5H818V652.5H781ZM806,652.5H818V658H806ZM781,656H806V658H781ZM823,642.5H836V658H823ZM836,642.5H855V655.5H836ZM860,631.7H873V640H860ZM860,642.5H873V658H860ZM900,642.5H913V658H900ZM913,642.5H928.5V655.5H913ZM935.7,642.5H948V658H935.7ZM957,642.5H970V658H957Z" fill="#C8D8EE" fill-opacity="0.8"/>
<path d="M624,658H636V678H624ZM636,666H650V678H636ZM654,658H667V678H654ZM667,670H693V678H667ZM680,658H693V662H680ZM667,658H680V662H667ZM697.5,658H710.5V678H697.5ZM720,658H732.5V678H720ZM738.7,658H751.7V678H738.7ZM760,658H774.4V678H760ZM806,658H818V678H806ZM781,658H806V662H781ZM781,662H793V670H781ZM781,670H806V678H781ZM823,658H836V678H823ZM860,658H873V678H860ZM880,665H895V678H880ZM900,658H913V678H900ZM935.7,658H948V678H935.7ZM957,658H970V678H957ZM948,666H957V678H948Z" fill="#88B8E4" fill-opacity="0.82"/>
<path d="M302.4,466.4 L302.4,459.4 L715.5,459.4 L715.5,467.9" fill="none" stroke="#141428" stroke-width="1.5"/>
<circle cx="302.4" cy="476.09999999999997" r="9.5" fill="none" stroke="#1C1C50" stroke-width="1.2"/>
<path d="M302.4,471.4 L302.4,481.9 M300.59999999999997,474.9 L302.4,471.4 L304.2,474.9" fill="none" stroke="#1C1C50" stroke-width="1.3"/>
<line x1="302.4" y1="485.09999999999997" x2="302.4" y2="493.4" stroke="#14146E" stroke-width="1.1"/>
<path d="M296.9,493.4 L307.9,493.4 L302.4,499.4 Z" fill="none" stroke="#14146E" stroke-width="1.1"/>
<text x="312.79999999999995" y="466.09999999999997" text-anchor="start" font-family='"Liberation Sans", sans-serif' font-weight="bold" font-size="6.6" fill="#101018">I1</text>
<text x="310.7" y="499.4" text-anchor="start" font-family='"Liberation Sans", sans-serif' font-weight="bold" font-size="6.6" fill="#101018">AC 1.</text>
<line x1="347.6" y1="459.4" x2="347.6" y2="493.4" stroke="#14146E" stroke-width="1.1"/>
<rect x="344.40000000000003" y="467.79999999999995" width="6.2" height="16" fill="#14146E"/>
<circle cx="347.6" cy="459.4" r="2" fill="#B0204A"/>
<path d="M342.1,493.4 L353.1,493.4 L347.6,499.4 Z" fill="none" stroke="#14146E" stroke-width="1.1"/>
<text x="354.0" y="473.09999999999997" text-anchor="start" font-family='"Liberation Sans", sans-serif' font-weight="bold" font-size="6.6" fill="#101018">R1</text>
<text x="354.0" y="484.0" text-anchor="start" font-family='"Liberation Sans", sans-serif' font-weight="bold" font-size="6.6" fill="#101018">1</text>
<line x1="715.5" y1="459.4" x2="715.5" y2="493.4" stroke="#14146E" stroke-width="1.1"/>
<rect x="712.3" y="467.79999999999995" width="6.2" height="16" fill="#14146E"/>
<path d="M710.0,493.4 L721.0,493.4 L715.5,499.4 Z" fill="none" stroke="#14146E" stroke-width="1.1"/>
<text x="721.9" y="473.09999999999997" text-anchor="start" font-family='"Liberation Sans", sans-serif' font-weight="bold" font-size="6.6" fill="#101018">R2</text>
<text x="721.9" y="484.0" text-anchor="start" font-family='"Liberation Sans", sans-serif' font-weight="bold" font-size="6.6" fill="#101018">1</text>
<circle cx="386.4" cy="459.4" r="2" fill="#B0204A"/>
<path d="M386.4,459.4 L386.4,472.4 M381.4,472.4 L391.4,472.4 M381.4,475.4 L391.4,475.4 M386.4,475.4 L386.4,493.4" fill="none" stroke="#14146E" stroke-width="1.3"/>
<text x="388.4" y="468.09999999999997" text-anchor="start" font-family='"Liberation Sans", sans-serif' font-weight="bold" font-size="6.6" fill="#101018">C1</text>
<text x="388.9" y="483.09999999999997" text-anchor="start" font-family='"Liberation Sans", sans-serif' font-weight="bold" font-size="6.6" fill="#101018">.3396</text>
<path d="M380.9,493.4 L391.9,493.4 L386.4,499.4 Z" fill="none" stroke="#14146E" stroke-width="1.1"/>
<circle cx="425.3" cy="459.4" r="2" fill="#B0204A"/>
<path d="M425.3,459.4 L425.3,468.2 a2.4,2.4 0 0 1 0,4.8 a2.4,2.4 0 0 1 0,4.8 a2.4,2.4 0 0 1 0,4.8 L425.3,493.4" fill="none" stroke="#14146E" stroke-width="1.3"/>
<circle cx="423.0" cy="480.09999999999997" r="1" fill="#14146E"/>
<text x="431.3" y="473.09999999999997" text-anchor="start" font-family='"Liberation Sans", sans-serif' font-weight="bold" font-size="6.6" fill="#101018">L1</text>
<text x="431.3" y="484.7" text-anchor="start" font-family='"Liberation Sans", sans-serif' font-weight="bold" font-size="6.6" fill="#101018">2.945</text>
<path d="M419.8,493.4 L430.8,493.4 L425.3,499.4 Z" fill="none" stroke="#14146E" stroke-width="1.1"/>
<circle cx="518.4" cy="459.4" r="2" fill="#B0204A"/>
<path d="M518.4,459.4 L518.4,472.4 M513.4,472.4 L523.4,472.4 M513.4,475.4 L523.4,475.4 M518.4,475.4 L518.4,493.4" fill="none" stroke="#14146E" stroke-width="1.3"/>
<text x="520.4" y="468.09999999999997" text-anchor="start" font-family='"Liberation Sans", sans-serif' font-weight="bold" font-size="6.6" fill="#101018">C3</text>
<text x="520.9" y="483.09999999999997" text-anchor="start" font-family='"Liberation Sans", sans-serif' font-weight="bold" font-size="6.6" fill="#101018">1.099</text>
<path d="M512.9,493.4 L523.9,493.4 L518.4,499.4 Z" fill="none" stroke="#14146E" stroke-width="1.1"/>
<circle cx="553.6" cy="459.4" r="2" fill="#B0204A"/>
<path d="M553.6,459.4 L553.6,468.2 a2.4,2.4 0 0 1 0,4.8 a2.4,2.4 0 0 1 0,4.8 a2.4,2.4 0 0 1 0,4.8 L553.6,493.4" fill="none" stroke="#14146E" stroke-width="1.3"/>
<circle cx="551.3000000000001" cy="480.09999999999997" r="1" fill="#14146E"/>
<text x="559.6" y="473.09999999999997" text-anchor="start" font-family='"Liberation Sans", sans-serif' font-weight="bold" font-size="6.6" fill="#101018">L3</text>
<text x="559.6" y="484.7" text-anchor="start" font-family='"Liberation Sans", sans-serif' font-weight="bold" font-size="6.6" fill="#101018">.9099</text>
<path d="M548.1,493.4 L559.1,493.4 L553.6,499.4 Z" fill="none" stroke="#14146E" stroke-width="1.1"/>
<circle cx="636.3" cy="459.4" r="2" fill="#B0204A"/>
<path d="M636.3,459.4 L636.3,472.4 M631.3,472.4 L641.3,472.4 M631.3,475.4 L641.3,475.4 M636.3,475.4 L636.3,493.4" fill="none" stroke="#14146E" stroke-width="1.3"/>
<text x="638.3" y="468.09999999999997" text-anchor="start" font-family='"Liberation Sans", sans-serif' font-weight="bold" font-size="6.6" fill="#101018">C5</text>
<text x="638.8" y="483.09999999999997" text-anchor="start" font-family='"Liberation Sans", sans-serif' font-weight="bold" font-size="6.6" fill="#101018">.3396</text>
<path d="M630.8,493.4 L641.8,493.4 L636.3,499.4 Z" fill="none" stroke="#14146E" stroke-width="1.1"/>
<circle cx="671.3" cy="459.4" r="2" fill="#B0204A"/>
<path d="M671.3,459.4 L671.3,468.2 a2.4,2.4 0 0 1 0,4.8 a2.4,2.4 0 0 1 0,4.8 a2.4,2.4 0 0 1 0,4.8 L671.3,493.4" fill="none" stroke="#14146E" stroke-width="1.3"/>
<circle cx="669.0" cy="480.09999999999997" r="1" fill="#14146E"/>
<text x="677.3" y="473.09999999999997" text-anchor="start" font-family='"Liberation Sans", sans-serif' font-weight="bold" font-size="6.6" fill="#101018">L5</text>
<text x="677.3" y="484.7" text-anchor="start" font-family='"Liberation Sans", sans-serif' font-weight="bold" font-size="6.6" fill="#101018">2.945</text>
<path d="M665.8,493.4 L676.8,493.4 L671.3,499.4 Z" fill="none" stroke="#14146E" stroke-width="1.1"/>
<rect x="457" y="453.9" width="4" height="11" fill="#FCF0FC"/>
<path d="M457.8,453.9 L457.8,464.9 M460.8,453.9 L460.8,464.9" stroke="#14146E" stroke-width="1.2"/>
<text x="460" y="452.4" text-anchor="middle" font-family='"Liberation Sans", sans-serif' font-weight="bold" font-size="6.6" fill="#101018">C2</text>
<text x="460" y="469.9" text-anchor="middle" font-family='"Liberation Sans", sans-serif' font-weight="bold" font-size="6.6" fill="#101018">1.125</text>
<rect x="478" y="455.4" width="16" height="5" fill="#FCF0FC"/>
<path d="M478,459.4 a2.66,2.66 0 0 1 5.33,0 a2.66,2.66 0 0 1 5.33,0 a2.66,2.66 0 0 1 5.33,0" fill="none" stroke="#14146E" stroke-width="1.2"/>
<circle cx="490.5" cy="460.9" r="0.9" fill="#14146E"/>
<text x="486" y="452.4" text-anchor="middle" font-family='"Liberation Sans", sans-serif' font-weight="bold" font-size="6.6" fill="#101018">L2</text>
<text x="486" y="469.9" text-anchor="middle" font-family='"Liberation Sans", sans-serif' font-weight="bold" font-size="6.6" fill="#101018">.8890</text>
<rect x="584.4" y="453.9" width="4" height="11" fill="#FCF0FC"/>
<path d="M585.1999999999999,453.9 L585.1999999999999,464.9 M588.1999999999999,453.9 L588.1999999999999,464.9" stroke="#14146E" stroke-width="1.2"/>
<text x="587.4" y="452.4" text-anchor="middle" font-family='"Liberation Sans", sans-serif' font-weight="bold" font-size="6.6" fill="#101018">C4</text>
<text x="587.4" y="469.9" text-anchor="middle" font-family='"Liberation Sans", sans-serif' font-weight="bold" font-size="6.6" fill="#101018">1.125</text>
<rect x="606" y="455.4" width="16" height="5" fill="#FCF0FC"/>
<path d="M606,459.4 a2.66,2.66 0 0 1 5.33,0 a2.66,2.66 0 0 1 5.33,0 a2.66,2.66 0 0 1 5.33,0" fill="none" stroke="#14146E" stroke-width="1.2"/>
<circle cx="618.5" cy="460.9" r="0.9" fill="#14146E"/>
<text x="614" y="452.4" text-anchor="middle" font-family='"Liberation Sans", sans-serif' font-weight="bold" font-size="6.6" fill="#101018">L4</text>
<text x="614" y="469.9" text-anchor="middle" font-family='"Liberation Sans", sans-serif' font-weight="bold" font-size="6.6" fill="#101018">.8890</text>
<text x="705.5" y="456.9" text-anchor="start" font-family='"Liberation Sans", sans-serif' font-weight="bold" font-size="6.6" fill="#101018">OUT1</text>
<path d="M302.4,529.7 L302.4,522.7 L715.5,522.7 L715.5,531.2" fill="none" stroke="#141428" stroke-width="1.5"/>
<circle cx="302.4" cy="539.4000000000001" r="9.5" fill="none" stroke="#1C1C50" stroke-width="1.2"/>
<path d="M302.4,534.7 L302.4,545.2 M300.59999999999997,538.2 L302.4,534.7 L304.2,538.2" fill="none" stroke="#1C1C50" stroke-width="1.3"/>
<line x1="302.4" y1="548.4000000000001" x2="302.4" y2="556.7" stroke="#14146E" stroke-width="1.1"/>
<path d="M296.9,556.7 L307.9,556.7 L302.4,562.7 Z" fill="none" stroke="#14146E" stroke-width="1.1"/>
<text x="312.79999999999995" y="531.1" text-anchor="start" font-family='"Liberation Sans", sans-serif' font-weight="bold" font-size="6.6" fill="#101018">I2</text>
<text x="310.7" y="554.4000000000001" text-anchor="start" font-family='"Liberation Sans", sans-serif' font-weight="bold" font-size="6.6" fill="#101018">AC 1.</text>
<line x1="347.6" y1="522.7" x2="347.6" y2="556.7" stroke="#14146E" stroke-width="1.1"/>
<rect x="344.40000000000003" y="531.1" width="6.2" height="16" fill="#14146E"/>
<circle cx="347.6" cy="522.7" r="2" fill="#B0204A"/>
<path d="M342.1,556.7 L353.1,556.7 L347.6,562.7 Z" fill="none" stroke="#14146E" stroke-width="1.1"/>
<text x="354.0" y="536.4000000000001" text-anchor="start" font-family='"Liberation Sans", sans-serif' font-weight="bold" font-size="6.6" fill="#101018">R3</text>
<text x="354.0" y="547.3000000000001" text-anchor="start" font-family='"Liberation Sans", sans-serif' font-weight="bold" font-size="6.6" fill="#101018">1</text>
<line x1="715.5" y1="522.7" x2="715.5" y2="556.7" stroke="#14146E" stroke-width="1.1"/>
<rect x="712.3" y="531.1" width="6.2" height="16" fill="#14146E"/>
<path d="M710.0,556.7 L721.0,556.7 L715.5,562.7 Z" fill="none" stroke="#14146E" stroke-width="1.1"/>
<text x="721.9" y="536.4000000000001" text-anchor="start" font-family='"Liberation Sans", sans-serif' font-weight="bold" font-size="6.6" fill="#101018">R4</text>
<text x="721.9" y="547.3000000000001" text-anchor="start" font-family='"Liberation Sans", sans-serif' font-weight="bold" font-size="6.6" fill="#101018">1</text>
<circle cx="386.4" cy="522.7" r="2" fill="#B0204A"/>
<path d="M386.4,522.7 L386.4,535.7 M381.4,535.7 L391.4,535.7 M381.4,538.7 L391.4,538.7 M386.4,538.7 L386.4,556.7" fill="none" stroke="#14146E" stroke-width="1.3"/>
<text x="388.4" y="531.4000000000001" text-anchor="start" font-family='"Liberation Sans", sans-serif' font-weight="bold" font-size="6.6" fill="#101018">C6</text>
<text x="388.9" y="546.4000000000001" text-anchor="start" font-family='"Liberation Sans", sans-serif' font-weight="bold" font-size="6.6" fill="#101018">.3903</text>
<path d="M380.9,556.7 L391.9,556.7 L386.4,562.7 Z" fill="none" stroke="#14146E" stroke-width="1.1"/>
<circle cx="425.3" cy="522.7" r="2" fill="#B0204A"/>
<path d="M425.3,522.7 L425.3,531.5 a2.4,2.4 0 0 1 0,4.8 a2.4,2.4 0 0 1 0,4.8 a2.4,2.4 0 0 1 0,4.8 L425.3,556.7" fill="none" stroke="#14146E" stroke-width="1.3"/>
<circle cx="423.0" cy="543.4000000000001" r="1" fill="#14146E"/>
<text x="431.3" y="536.4000000000001" text-anchor="start" font-family='"Liberation Sans", sans-serif' font-weight="bold" font-size="6.6" fill="#101018">L6</text>
<text x="431.3" y="548.0" text-anchor="start" font-family='"Liberation Sans", sans-serif' font-weight="bold" font-size="6.6" fill="#101018">2.562</text>
<path d="M419.8,556.7 L430.8,556.7 L425.3,562.7 Z" fill="none" stroke="#14146E" stroke-width="1.1"/>
<circle cx="518.4" cy="522.7" r="2" fill="#B0204A"/>
<path d="M518.4,522.7 L518.4,535.7 M513.4,535.7 L523.4,535.7 M513.4,538.7 L523.4,538.7 M518.4,538.7 L518.4,556.7" fill="none" stroke="#14146E" stroke-width="1.3"/>
<text x="520.4" y="531.4000000000001" text-anchor="start" font-family='"Liberation Sans", sans-serif' font-weight="bold" font-size="6.6" fill="#101018">C8</text>
<text x="520.9" y="546.4000000000001" text-anchor="start" font-family='"Liberation Sans", sans-serif' font-weight="bold" font-size="6.6" fill="#101018">1.263</text>
<path d="M512.9,556.7 L523.9,556.7 L518.4,562.7 Z" fill="none" stroke="#14146E" stroke-width="1.1"/>
<circle cx="553.6" cy="522.7" r="2" fill="#B0204A"/>
<path d="M553.6,522.7 L553.6,531.5 a2.4,2.4 0 0 1 0,4.8 a2.4,2.4 0 0 1 0,4.8 a2.4,2.4 0 0 1 0,4.8 L553.6,556.7" fill="none" stroke="#14146E" stroke-width="1.3"/>
<circle cx="551.3000000000001" cy="543.4000000000001" r="1" fill="#14146E"/>
<text x="559.6" y="536.4000000000001" text-anchor="start" font-family='"Liberation Sans", sans-serif' font-weight="bold" font-size="6.6" fill="#101018">L8</text>
<text x="559.6" y="548.0" text-anchor="start" font-family='"Liberation Sans", sans-serif' font-weight="bold" font-size="6.6" fill="#101018">.7918</text>
<path d="M548.1,556.7 L559.1,556.7 L553.6,562.7 Z" fill="none" stroke="#14146E" stroke-width="1.1"/>
<circle cx="636.3" cy="522.7" r="2" fill="#B0204A"/>
<path d="M636.3,522.7 L636.3,535.7 M631.3,535.7 L641.3,535.7 M631.3,538.7 L641.3,538.7 M636.3,538.7 L636.3,556.7" fill="none" stroke="#14146E" stroke-width="1.3"/>
<text x="638.3" y="531.4000000000001" text-anchor="start" font-family='"Liberation Sans", sans-serif' font-weight="bold" font-size="6.6" fill="#101018">C10</text>
<text x="638.8" y="546.4000000000001" text-anchor="start" font-family='"Liberation Sans", sans-serif' font-weight="bold" font-size="6.6" fill="#101018">.3903</text>
<path d="M630.8,556.7 L641.8,556.7 L636.3,562.7 Z" fill="none" stroke="#14146E" stroke-width="1.1"/>
<circle cx="671.3" cy="522.7" r="2" fill="#B0204A"/>
<path d="M671.3,522.7 L671.3,531.5 a2.4,2.4 0 0 1 0,4.8 a2.4,2.4 0 0 1 0,4.8 a2.4,2.4 0 0 1 0,4.8 L671.3,556.7" fill="none" stroke="#14146E" stroke-width="1.3"/>
<circle cx="669.0" cy="543.4000000000001" r="1" fill="#14146E"/>
<text x="677.3" y="536.4000000000001" text-anchor="start" font-family='"Liberation Sans", sans-serif' font-weight="bold" font-size="6.6" fill="#101018">L10</text>
<text x="677.3" y="548.0" text-anchor="start" font-family='"Liberation Sans", sans-serif' font-weight="bold" font-size="6.6" fill="#101018">2.562</text>
<path d="M665.8,556.7 L676.8,556.7 L671.3,562.7 Z" fill="none" stroke="#14146E" stroke-width="1.1"/>
<rect x="457" y="517.2" width="4" height="11" fill="#FCF0FC"/>
<path d="M457.8,517.2 L457.8,528.2 M460.8,517.2 L460.8,528.2" stroke="#14146E" stroke-width="1.2"/>
<text x="460" y="515.7" text-anchor="middle" font-family='"Liberation Sans", sans-serif' font-weight="bold" font-size="6.6" fill="#101018">C7</text>
<text x="460" y="533.2" text-anchor="middle" font-family='"Liberation Sans", sans-serif' font-weight="bold" font-size="6.6" fill="#101018">.9785</text>
<rect x="478" y="518.7" width="16" height="5" fill="#FCF0FC"/>
<path d="M478,522.7 a2.66,2.66 0 0 1 5.33,0 a2.66,2.66 0 0 1 5.33,0 a2.66,2.66 0 0 1 5.33,0" fill="none" stroke="#14146E" stroke-width="1.2"/>
<circle cx="490.5" cy="524.2" r="0.9" fill="#14146E"/>
<text x="486" y="515.7" text-anchor="middle" font-family='"Liberation Sans", sans-serif' font-weight="bold" font-size="6.6" fill="#101018">L7</text>
<text x="486" y="533.2" text-anchor="middle" font-family='"Liberation Sans", sans-serif' font-weight="bold" font-size="6.6" fill="#101018">1.022</text>
<rect x="584.4" y="517.2" width="4" height="11" fill="#FCF0FC"/>
<path d="M585.1999999999999,517.2 L585.1999999999999,528.2 M588.1999999999999,517.2 L588.1999999999999,528.2" stroke="#14146E" stroke-width="1.2"/>
<text x="587.4" y="515.7" text-anchor="middle" font-family='"Liberation Sans", sans-serif' font-weight="bold" font-size="6.6" fill="#101018">C9</text>
<text x="587.4" y="533.2" text-anchor="middle" font-family='"Liberation Sans", sans-serif' font-weight="bold" font-size="6.6" fill="#101018">.9785</text>
<rect x="606" y="518.7" width="16" height="5" fill="#FCF0FC"/>
<path d="M606,522.7 a2.66,2.66 0 0 1 5.33,0 a2.66,2.66 0 0 1 5.33,0 a2.66,2.66 0 0 1 5.33,0" fill="none" stroke="#14146E" stroke-width="1.2"/>
<circle cx="618.5" cy="524.2" r="0.9" fill="#14146E"/>
<text x="614" y="515.7" text-anchor="middle" font-family='"Liberation Sans", sans-serif' font-weight="bold" font-size="6.6" fill="#101018">L9</text>
<text x="614" y="533.2" text-anchor="middle" font-family='"Liberation Sans", sans-serif' font-weight="bold" font-size="6.6" fill="#101018">1.022</text>
<text x="705.5" y="520.2" text-anchor="start" font-family='"Liberation Sans", sans-serif' font-weight="bold" font-size="6.6" fill="#101018">OUT2</text>
<path d="M302.4,593.2 L302.4,586.2 L715.5,586.2 L715.5,594.7" fill="none" stroke="#141428" stroke-width="1.5"/>
<circle cx="302.4" cy="602.9000000000001" r="9.5" fill="none" stroke="#1C1C50" stroke-width="1.2"/>
<path d="M302.4,598.2 L302.4,608.7 M300.59999999999997,601.7 L302.4,598.2 L304.2,601.7" fill="none" stroke="#1C1C50" stroke-width="1.3"/>
<line x1="302.4" y1="611.9000000000001" x2="302.4" y2="620.2" stroke="#14146E" stroke-width="1.1"/>
<path d="M296.9,620.2 L307.9,620.2 L302.4,626.2 Z" fill="none" stroke="#14146E" stroke-width="1.1"/>
<text x="312.79999999999995" y="594.6" text-anchor="start" font-family='"Liberation Sans", sans-serif' font-weight="bold" font-size="6.6" fill="#101018">I3</text>
<text x="310.7" y="617.9000000000001" text-anchor="start" font-family='"Liberation Sans", sans-serif' font-weight="bold" font-size="6.6" fill="#101018">AC 1.</text>
<line x1="347.6" y1="586.2" x2="347.6" y2="620.2" stroke="#14146E" stroke-width="1.1"/>
<rect x="344.40000000000003" y="594.6" width="6.2" height="16" fill="#14146E"/>
<circle cx="347.6" cy="586.2" r="2" fill="#B0204A"/>
<path d="M342.1,620.2 L353.1,620.2 L347.6,626.2 Z" fill="none" stroke="#14146E" stroke-width="1.1"/>
<text x="354.0" y="599.9000000000001" text-anchor="start" font-family='"Liberation Sans", sans-serif' font-weight="bold" font-size="6.6" fill="#101018">R5</text>
<text x="354.0" y="610.8000000000001" text-anchor="start" font-family='"Liberation Sans", sans-serif' font-weight="bold" font-size="6.6" fill="#101018">1</text>
<line x1="715.5" y1="586.2" x2="715.5" y2="620.2" stroke="#14146E" stroke-width="1.1"/>
<rect x="712.3" y="594.6" width="6.2" height="16" fill="#14146E"/>
<path d="M710.0,620.2 L721.0,620.2 L715.5,626.2 Z" fill="none" stroke="#14146E" stroke-width="1.1"/>
<text x="721.9" y="599.9000000000001" text-anchor="start" font-family='"Liberation Sans", sans-serif' font-weight="bold" font-size="6.6" fill="#101018">R6</text>
<text x="721.9" y="610.8000000000001" text-anchor="start" font-family='"Liberation Sans", sans-serif' font-weight="bold" font-size="6.6" fill="#101018">1</text>
<circle cx="386.4" cy="586.2" r="2" fill="#B0204A"/>
<path d="M386.4,586.2 L386.4,599.2 M381.4,599.2 L391.4,599.2 M381.4,602.2 L391.4,602.2 M386.4,602.2 L386.4,620.2" fill="none" stroke="#14146E" stroke-width="1.3"/>
<text x="388.4" y="594.9000000000001" text-anchor="start" font-family='"Liberation Sans", sans-serif' font-weight="bold" font-size="6.6" fill="#101018">C11</text>
<text x="388.9" y="609.9000000000001" text-anchor="start" font-family='"Liberation Sans", sans-serif' font-weight="bold" font-size="6.6" fill="#101018">.4714</text>
<path d="M380.9,620.2 L391.9,620.2 L386.4,626.2 Z" fill="none" stroke="#14146E" stroke-width="1.1"/>
<circle cx="425.3" cy="586.2" r="2" fill="#B0204A"/>
<path d="M425.3,586.2 L425.3,595.0 a2.4,2.4 0 0 1 0,4.8 a2.4,2.4 0 0 1 0,4.8 a2.4,2.4 0 0 1 0,4.8 L425.3,620.2" fill="none" stroke="#14146E" stroke-width="1.3"/>
<circle cx="423.0" cy="606.9000000000001" r="1" fill="#14146E"/>
<text x="431.3" y="599.9000000000001" text-anchor="start" font-family='"Liberation Sans", sans-serif' font-weight="bold" font-size="6.6" fill="#101018">L11</text>
<text x="431.3" y="611.5" text-anchor="start" font-family='"Liberation Sans", sans-serif' font-weight="bold" font-size="6.6" fill="#101018">2.1218</text>
<path d="M419.8,620.2 L430.8,620.2 L425.3,626.2 Z" fill="none" stroke="#14146E" stroke-width="1.1"/>
<circle cx="518.4" cy="586.2" r="2" fill="#B0204A"/>
<path d="M518.4,586.2 L518.4,599.2 M513.4,599.2 L523.4,599.2 M513.4,602.2 L523.4,602.2 M518.4,602.2 L518.4,620.2" fill="none" stroke="#14146E" stroke-width="1.3"/>
<text x="520.4" y="594.9000000000001" text-anchor="start" font-family='"Liberation Sans", sans-serif' font-weight="bold" font-size="6.6" fill="#101018">C13</text>
<text x="520.9" y="609.9000000000001" text-anchor="start" font-family='"Liberation Sans", sans-serif' font-weight="bold" font-size="6.6" fill="#101018">1.526</text>
<path d="M512.9,620.2 L523.9,620.2 L518.4,626.2 Z" fill="none" stroke="#14146E" stroke-width="1.1"/>
<circle cx="553.6" cy="586.2" r="2" fill="#B0204A"/>
<path d="M553.6,586.2 L553.6,595.0 a2.4,2.4 0 0 1 0,4.8 a2.4,2.4 0 0 1 0,4.8 a2.4,2.4 0 0 1 0,4.8 L553.6,620.2" fill="none" stroke="#14146E" stroke-width="1.3"/>
<circle cx="551.3000000000001" cy="606.9000000000001" r="1" fill="#14146E"/>
<text x="559.6" y="599.9000000000001" text-anchor="start" font-family='"Liberation Sans", sans-serif' font-weight="bold" font-size="6.6" fill="#101018">L13</text>
<text x="559.6" y="611.5" text-anchor="start" font-family='"Liberation Sans", sans-serif' font-weight="bold" font-size="6.6" fill="#101018">.6553</text>
<path d="M548.1,620.2 L559.1,620.2 L553.6,626.2 Z" fill="none" stroke="#14146E" stroke-width="1.1"/>
<circle cx="636.3" cy="586.2" r="2" fill="#B0204A"/>
<path d="M636.3,586.2 L636.3,599.2 M631.3,599.2 L641.3,599.2 M631.3,602.2 L641.3,602.2 M636.3,602.2 L636.3,620.2" fill="none" stroke="#14146E" stroke-width="1.3"/>
<text x="638.3" y="594.9000000000001" text-anchor="start" font-family='"Liberation Sans", sans-serif' font-weight="bold" font-size="6.6" fill="#101018">C15</text>
<text x="638.8" y="609.9000000000001" text-anchor="start" font-family='"Liberation Sans", sans-serif' font-weight="bold" font-size="6.6" fill="#101018">.4714</text>
<path d="M630.8,620.2 L641.8,620.2 L636.3,626.2 Z" fill="none" stroke="#14146E" stroke-width="1.1"/>
<circle cx="671.3" cy="586.2" r="2" fill="#B0204A"/>
<path d="M671.3,586.2 L671.3,595.0 a2.4,2.4 0 0 1 0,4.8 a2.4,2.4 0 0 1 0,4.8 a2.4,2.4 0 0 1 0,4.8 L671.3,620.2" fill="none" stroke="#14146E" stroke-width="1.3"/>
<circle cx="669.0" cy="606.9000000000001" r="1" fill="#14146E"/>
<text x="677.3" y="599.9000000000001" text-anchor="start" font-family='"Liberation Sans", sans-serif' font-weight="bold" font-size="6.6" fill="#101018">L15</text>
<text x="677.3" y="611.5" text-anchor="start" font-family='"Liberation Sans", sans-serif' font-weight="bold" font-size="6.6" fill="#101018">2.1218</text>
<path d="M665.8,620.2 L676.8,620.2 L671.3,626.2 Z" fill="none" stroke="#14146E" stroke-width="1.1"/>
<rect x="457" y="580.7" width="4" height="11" fill="#FCF0FC"/>
<path d="M457.8,580.7 L457.8,591.7 M460.8,580.7 L460.8,591.7" stroke="#14146E" stroke-width="1.2"/>
<text x="460" y="579.2" text-anchor="middle" font-family='"Liberation Sans", sans-serif' font-weight="bold" font-size="6.6" fill="#101018">C12</text>
<text x="460" y="596.7" text-anchor="middle" font-family='"Liberation Sans", sans-serif' font-weight="bold" font-size="6.6" fill="#101018">.8103</text>
<rect x="478" y="582.2" width="16" height="5" fill="#FCF0FC"/>
<path d="M478,586.2 a2.66,2.66 0 0 1 5.33,0 a2.66,2.66 0 0 1 5.33,0 a2.66,2.66 0 0 1 5.33,0" fill="none" stroke="#14146E" stroke-width="1.2"/>
<circle cx="490.5" cy="587.7" r="0.9" fill="#14146E"/>
<text x="486" y="579.2" text-anchor="middle" font-family='"Liberation Sans", sans-serif' font-weight="bold" font-size="6.6" fill="#101018">L12</text>
<text x="486" y="596.7" text-anchor="middle" font-family='"Liberation Sans", sans-serif' font-weight="bold" font-size="6.6" fill="#101018">1.234</text>
<rect x="584.4" y="580.7" width="4" height="11" fill="#FCF0FC"/>
<path d="M585.1999999999999,580.7 L585.1999999999999,591.7 M588.1999999999999,580.7 L588.1999999999999,591.7" stroke="#14146E" stroke-width="1.2"/>
<text x="587.4" y="579.2" text-anchor="middle" font-family='"Liberation Sans", sans-serif' font-weight="bold" font-size="6.6" fill="#101018">C14</text>
<text x="587.4" y="596.7" text-anchor="middle" font-family='"Liberation Sans", sans-serif' font-weight="bold" font-size="6.6" fill="#101018">.8103</text>
<rect x="606" y="582.2" width="16" height="5" fill="#FCF0FC"/>
<path d="M606,586.2 a2.66,2.66 0 0 1 5.33,0 a2.66,2.66 0 0 1 5.33,0 a2.66,2.66 0 0 1 5.33,0" fill="none" stroke="#14146E" stroke-width="1.2"/>
<circle cx="618.5" cy="587.7" r="0.9" fill="#14146E"/>
<text x="614" y="579.2" text-anchor="middle" font-family='"Liberation Sans", sans-serif' font-weight="bold" font-size="6.6" fill="#101018">L14</text>
<text x="614" y="596.7" text-anchor="middle" font-family='"Liberation Sans", sans-serif' font-weight="bold" font-size="6.6" fill="#101018">1.234</text>
<text x="705.5" y="583.7" text-anchor="start" font-family='"Liberation Sans", sans-serif' font-weight="bold" font-size="6.6" fill="#101018">OUT3</text>
<path d="M302.4,652.3 L302.4,645.3 L715.5,645.3 L715.5,653.8" fill="none" stroke="#141428" stroke-width="1.5"/>
<circle cx="302.4" cy="662.0" r="9.5" fill="none" stroke="#1C1C50" stroke-width="1.2"/>
<path d="M302.4,657.3 L302.4,667.8 M300.59999999999997,660.8 L302.4,657.3 L304.2,660.8" fill="none" stroke="#1C1C50" stroke-width="1.3"/>
<line x1="302.4" y1="671.0" x2="302.4" y2="679.3" stroke="#14146E" stroke-width="1.1"/>
<path d="M296.9,679.3 L307.9,679.3 L302.4,685.3 Z" fill="none" stroke="#14146E" stroke-width="1.1"/>
<text x="312.79999999999995" y="653.6999999999999" text-anchor="start" font-family='"Liberation Sans", sans-serif' font-weight="bold" font-size="6.6" fill="#101018">I4</text>
<text x="310.7" y="677.0" text-anchor="start" font-family='"Liberation Sans", sans-serif' font-weight="bold" font-size="6.6" fill="#101018">AC 1.</text>
<line x1="347.6" y1="645.3" x2="347.6" y2="679.3" stroke="#14146E" stroke-width="1.1"/>
<rect x="344.40000000000003" y="653.6999999999999" width="6.2" height="16" fill="#14146E"/>
<circle cx="347.6" cy="645.3" r="2" fill="#B0204A"/>
<path d="M342.1,679.3 L353.1,679.3 L347.6,685.3 Z" fill="none" stroke="#14146E" stroke-width="1.1"/>
<text x="354.0" y="659.0" text-anchor="start" font-family='"Liberation Sans", sans-serif' font-weight="bold" font-size="6.6" fill="#101018">R7</text>
<text x="354.0" y="669.9" text-anchor="start" font-family='"Liberation Sans", sans-serif' font-weight="bold" font-size="6.6" fill="#101018">1</text>
<line x1="715.5" y1="645.3" x2="715.5" y2="679.3" stroke="#14146E" stroke-width="1.1"/>
<rect x="712.3" y="653.6999999999999" width="6.2" height="16" fill="#14146E"/>
<path d="M710.0,679.3 L721.0,679.3 L715.5,685.3 Z" fill="none" stroke="#14146E" stroke-width="1.1"/>
<text x="721.9" y="659.0" text-anchor="start" font-family='"Liberation Sans", sans-serif' font-weight="bold" font-size="6.6" fill="#101018">R8</text>
<text x="721.9" y="669.9" text-anchor="start" font-family='"Liberation Sans", sans-serif' font-weight="bold" font-size="6.6" fill="#101018">1</text>
<circle cx="386.4" cy="645.3" r="2" fill="#B0204A"/>
<path d="M386.4,645.3 L386.4,658.3 M381.4,658.3 L391.4,658.3 M381.4,661.3 L391.4,661.3 M386.4,661.3 L386.4,679.3" fill="none" stroke="#14146E" stroke-width="1.3"/>
<text x="388.4" y="654.0" text-anchor="start" font-family='"Liberation Sans", sans-serif' font-weight="bold" font-size="6.6" fill="#101018">C16</text>
<text x="388.9" y="669.0" text-anchor="start" font-family='"Liberation Sans", sans-serif' font-weight="bold" font-size="6.6" fill="#101018">.6177</text>
<path d="M380.9,679.3 L391.9,679.3 L386.4,685.3 Z" fill="none" stroke="#14146E" stroke-width="1.1"/>
<circle cx="425.3" cy="645.3" r="2" fill="#B0204A"/>
<path d="M425.3,645.3 L425.3,654.0999999999999 a2.4,2.4 0 0 1 0,4.8 a2.4,2.4 0 0 1 0,4.8 a2.4,2.4 0 0 1 0,4.8 L425.3,679.3" fill="none" stroke="#14146E" stroke-width="1.3"/>
<circle cx="423.0" cy="666.0" r="1" fill="#14146E"/>
<text x="431.3" y="659.0" text-anchor="start" font-family='"Liberation Sans", sans-serif' font-weight="bold" font-size="6.6" fill="#101018">L16</text>
<text x="431.3" y="670.5999999999999" text-anchor="start" font-family='"Liberation Sans", sans-serif' font-weight="bold" font-size="6.6" fill="#101018">1.617</text>
<path d="M419.8,679.3 L430.8,679.3 L425.3,685.3 Z" fill="none" stroke="#14146E" stroke-width="1.1"/>
<circle cx="518.4" cy="645.3" r="2" fill="#B0204A"/>
<path d="M518.4,645.3 L518.4,658.3 M513.4,658.3 L523.4,658.3 M513.4,661.3 L523.4,661.3 M518.4,661.3 L518.4,679.3" fill="none" stroke="#14146E" stroke-width="1.3"/>
<text x="520.4" y="654.0" text-anchor="start" font-family='"Liberation Sans", sans-serif' font-weight="bold" font-size="6.6" fill="#101018">C18</text>
<text x="520.9" y="669.0" text-anchor="start" font-family='"Liberation Sans", sans-serif' font-weight="bold" font-size="6.6" fill="#101018">2</text>
<path d="M512.9,679.3 L523.9,679.3 L518.4,685.3 Z" fill="none" stroke="#14146E" stroke-width="1.1"/>
<circle cx="553.6" cy="645.3" r="2" fill="#B0204A"/>
<path d="M553.6,645.3 L553.6,654.0999999999999 a2.4,2.4 0 0 1 0,4.8 a2.4,2.4 0 0 1 0,4.8 a2.4,2.4 0 0 1 0,4.8 L553.6,679.3" fill="none" stroke="#14146E" stroke-width="1.3"/>
<circle cx="551.3000000000001" cy="666.0" r="1" fill="#14146E"/>
<text x="559.6" y="659.0" text-anchor="start" font-family='"Liberation Sans", sans-serif' font-weight="bold" font-size="6.6" fill="#101018">L18</text>
<text x="559.6" y="670.5999999999999" text-anchor="start" font-family='"Liberation Sans", sans-serif' font-weight="bold" font-size="6.6" fill="#101018">.5</text>
<path d="M548.1,679.3 L559.1,679.3 L553.6,685.3 Z" fill="none" stroke="#14146E" stroke-width="1.1"/>
<circle cx="636.3" cy="645.3" r="2" fill="#B0204A"/>
<path d="M636.3,645.3 L636.3,658.3 M631.3,658.3 L641.3,658.3 M631.3,661.3 L641.3,661.3 M636.3,661.3 L636.3,679.3" fill="none" stroke="#14146E" stroke-width="1.3"/>
<text x="638.3" y="654.0" text-anchor="start" font-family='"Liberation Sans", sans-serif' font-weight="bold" font-size="6.6" fill="#101018">C20</text>
<text x="638.8" y="669.0" text-anchor="start" font-family='"Liberation Sans", sans-serif' font-weight="bold" font-size="6.6" fill="#101018">.6177</text>
<path d="M630.8,679.3 L641.8,679.3 L636.3,685.3 Z" fill="none" stroke="#14146E" stroke-width="1.1"/>
<circle cx="671.3" cy="645.3" r="2" fill="#B0204A"/>
<path d="M671.3,645.3 L671.3,654.0999999999999 a2.4,2.4 0 0 1 0,4.8 a2.4,2.4 0 0 1 0,4.8 a2.4,2.4 0 0 1 0,4.8 L671.3,679.3" fill="none" stroke="#14146E" stroke-width="1.3"/>
<circle cx="669.0" cy="666.0" r="1" fill="#14146E"/>
<text x="677.3" y="659.0" text-anchor="start" font-family='"Liberation Sans", sans-serif' font-weight="bold" font-size="6.6" fill="#101018">L20</text>
<text x="677.3" y="670.5999999999999" text-anchor="start" font-family='"Liberation Sans", sans-serif' font-weight="bold" font-size="6.6" fill="#101018">1.617</text>
<path d="M665.8,679.3 L676.8,679.3 L671.3,685.3 Z" fill="none" stroke="#14146E" stroke-width="1.1"/>
<rect x="457" y="639.8" width="4" height="11" fill="#FCF0FC"/>
<path d="M457.8,639.8 L457.8,650.8 M460.8,639.8 L460.8,650.8" stroke="#14146E" stroke-width="1.2"/>
<text x="460" y="638.3" text-anchor="middle" font-family='"Liberation Sans", sans-serif' font-weight="bold" font-size="6.6" fill="#101018">C17</text>
<text x="460" y="655.8" text-anchor="middle" font-family='"Liberation Sans", sans-serif' font-weight="bold" font-size="6.6" fill="#101018">.6177</text>
<rect x="478" y="641.3" width="16" height="5" fill="#FCF0FC"/>
<path d="M478,645.3 a2.66,2.66 0 0 1 5.33,0 a2.66,2.66 0 0 1 5.33,0 a2.66,2.66 0 0 1 5.33,0" fill="none" stroke="#14146E" stroke-width="1.2"/>
<circle cx="490.5" cy="646.8" r="0.9" fill="#14146E"/>
<text x="486" y="638.3" text-anchor="middle" font-family='"Liberation Sans", sans-serif' font-weight="bold" font-size="6.6" fill="#101018">L17</text>
<text x="486" y="655.8" text-anchor="middle" font-family='"Liberation Sans", sans-serif' font-weight="bold" font-size="6.6" fill="#101018">1.617</text>
<rect x="584.4" y="639.8" width="4" height="11" fill="#FCF0FC"/>
<path d="M585.1999999999999,639.8 L585.1999999999999,650.8 M588.1999999999999,639.8 L588.1999999999999,650.8" stroke="#14146E" stroke-width="1.2"/>
<text x="587.4" y="638.3" text-anchor="middle" font-family='"Liberation Sans", sans-serif' font-weight="bold" font-size="6.6" fill="#101018">C19</text>
<text x="587.4" y="655.8" text-anchor="middle" font-family='"Liberation Sans", sans-serif' font-weight="bold" font-size="6.6" fill="#101018">.6177</text>
<rect x="606" y="641.3" width="16" height="5" fill="#FCF0FC"/>
<path d="M606,645.3 a2.66,2.66 0 0 1 5.33,0 a2.66,2.66 0 0 1 5.33,0 a2.66,2.66 0 0 1 5.33,0" fill="none" stroke="#14146E" stroke-width="1.2"/>
<circle cx="618.5" cy="646.8" r="0.9" fill="#14146E"/>
<text x="614" y="638.3" text-anchor="middle" font-family='"Liberation Sans", sans-serif' font-weight="bold" font-size="6.6" fill="#101018">L19</text>
<text x="614" y="655.8" text-anchor="middle" font-family='"Liberation Sans", sans-serif' font-weight="bold" font-size="6.6" fill="#101018">1.617</text>
<text x="705.5" y="642.8" text-anchor="start" font-family='"Liberation Sans", sans-serif' font-weight="bold" font-size="6.6" fill="#101018">OUT4</text>
<text x="343" y="701" text-anchor="start" font-family='"Liberation Sans", sans-serif' font-weight="bold" font-size="6.6" fill="#101018">.ac oct 50 .01 3</text>
<clipPath id="cpPlot"><rect x="0" y="0" width="1021" height="405"/></clipPath><clipPath id="cpSch"><rect x="0" y="405" width="1021" height="307"/></clipPath>
<g clip-path="url(#cpPlot)">
<line x1="712.2" y1="459.0" x2="745.4" y2="226" stroke="#CC38EE" stroke-width="2"/>
<line x1="715.0" y1="523.5" x2="796.4" y2="258.2" stroke="#CC38EE" stroke-width="2"/>
<line x1="712.0" y1="586.5" x2="868.8" y2="305.2" stroke="#CC38EE" stroke-width="2"/>
<line x1="716.3" y1="643.5" x2="918.6" y2="347" stroke="#CC38EE" stroke-width="2"/>
</g>
<g clip-path="url(#cpSch)">
<line x1="712.2" y1="459.0" x2="745.4" y2="226" stroke="#B028C8" stroke-width="2"/>
<line x1="715.0" y1="523.5" x2="796.4" y2="258.2" stroke="#B028C8" stroke-width="2"/>
<line x1="712.0" y1="586.5" x2="868.8" y2="305.2" stroke="#B028C8" stroke-width="2"/>
<line x1="716.3" y1="643.5" x2="918.6" y2="347" stroke="#B028C8" stroke-width="2"/>
</g>
</svg>
</body></html>
